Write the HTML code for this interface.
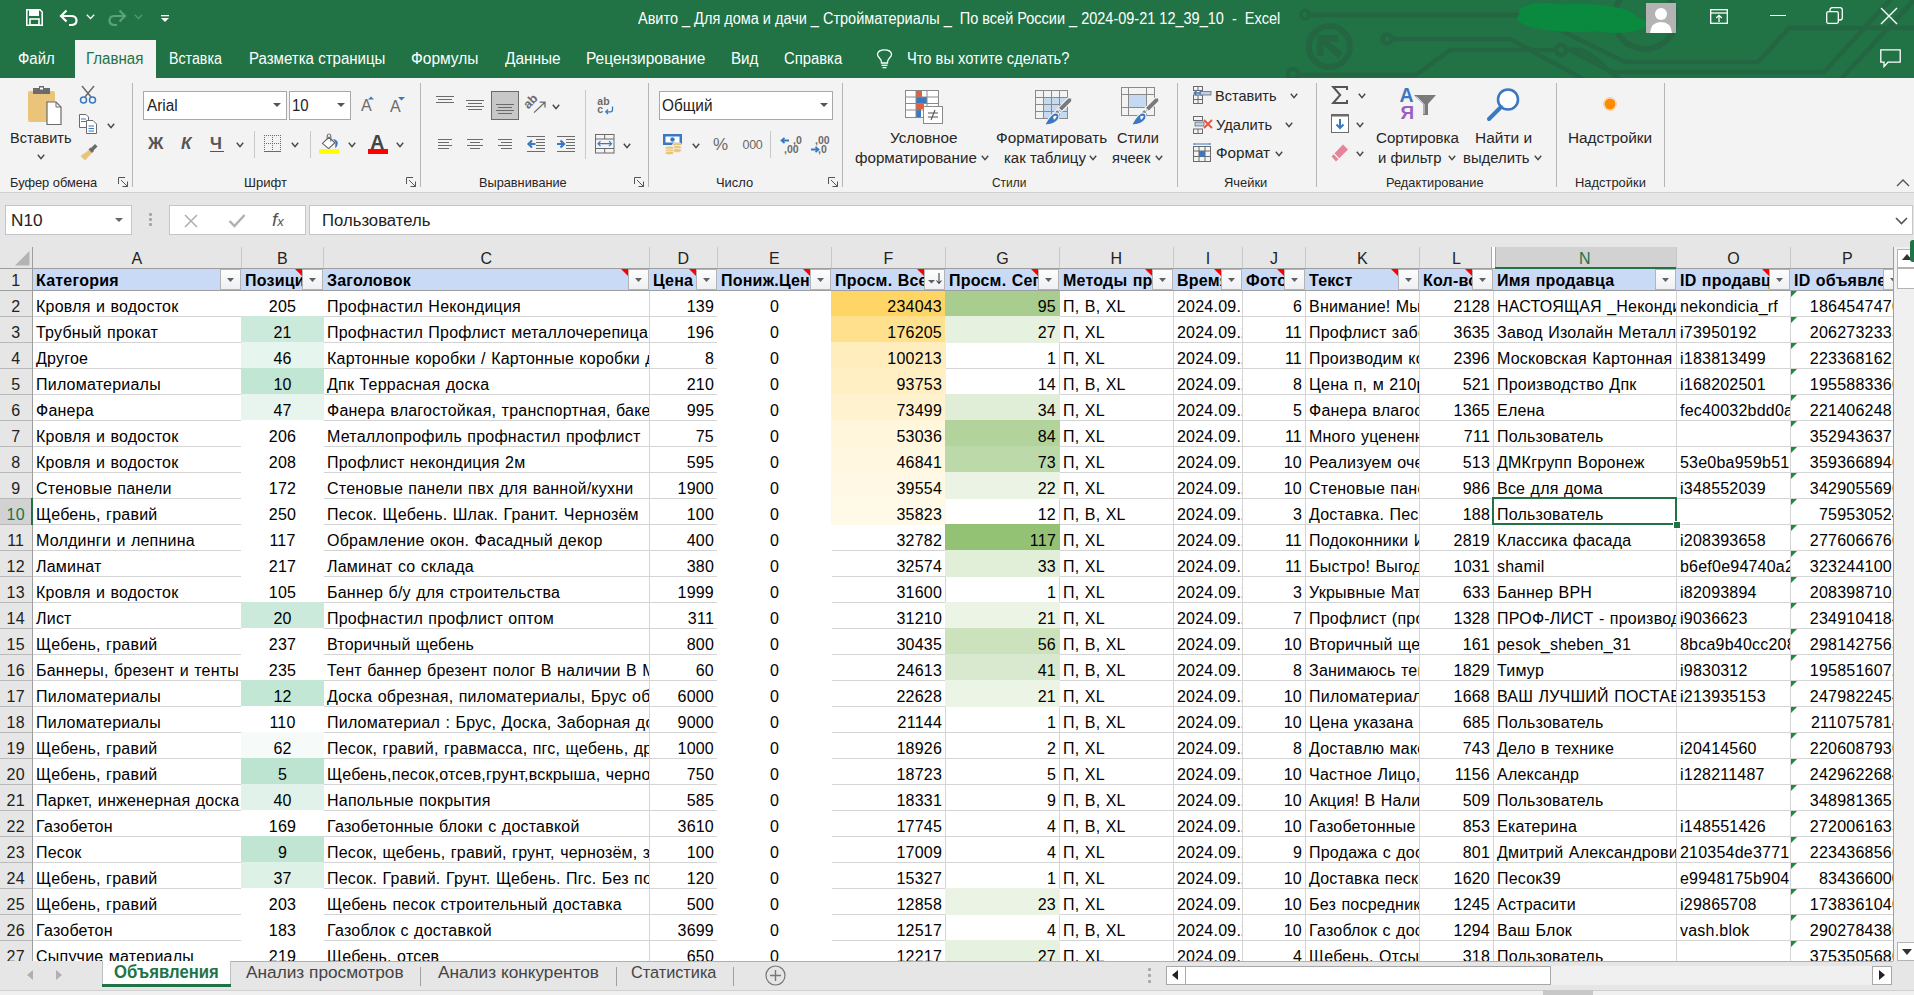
<!DOCTYPE html>
<html><head><meta charset="utf-8"><style>
html,body{margin:0;padding:0;}
body{width:1914px;height:995px;position:relative;overflow:hidden;background:#f0f0f0;font-family:"Liberation Sans",sans-serif;}
.a{position:absolute;}
.t{position:absolute;white-space:pre;}
svg.a{overflow:visible;}
</style></head><body>
<div class="a" style="left:0px;top:0px;width:1914px;height:78px;background:#217346;"></div>
<svg class="a" style="left:1240px;top:0px;" width="674" height="78" viewBox="0 0 674 78">
<g fill="none" stroke="#246642" stroke-width="4.6" stroke-linecap="round" stroke-linejoin="round">
<circle cx="65" cy="14.5" r="4.2" stroke-width="3.4"/><line x1="69" y1="15" x2="290" y2="15" stroke-width="5"/>
<circle cx="89.4" cy="46.6" r="20.5" stroke-width="6"/>
<path d="M80.5 38.5 L100.5 55.5" stroke-width="6.5" stroke-linecap="butt"/>
<rect x="77" y="35" width="21" height="6.5" fill="#246642" stroke="none"/><rect x="77" y="35" width="6.5" height="21" fill="#246642" stroke="none"/>
<circle cx="147" cy="39" r="4.5"/><path d="M151.5 39 L270 39 L345 80"/>
<circle cx="53" cy="74" r="5"/><path d="M58 75 L176 75 L210 50 L316 50"/><circle cx="321" cy="50" r="5"/>
<path d="M326 50 L340 50 Q350 52 370 72 L380 80"/>
<circle cx="405" cy="18" r="31" stroke-width="6"/>
<path d="M300 20 L385 62 L518 62 L549 28 L674 28"/>
<path d="M330 50 L372 72 L584 72 L650 0"/>
<path d="M600 80 L674 0"/>
</g></svg>
<svg class="a" style="left:1515px;top:0px;" width="135" height="36" viewBox="0 0 135 36"><g fill="#0a8a3e"><ellipse cx="62" cy="18" rx="60" ry="14"/><ellipse cx="100" cy="24" rx="32" ry="9"/><ellipse cx="30" cy="12" rx="26" ry="9"/></g></svg>
<svg class="a" style="left:1646px;top:3px;" width="30" height="30" viewBox="0 0 30 30"><rect width="30" height="30" fill="#b3b3b3"/><circle cx="15" cy="11" r="6" fill="#fff"/><path d="M4 30 Q5 19 15 19 Q25 19 26 30 Z" fill="#fff"/></svg>
<svg class="a" style="left:1710px;top:9px;" width="18" height="15" viewBox="0 0 18 15"><g fill="none" stroke="#fff" stroke-width="1.3"><rect x="0.7" y="0.7" width="16.6" height="13.6"/><line x1="0.7" y1="4" x2="17.3" y2="4"/><path d="M9 13 V6.5 M6.2 9 L9 6.3 L11.8 9"/></g></svg>
<div class="a" style="left:1770px;top:15px;width:16px;height:1.3px;background:#fff;"></div>
<svg class="a" style="left:1826px;top:7px;" width="17" height="17" viewBox="0 0 17 17"><g fill="none" stroke="#fff" stroke-width="1.3"><rect x="0.7" y="4.7" width="11.6" height="11.6" rx="1.5"/><path d="M4 4.5 V3 Q4 0.7 6.3 0.7 H14 Q16.3 0.7 16.3 3 V10.7 Q16.3 13 14 13 H12.5"/></g></svg>
<svg class="a" style="left:1880px;top:7px;" width="18" height="18" viewBox="0 0 18 18"><g stroke="#fff" stroke-width="1.4"><line x1="1" y1="1" x2="17" y2="17"/><line x1="17" y1="1" x2="1" y2="17"/></g></svg>
<svg class="a" style="left:26px;top:9px;" width="17" height="17" viewBox="0 0 17 17"><path d="M0.8 0.8 H14 L16.2 3 V16.2 H0.8 Z" fill="none" stroke="#fff" stroke-width="1.6"/><rect x="3" y="1" width="10" height="6" fill="#fff"/><rect x="4" y="10" width="9" height="6" fill="none" stroke="#fff" stroke-width="1.6"/></svg>
<svg class="a" style="left:59px;top:9px;" width="20" height="17" viewBox="0 0 20 17"><path d="M3 7 H12 Q17.5 7 17.5 11.5 Q17.5 16 12 16 H10" fill="none" stroke="#fff" stroke-width="2.2"/><path d="M7.5 1.5 L2 7 L7.5 12.5" fill="none" stroke="#fff" stroke-width="2.2"/></svg>
<svg class="a" style="left:86px;top:14px;" width="9" height="6" viewBox="0 0 9 6"><path d="M0.8 0.8 L4.5 4.5 L8.2 0.8" fill="none" stroke="#fff" stroke-width="1.3"/></svg>
<svg class="a" style="left:107px;top:9px;" width="20" height="17" viewBox="0 0 20 17"><path d="M17 7 H8 Q2.5 7 2.5 11.5 Q2.5 16 8 16 H10" fill="none" stroke="#5aa37a" stroke-width="2.2"/><path d="M12.5 1.5 L18 7 L12.5 12.5" fill="none" stroke="#5aa37a" stroke-width="2.2"/></svg>
<svg class="a" style="left:134px;top:14px;" width="9" height="6" viewBox="0 0 9 6"><path d="M0.8 0.8 L4.5 4.5 L8.2 0.8" fill="none" stroke="#4f9a70" stroke-width="1.3"/></svg>
<svg class="a" style="left:161px;top:15px;" width="8" height="8" viewBox="0 0 8 8"><rect x="0" y="0" width="8" height="1.3" fill="#fff"/><path d="M0 3 H8 L4 7 Z" fill="#fff"/></svg>
<div class="t" style="left:638.20px;top:10px;font-size:15.988px;line-height:17px;color:#fff;transform:scaleX(0.9078);transform-origin:0 0;">Авито _ Для дома и дачи _ Стройматериалы _  По всей России _ 2024-09-21 12_39_10  -  Excel</div>
<div class="a" style="left:75px;top:40px;width:81px;height:38px;background:#f3f3f3;"></div>
<div class="t" style="left:17.54px;top:50px;font-size:15.988px;line-height:17px;color:#fff;transform:scaleX(0.9358);transform-origin:0 0;">Файл</div>
<div class="t" style="left:86.19px;top:50px;font-size:15.988px;line-height:17px;color:#217346;transform:scaleX(0.9440);transform-origin:0 0;">Главная</div>
<div class="t" style="left:169.46px;top:50px;font-size:15.988px;line-height:17px;color:#fff;transform:scaleX(0.8907);transform-origin:0 0;">Вставка</div>
<div class="t" style="left:249.10px;top:50px;font-size:15.988px;line-height:17px;color:#fff;transform:scaleX(0.9414);transform-origin:0 0;">Разметка страницы</div>
<div class="t" style="left:411.11px;top:50px;font-size:15.988px;line-height:17px;color:#fff;transform:scaleX(0.9711);transform-origin:0 0;">Формулы</div>
<div class="t" style="left:504.92px;top:50px;font-size:15.988px;line-height:17px;color:#fff;transform:scaleX(0.9649);transform-origin:0 0;">Данные</div>
<div class="t" style="left:585.76px;top:50px;font-size:15.988px;line-height:17px;color:#fff;transform:scaleX(0.9673);transform-origin:0 0;">Рецензирование</div>
<div class="t" style="left:730.79px;top:50px;font-size:15.988px;line-height:17px;color:#fff;transform:scaleX(0.9496);transform-origin:0 0;">Вид</div>
<div class="t" style="left:784.26px;top:50px;font-size:15.988px;line-height:17px;color:#fff;transform:scaleX(0.9281);transform-origin:0 0;">Справка</div>
<div class="t" style="left:906.86px;top:50px;font-size:15.988px;line-height:17px;color:#fff;transform:scaleX(0.9202);transform-origin:0 0;">Что вы хотите сделать?</div>
<svg class="a" style="left:876px;top:49px;" width="17" height="20" viewBox="0 0 17 20"><g fill="none" stroke="#fff" stroke-width="1.3"><path d="M5.5 14 Q5.5 11 3.5 9 Q1 6.5 1.5 4.8 Q2.5 0.8 8.5 0.8 Q14.5 0.8 15.5 4.8 Q16 6.5 13.5 9 Q11.5 11 11.5 14 Z"/><line x1="5.5" y1="16.3" x2="11.5" y2="16.3"/><line x1="6.5" y1="18.6" x2="10.5" y2="18.6"/></g></svg>
<svg class="a" style="left:1880px;top:49px;" width="21" height="20" viewBox="0 0 21 20"><path d="M0.8 0.8 H20.2 V13.2 H8 L4 17.5 V13.2 H0.8 Z" fill="none" stroke="#fff" stroke-width="1.3"/></svg>
<div class="a" style="left:0px;top:78px;width:1914px;height:114px;background:#f3f3f3;"></div>
<div class="a" style="left:0px;top:192px;width:1914px;height:1px;background:#d0d0d0;"></div>
<div class="a" style="left:132px;top:83px;width:1px;height:104px;background:#b6b6b6;"></div>
<div class="a" style="left:420px;top:83px;width:1px;height:104px;background:#b6b6b6;"></div>
<div class="a" style="left:648px;top:83px;width:1px;height:104px;background:#b6b6b6;"></div>
<div class="a" style="left:842px;top:83px;width:1px;height:104px;background:#b6b6b6;"></div>
<div class="a" style="left:1177px;top:83px;width:1px;height:104px;background:#b6b6b6;"></div>
<div class="a" style="left:1316px;top:83px;width:1px;height:104px;background:#b6b6b6;"></div>
<div class="a" style="left:1556px;top:83px;width:1px;height:104px;background:#b6b6b6;"></div>
<div class="a" style="left:1664px;top:83px;width:1px;height:104px;background:#b6b6b6;"></div>
<svg class="a" style="left:27px;top:86px;" width="36" height="40" viewBox="0 0 36 40"><rect x="1" y="5" width="27" height="31" rx="2" fill="#e9c47a"/>
<rect x="6" y="2" width="17" height="6" fill="#6b6b6b"/><rect x="12" y="0" width="5" height="4" fill="#6b6b6b"/><rect x="13" y="1.5" width="3" height="2" fill="#fff"/>
<path d="M20 16 H29 L34 21 V38.5 H20 Z" fill="#fff" stroke="#6b6b6b" stroke-width="1.2"/><path d="M29 16 V21 H34" fill="none" stroke="#6b6b6b" stroke-width="1"/></svg>
<div class="t" style="left:10.34px;top:129px;font-size:15.552px;line-height:17px;color:#262626;transform:scaleX(0.9338);transform-origin:0 0;">Вставить</div>
<svg class="a" style="left:37px;top:154px;" width="8" height="6" viewBox="0 0 8 6"><path d="M0.8 0.8 L4.0 4.7 L7.2 0.8" fill="none" stroke="#444" stroke-width="1.4"/></svg>
<svg class="a" style="left:79px;top:85px;" width="18" height="19" viewBox="0 0 18 19"><g fill="none" stroke="#6b6b6b" stroke-width="1.5"><path d="M3 1 L12 12 M15 1 L6 12"/></g><g fill="none" stroke="#3b78c2" stroke-width="1.5"><circle cx="4.5" cy="15" r="3"/><circle cx="13.5" cy="15" r="3"/></g></svg>
<svg class="a" style="left:79px;top:114px;" width="19" height="20" viewBox="0 0 19 20"><g fill="#fff" stroke="#6b6b6b" stroke-width="1"><path d="M0.5 0.5 H7 L9.5 3 V13.5 H0.5 Z"/><path d="M7.5 6.5 H14 L17.5 10 V19.5 H7.5 Z"/></g><g stroke="#3b78c2" stroke-width="1"><line x1="2" y1="5" x2="7" y2="5"/><line x1="2" y1="7.5" x2="7" y2="7.5"/><line x1="9.5" y1="12" x2="15" y2="12"/><line x1="9.5" y1="14.5" x2="15" y2="14.5"/><line x1="9.5" y1="17" x2="15" y2="17"/></g></svg>
<svg class="a" style="left:107px;top:123px;" width="8" height="6" viewBox="0 0 8 6"><path d="M0.8 0.8 L4.0 4.7 L7.2 0.8" fill="none" stroke="#444" stroke-width="1.4"/></svg>
<svg class="a" style="left:80px;top:144px;" width="18" height="17" viewBox="0 0 18 17"><path d="M9 6 L12 9 L5 16.5 L0.5 12 Z" fill="#e9c47a"/><path d="M10 5 L15 0 L17.5 2.5 L12.5 7.5 Z" fill="#6b6b6b"/><path d="M8.5 5.5 L10.5 3.5 L14 7 L12 9 Z" fill="#6b6b6b"/></svg>
<div class="t" style="left:10.37px;top:175px;font-size:12.791px;line-height:15px;color:#262626;transform:scaleX(1.0044);transform-origin:0 0;">Буфер обмена</div>
<svg class="a" style="left:118px;top:177px;" width="11" height="11" viewBox="0 0 11 11"><g fill="none" stroke="#555" stroke-width="1"><path d="M0.5 7 V0.5 H7"/><path d="M3 3 L9.5 9.5 M4.5 9.5 H9.5 V4.5"/></g></svg>
<div class="a" style="left:143px;top:91px;width:144px;height:29px;background:#fff;box-sizing:border-box;border:1px solid #a8a8a8;"></div>
<div class="t" style="left:146.50px;top:97px;font-size:15.988px;line-height:17px;color:#222;transform:scaleX(0.9600);transform-origin:0 0;">Arial</div>
<svg class="a" style="left:273px;top:103px;" width="8" height="5" viewBox="0 0 8 5"><path d="M0 0 H8 L4 4 Z" fill="#555"/></svg>
<div class="a" style="left:289px;top:91px;width:62px;height:29px;background:#fff;box-sizing:border-box;border:1px solid #a8a8a8;"></div>
<div class="t" style="left:291.88px;top:97px;font-size:15.988px;line-height:17px;color:#222;transform:scaleX(0.9343);transform-origin:0 0;">10</div>
<svg class="a" style="left:337px;top:103px;" width="8" height="5" viewBox="0 0 8 5"><path d="M0 0 H8 L4 4 Z" fill="#555"/></svg>
<div class="t" style="top:96.46px;font-size:16px;line-height:20.0px;color:#6b6b6b;left:361px;">A</div>
<svg class="a" style="left:368px;top:96px;" width="6" height="4" viewBox="0 0 6 4"><path d="M0 3.5 L3 0.5 L6 3.5 Z" fill="#3b78c2"/></svg>
<div class="t" style="top:97.46px;font-size:16px;line-height:20.0px;color:#6b6b6b;left:390px;">A</div>
<svg class="a" style="left:398px;top:97px;" width="7" height="4" viewBox="0 0 7 4"><path d="M0 0 H7 L3.5 3.5 Z" fill="#3b78c2"/></svg>
<div class="t" style="top:133.48px;font-size:17px;line-height:21.25px;color:#555;font-weight:700;left:148px;">Ж</div>
<div class="t" style="top:133.48px;font-size:17px;line-height:21.25px;color:#555;font-weight:700;left:181px;font-style:italic;">К</div>
<div class="t" style="top:133.48px;font-size:17px;line-height:21.25px;color:#555;font-weight:700;left:210px;">Ч</div>
<div class="a" style="left:210px;top:151px;width:14px;height:1.3px;background:#555;"></div>
<svg class="a" style="left:236px;top:142px;" width="8" height="6" viewBox="0 0 8 6"><path d="M0.8 0.8 L4.0 4.7 L7.2 0.8" fill="none" stroke="#444" stroke-width="1.4"/></svg>
<div class="a" style="left:254px;top:131px;width:1px;height:27px;background:#c8c8c8;"></div>
<svg class="a" style="left:264px;top:135px;" width="18" height="17" viewBox="0 0 18 17"><rect x="0" y="0" width="1" height="1" fill="#6b6b6b"/><rect x="0" y="8" width="1" height="1" fill="#6b6b6b"/><rect x="2" y="0" width="1" height="1" fill="#6b6b6b"/><rect x="2" y="8" width="1" height="1" fill="#6b6b6b"/><rect x="4" y="0" width="1" height="1" fill="#6b6b6b"/><rect x="4" y="8" width="1" height="1" fill="#6b6b6b"/><rect x="6" y="0" width="1" height="1" fill="#6b6b6b"/><rect x="6" y="8" width="1" height="1" fill="#6b6b6b"/><rect x="8" y="0" width="1" height="1" fill="#6b6b6b"/><rect x="8" y="8" width="1" height="1" fill="#6b6b6b"/><rect x="10" y="0" width="1" height="1" fill="#6b6b6b"/><rect x="10" y="8" width="1" height="1" fill="#6b6b6b"/><rect x="12" y="0" width="1" height="1" fill="#6b6b6b"/><rect x="12" y="8" width="1" height="1" fill="#6b6b6b"/><rect x="14" y="0" width="1" height="1" fill="#6b6b6b"/><rect x="14" y="8" width="1" height="1" fill="#6b6b6b"/><rect x="16" y="0" width="1" height="1" fill="#6b6b6b"/><rect x="16" y="8" width="1" height="1" fill="#6b6b6b"/><rect x="0" y="0" width="1" height="1" fill="#6b6b6b"/><rect x="8" y="0" width="1" height="1" fill="#6b6b6b"/><rect x="16" y="0" width="1" height="1" fill="#6b6b6b"/><rect x="0" y="2" width="1" height="1" fill="#6b6b6b"/><rect x="8" y="2" width="1" height="1" fill="#6b6b6b"/><rect x="16" y="2" width="1" height="1" fill="#6b6b6b"/><rect x="0" y="4" width="1" height="1" fill="#6b6b6b"/><rect x="8" y="4" width="1" height="1" fill="#6b6b6b"/><rect x="16" y="4" width="1" height="1" fill="#6b6b6b"/><rect x="0" y="6" width="1" height="1" fill="#6b6b6b"/><rect x="8" y="6" width="1" height="1" fill="#6b6b6b"/><rect x="16" y="6" width="1" height="1" fill="#6b6b6b"/><rect x="0" y="8" width="1" height="1" fill="#6b6b6b"/><rect x="8" y="8" width="1" height="1" fill="#6b6b6b"/><rect x="16" y="8" width="1" height="1" fill="#6b6b6b"/><rect x="0" y="10" width="1" height="1" fill="#6b6b6b"/><rect x="8" y="10" width="1" height="1" fill="#6b6b6b"/><rect x="16" y="10" width="1" height="1" fill="#6b6b6b"/><rect x="0" y="12" width="1" height="1" fill="#6b6b6b"/><rect x="8" y="12" width="1" height="1" fill="#6b6b6b"/><rect x="16" y="12" width="1" height="1" fill="#6b6b6b"/><rect x="0" y="14" width="1" height="1" fill="#6b6b6b"/><rect x="8" y="14" width="1" height="1" fill="#6b6b6b"/><rect x="16" y="14" width="1" height="1" fill="#6b6b6b"/><rect x="0" y="16" width="17" height="1" fill="#6b6b6b"/></svg>
<svg class="a" style="left:291px;top:142px;" width="8" height="6" viewBox="0 0 8 6"><path d="M0.8 0.8 L4.0 4.7 L7.2 0.8" fill="none" stroke="#444" stroke-width="1.4"/></svg>
<div class="a" style="left:310px;top:131px;width:1px;height:27px;background:#c8c8c8;"></div>
<svg class="a" style="left:318px;top:133px;" width="22" height="22" viewBox="0 0 22 22"><path d="M4.4 10.4 L11 4.2 L16.8 9.8 L10.6 15.6 Z" fill="#fff" stroke="#6b6b6b" stroke-width="1.2" stroke-linejoin="round"/><path d="M9.2 6.3 V3 Q9.2 1 11 1 Q12.8 1 12.8 3 V8.5" fill="none" stroke="#6b6b6b" stroke-width="1.1"/><path d="M15 5.8 Q19.8 7 19.8 10.5 Q19.8 12.5 17.3 15.5 L17.3 9 Z" fill="#3b78c2"/><rect x="1" y="16" width="20" height="5" fill="#ffff00"/></svg>
<svg class="a" style="left:348px;top:142px;" width="8" height="6" viewBox="0 0 8 6"><path d="M0.8 0.8 L4.0 4.7 L7.2 0.8" fill="none" stroke="#444" stroke-width="1.4"/></svg>
<div class="t" style="top:130.06px;font-size:19.5px;line-height:24.375px;color:#444;font-weight:700;left:370.2px;">A</div>
<div class="a" style="left:368px;top:149px;width:20px;height:5px;background:#ff0000;"></div>
<svg class="a" style="left:396px;top:142px;" width="8" height="6" viewBox="0 0 8 6"><path d="M0.8 0.8 L4.0 4.7 L7.2 0.8" fill="none" stroke="#444" stroke-width="1.4"/></svg>
<div class="t" style="left:244.26px;top:175px;font-size:12.791px;line-height:15px;color:#262626;transform:scaleX(1.0204);transform-origin:0 0;">Шрифт</div>
<svg class="a" style="left:406px;top:177px;" width="11" height="11" viewBox="0 0 11 11"><g fill="none" stroke="#555" stroke-width="1"><path d="M0.5 7 V0.5 H7"/><path d="M3 3 L9.5 9.5 M4.5 9.5 H9.5 V4.5"/></g></svg>
<div class="a" style="left:436px;top:96px;width:18px;height:1px;background:#6b6b6b;"></div>
<div class="a" style="left:438px;top:99px;width:14px;height:1px;background:#6b6b6b;"></div>
<div class="a" style="left:436px;top:102px;width:18px;height:1px;background:#6b6b6b;"></div>
<div class="a" style="left:466px;top:100px;width:18px;height:1px;background:#6b6b6b;"></div>
<div class="a" style="left:468px;top:103px;width:14px;height:1px;background:#6b6b6b;"></div>
<div class="a" style="left:466px;top:106px;width:18px;height:1px;background:#6b6b6b;"></div>
<div class="a" style="left:468px;top:109px;width:14px;height:1px;background:#6b6b6b;"></div>
<div class="a" style="left:491px;top:91px;width:28px;height:29px;background:#c8c8c8;box-sizing:border-box;border:1px solid #6b6b6b;"></div>
<div class="a" style="left:496px;top:104px;width:18px;height:1px;background:#6b6b6b;"></div>
<div class="a" style="left:498px;top:107px;width:14px;height:1px;background:#6b6b6b;"></div>
<div class="a" style="left:496px;top:110px;width:18px;height:1px;background:#6b6b6b;"></div>
<div class="a" style="left:498px;top:113px;width:14px;height:1px;background:#6b6b6b;"></div>
<svg class="a" style="left:525px;top:94px;" width="22" height="21" viewBox="0 0 22 21"><text x="0" y="0" font-size="12.5" font-weight="bold" fill="#6b6b6b" font-family="Liberation Sans" transform="translate(3.2 15.5) rotate(-45)">ab</text><path d="M9 18.6 L20 8.2 M14.6 8.2 H20 V13.6" fill="none" stroke="#6b6b6b" stroke-width="1.3"/></svg>
<svg class="a" style="left:552px;top:104px;" width="8" height="6" viewBox="0 0 8 6"><path d="M0.8 0.8 L4.0 4.7 L7.2 0.8" fill="none" stroke="#444" stroke-width="1.4"/></svg>
<div class="a" style="left:585px;top:90px;width:1px;height:69px;background:#c8c8c8;"></div>
<svg class="a" style="left:596px;top:96px;" width="20" height="19" viewBox="0 0 20 19"><text x="1.3" y="8.8" font-size="10.5" font-weight="bold" fill="#6b6b6b" font-family="Liberation Sans">ab</text><text x="1.3" y="17" font-size="10.5" font-weight="bold" fill="#6b6b6b" font-family="Liberation Sans">c</text><path d="M16.5 10.5 V14 Q16.5 15.8 14.5 15.8 H10 M12 13.5 L9.8 15.8 L12 18" fill="none" stroke="#3b78c2" stroke-width="1.3"/></svg>
<div class="a" style="left:438px;top:139px;width:14px;height:1px;background:#6b6b6b;"></div>
<div class="a" style="left:438px;top:142px;width:11px;height:1px;background:#6b6b6b;"></div>
<div class="a" style="left:438px;top:145px;width:14px;height:1px;background:#6b6b6b;"></div>
<div class="a" style="left:438px;top:148px;width:11px;height:1px;background:#6b6b6b;"></div>
<div class="a" style="left:467px;top:139px;width:16px;height:1px;background:#6b6b6b;"></div>
<div class="a" style="left:470px;top:142px;width:10px;height:1px;background:#6b6b6b;"></div>
<div class="a" style="left:467px;top:145px;width:16px;height:1px;background:#6b6b6b;"></div>
<div class="a" style="left:470px;top:148px;width:10px;height:1px;background:#6b6b6b;"></div>
<div class="a" style="left:498px;top:139px;width:14px;height:1px;background:#6b6b6b;"></div>
<div class="a" style="left:501px;top:142px;width:11px;height:1px;background:#6b6b6b;"></div>
<div class="a" style="left:498px;top:145px;width:14px;height:1px;background:#6b6b6b;"></div>
<div class="a" style="left:501px;top:148px;width:11px;height:1px;background:#6b6b6b;"></div>
<div class="a" style="left:527px;top:136px;width:18px;height:1px;background:#6b6b6b;"></div>
<div class="a" style="left:536px;top:139px;width:9px;height:1px;background:#6b6b6b;"></div>
<div class="a" style="left:536px;top:142px;width:9px;height:1px;background:#6b6b6b;"></div>
<div class="a" style="left:536px;top:145px;width:9px;height:1px;background:#6b6b6b;"></div>
<div class="a" style="left:536px;top:148px;width:9px;height:1px;background:#6b6b6b;"></div>
<div class="a" style="left:527px;top:151px;width:18px;height:1px;background:#6b6b6b;"></div>
<svg class="a" style="left:527px;top:139px;" width="9" height="10" viewBox="0 0 9 10"><path d="M8.5 5 H2 M5 1.5 L1.5 5 L5 8.5" fill="none" stroke="#3b78c2" stroke-width="2.2"/></svg>
<div class="a" style="left:557px;top:136px;width:18px;height:1px;background:#6b6b6b;"></div>
<div class="a" style="left:566px;top:139px;width:9px;height:1px;background:#6b6b6b;"></div>
<div class="a" style="left:566px;top:142px;width:9px;height:1px;background:#6b6b6b;"></div>
<div class="a" style="left:566px;top:145px;width:9px;height:1px;background:#6b6b6b;"></div>
<div class="a" style="left:566px;top:148px;width:9px;height:1px;background:#6b6b6b;"></div>
<div class="a" style="left:557px;top:151px;width:18px;height:1px;background:#6b6b6b;"></div>
<svg class="a" style="left:557px;top:139px;" width="9" height="10" viewBox="0 0 9 10"><path d="M0 5 H6.5 M3.5 1.5 L7 5 L3.5 8.5" fill="none" stroke="#3b78c2" stroke-width="2.2"/></svg>
<svg class="a" style="left:595px;top:134px;" width="20" height="20" viewBox="0 0 20 20"><g fill="none" stroke="#6b6b6b" stroke-width="1"><rect x="0.5" y="0.5" width="18.5" height="18.5"/><line x1="0.5" y1="5" x2="19" y2="5"/><line x1="0.5" y1="14.5" x2="19" y2="14.5"/><line x1="9.7" y1="0.5" x2="9.7" y2="5"/><line x1="9.7" y1="14.5" x2="9.7" y2="19"/></g><path d="M3 9.7 H16.5 M5.5 7.2 L3 9.7 L5.5 12.2 M14 7.2 L16.5 9.7 L14 12.2" fill="none" stroke="#3b78c2" stroke-width="1.2"/></svg>
<svg class="a" style="left:623px;top:143px;" width="8" height="6" viewBox="0 0 8 6"><path d="M0.8 0.8 L4.0 4.7 L7.2 0.8" fill="none" stroke="#444" stroke-width="1.4"/></svg>
<div class="t" style="left:479.28px;top:175px;font-size:12.791px;line-height:15px;color:#262626;transform:scaleX(0.9969);transform-origin:0 0;">Выравнивание</div>
<svg class="a" style="left:634px;top:177px;" width="11" height="11" viewBox="0 0 11 11"><g fill="none" stroke="#555" stroke-width="1"><path d="M0.5 7 V0.5 H7"/><path d="M3 3 L9.5 9.5 M4.5 9.5 H9.5 V4.5"/></g></svg>
<div class="a" style="left:659px;top:91px;width:174px;height:29px;background:#fff;box-sizing:border-box;border:1px solid #a8a8a8;"></div>
<div class="t" style="left:661.61px;top:97px;font-size:15.698px;line-height:17px;color:#222;transform:scaleX(0.9784);transform-origin:0 0;">Общий</div>
<svg class="a" style="left:820px;top:103px;" width="8" height="5" viewBox="0 0 8 5"><path d="M0 0 H8 L4 4 Z" fill="#555"/></svg>
<svg class="a" style="left:663px;top:134px;" width="20" height="21" viewBox="0 0 20 21"><rect x="0" y="0" width="19" height="11" fill="#3b78c2"/><rect x="2.5" y="2.5" width="14" height="6" fill="#fff"/><circle cx="9.5" cy="5.5" r="2.2" fill="#3b78c2"/><g fill="#e9c47a" stroke="#f3f3f3" stroke-width="0.8"><ellipse cx="14" cy="10.5" rx="4.5" ry="2"/><ellipse cx="14" cy="13.5" rx="4.5" ry="2"/><ellipse cx="14" cy="16.5" rx="4.5" ry="2"/><ellipse cx="6.5" cy="14" rx="4.5" ry="2"/><ellipse cx="6.5" cy="17" rx="4.5" ry="2"/><ellipse cx="6.5" cy="19" rx="4.5" ry="1.8"/></g></svg>
<svg class="a" style="left:692px;top:143px;" width="8" height="6" viewBox="0 0 8 6"><path d="M0.8 0.8 L4.0 4.7 L7.2 0.8" fill="none" stroke="#444" stroke-width="1.4"/></svg>
<div class="t" style="top:134.48px;font-size:17px;line-height:21.25px;color:#6b6b6b;left:713px;">%</div>
<div class="t" style="top:137.86px;font-size:12.5px;line-height:15.625px;color:#6b6b6b;letter-spacing:-0.3px;left:742.5px;">000</div>
<div class="a" style="left:770px;top:131px;width:1px;height:27px;background:#c8c8c8;"></div>
<div class="t" style="top:134.30px;font-size:10.5px;line-height:13.125px;color:#6b6b6b;font-weight:700;left:793px;">,0</div>
<div class="t" style="top:142.80px;font-size:10.5px;line-height:13.125px;color:#6b6b6b;font-weight:700;left:784px;">,00</div>
<svg class="a" style="left:780px;top:137px;" width="10" height="7" viewBox="0 0 10 7"><path d="M9 3.5 H2 M4.5 0.8 L1.5 3.5 L4.5 6.2" fill="none" stroke="#3b78c2" stroke-width="1.8"/></svg>
<div class="t" style="top:134.30px;font-size:10.5px;line-height:13.125px;color:#6b6b6b;font-weight:700;left:815px;">,00</div>
<div class="t" style="top:142.80px;font-size:10.5px;line-height:13.125px;color:#6b6b6b;font-weight:700;left:818px;">,0</div>
<svg class="a" style="left:810px;top:146px;" width="10" height="7" viewBox="0 0 10 7"><path d="M1 3.5 H8 M5.5 0.8 L8.5 3.5 L5.5 6.2" fill="none" stroke="#3b78c2" stroke-width="1.8"/></svg>
<div class="t" style="left:715.70px;top:175px;font-size:12.791px;line-height:15px;color:#262626;transform:scaleX(1.0093);transform-origin:0 0;">Число</div>
<svg class="a" style="left:828px;top:177px;" width="11" height="11" viewBox="0 0 11 11"><g fill="none" stroke="#555" stroke-width="1"><path d="M0.5 7 V0.5 H7"/><path d="M3 3 L9.5 9.5 M4.5 9.5 H9.5 V4.5"/></g></svg>
<svg class="a" style="left:905px;top:90px;" width="39" height="36" viewBox="0 0 39 36"><g fill="#fff" stroke="#8a8a8a" stroke-width="1"><rect x="0.5" y="0.5" width="33" height="27"/></g>
<rect x="11" y="1" width="6" height="6" fill="#e0603a"/><rect x="11" y="7" width="11" height="6" fill="#3b78c2"/><rect x="11" y="13" width="8" height="6" fill="#e0603a"/><rect x="11" y="19" width="5" height="8" fill="#3b78c2"/>
<g stroke="#8a8a8a" stroke-width="1"><line x1="11" y1="0.5" x2="11" y2="27.5"/><line x1="22" y1="0.5" x2="22" y2="27.5"/><line x1="0.5" y1="7" x2="33.5" y2="7"/><line x1="0.5" y1="13.5" x2="33.5" y2="13.5"/><line x1="0.5" y1="20" x2="33.5" y2="20"/></g>
<rect x="18.5" y="16.5" width="19" height="17" fill="#fff" stroke="#8a8a8a" stroke-width="1"/><path d="M23 23 H33 M23 27 H33 M30 20 L26 30" stroke="#555" stroke-width="1.1" fill="none"/></svg>
<div class="t" style="left:889.82px;top:129px;font-size:15.407px;line-height:17px;color:#262626;transform:scaleX(0.9928);transform-origin:0 0;">Условное</div>
<div class="t" style="left:855.09px;top:149px;font-size:15.407px;line-height:17px;color:#262626;transform:scaleX(0.9860);transform-origin:0 0;">форматирование</div>
<svg class="a" style="left:981px;top:155px;" width="8" height="6" viewBox="0 0 8 6"><path d="M0.8 0.8 L4.0 4.7 L7.2 0.8" fill="none" stroke="#444" stroke-width="1.4"/></svg>
<svg class="a" style="left:1034px;top:89px;" width="36" height="32" viewBox="0 0 36 32"><rect x="9" y="8" width="25" height="22" fill="#c5d9f1"/><g fill="none" stroke="#8a8a8a" stroke-width="1"><rect x="1.5" y="1.5" width="32" height="28"/><line x1="9.5" y1="1.5" x2="9.5" y2="29.5"/><line x1="17.5" y1="1.5" x2="17.5" y2="29.5"/><line x1="25.5" y1="1.5" x2="25.5" y2="29.5"/><line x1="1.5" y1="8.5" x2="33.5" y2="8.5"/><line x1="1.5" y1="15.5" x2="33.5" y2="15.5"/><line x1="1.5" y1="22.5" x2="33.5" y2="22.5"/></g></svg>
<svg class="a" style="left:1044px;top:97px;" width="29" height="29" viewBox="0 0 29 29"><g stroke="#f3f3f3" stroke-width="1.2"><polygon points="14.2,10.9 17.8,14.5 27.8,4.5 27.8,0.9 24.2,0.9" fill="#7a7a7a"/><polygon points="10.2,15.4 13.2,12.4 16,15.2 13,18.2" fill="#7a7a7a"/><path d="M0.5 28 C3.5 22.5 7 17 10.8 16 C14.5 15.3 16 18.8 14.5 22 C12 26 6.5 28 0.5 28 Z" fill="#3b78c2"/></g><path d="M9.3 19.6 Q11.2 17.9 12.8 19.2 Q12 21.5 10 23 Q9.2 21.2 9.3 19.6 Z" fill="#fff"/></svg>
<div class="t" style="left:995.52px;top:129px;font-size:15.407px;line-height:17px;color:#262626;transform:scaleX(0.9957);transform-origin:0 0;">Форматировать</div>
<div class="t" style="left:1003.53px;top:149px;font-size:15.407px;line-height:17px;color:#262626;transform:scaleX(0.9713);transform-origin:0 0;">как таблицу</div>
<svg class="a" style="left:1089px;top:155px;" width="8" height="6" viewBox="0 0 8 6"><path d="M0.8 0.8 L4.0 4.7 L7.2 0.8" fill="none" stroke="#444" stroke-width="1.4"/></svg>
<svg class="a" style="left:1120px;top:87px;" width="36" height="30" viewBox="0 0 36 30"><rect x="9" y="8" width="18" height="13" fill="#c5d9f1"/><g fill="none" stroke="#8a8a8a" stroke-width="1"><rect x="1.5" y="0.5" width="33" height="28"/><line x1="8.5" y1="0.5" x2="8.5" y2="28.5"/><line x1="26.5" y1="0.5" x2="26.5" y2="28.5"/><line x1="1.5" y1="7.5" x2="34.5" y2="7.5"/><line x1="1.5" y1="20.5" x2="34.5" y2="20.5"/></g></svg>
<svg class="a" style="left:1131px;top:97px;" width="29" height="29" viewBox="0 0 29 29"><g stroke="#f3f3f3" stroke-width="1.2"><polygon points="14.2,10.9 17.8,14.5 27.8,4.5 27.8,0.9 24.2,0.9" fill="#7a7a7a"/><polygon points="10.2,15.4 13.2,12.4 16,15.2 13,18.2" fill="#7a7a7a"/><path d="M0.5 28 C3.5 22.5 7 17 10.8 16 C14.5 15.3 16 18.8 14.5 22 C12 26 6.5 28 0.5 28 Z" fill="#3b78c2"/></g><path d="M9.3 19.6 Q11.2 17.9 12.8 19.2 Q12 21.5 10 23 Q9.2 21.2 9.3 19.6 Z" fill="#fff"/></svg>
<div class="t" style="left:1117.17px;top:129px;font-size:15.407px;line-height:17px;color:#262626;transform:scaleX(0.9422);transform-origin:0 0;">Стили</div>
<div class="t" style="left:1112.49px;top:149px;font-size:15.407px;line-height:17px;color:#262626;transform:scaleX(0.9549);transform-origin:0 0;">ячеек</div>
<svg class="a" style="left:1155px;top:155px;" width="8" height="6" viewBox="0 0 8 6"><path d="M0.8 0.8 L4.0 4.7 L7.2 0.8" fill="none" stroke="#444" stroke-width="1.4"/></svg>
<div class="t" style="left:991.80px;top:175px;font-size:12.791px;line-height:15px;color:#262626;transform:scaleX(0.9311);transform-origin:0 0;">Стили</div>
<svg class="a" style="left:1193px;top:86px;" width="19" height="19" viewBox="0 0 19 19"><g fill="none" stroke="#6b6b6b" stroke-width="1"><rect x="0.5" y="0.5" width="9" height="4"/><rect x="0.5" y="13.5" width="9" height="4"/><rect x="0.5" y="9" width="9" height="4.5"/><line x1="5" y1="9" x2="5" y2="17.5"/><line x1="5" y1="0.5" x2="5" y2="4.5"/></g><rect x="7" y="5.5" width="11" height="3.5" fill="#bcd0ea" stroke="#6b6b6b" stroke-width="0.8"/><path d="M1 7 H8 M3.5 4.8 L1.2 7 L3.5 9.2" fill="none" stroke="#3b78c2" stroke-width="1.3"/></svg>
<div class="t" style="left:1215.24px;top:87px;font-size:15.116px;line-height:17px;color:#262626;transform:scaleX(0.9608);transform-origin:0 0;">Вставить</div>
<svg class="a" style="left:1290px;top:93px;" width="8" height="6" viewBox="0 0 8 6"><path d="M0.8 0.8 L4.0 4.7 L7.2 0.8" fill="none" stroke="#444" stroke-width="1.4"/></svg>
<svg class="a" style="left:1193px;top:116px;" width="20" height="18" viewBox="0 0 20 18"><g fill="none" stroke="#6b6b6b" stroke-width="1"><rect x="0.5" y="0.5" width="9" height="4"/><rect x="0.5" y="13" width="9" height="4.5"/><line x1="5" y1="13" x2="5" y2="17.5"/></g><rect x="2" y="6" width="9" height="4" fill="#bcd0ea" stroke="#6b6b6b" stroke-width="0.8"/><path d="M11 4 L19 12 M19 4 L11 12" stroke="#e8533a" stroke-width="1.8"/></svg>
<div class="t" style="left:1215.73px;top:116px;font-size:15.116px;line-height:17px;color:#262626;transform:scaleX(0.9714);transform-origin:0 0;">Удалить</div>
<svg class="a" style="left:1285px;top:122px;" width="8" height="6" viewBox="0 0 8 6"><path d="M0.8 0.8 L4.0 4.7 L7.2 0.8" fill="none" stroke="#444" stroke-width="1.4"/></svg>
<svg class="a" style="left:1193px;top:143px;" width="19" height="20" viewBox="0 0 19 20"><g fill="none" stroke="#6b6b6b" stroke-width="1"><rect x="0.5" y="3.5" width="17" height="15"/><line x1="0.5" y1="8" x2="17.5" y2="8"/><line x1="0.5" y1="13.5" x2="17.5" y2="13.5"/><line x1="6" y1="3.5" x2="6" y2="18.5"/><line x1="12" y1="3.5" x2="12" y2="18.5"/></g><rect x="6" y="8" width="6" height="5.5" fill="#3b78c2"/><path d="M1 1 H17" stroke="#3b78c2" stroke-width="1"/><path d="M1 0 V2 M17 0 V2" stroke="#3b78c2" stroke-width="1"/></svg>
<div class="t" style="left:1215.52px;top:144px;font-size:15.116px;line-height:17px;color:#262626;transform:scaleX(1.0075);transform-origin:0 0;">Формат</div>
<svg class="a" style="left:1275px;top:151px;" width="8" height="6" viewBox="0 0 8 6"><path d="M0.8 0.8 L4.0 4.7 L7.2 0.8" fill="none" stroke="#444" stroke-width="1.4"/></svg>
<div class="t" style="left:1224.42px;top:175px;font-size:12.791px;line-height:15px;color:#262626;transform:scaleX(1.0086);transform-origin:0 0;">Ячейки</div>
<svg class="a" style="left:1332px;top:86px;" width="16" height="18" viewBox="0 0 16 18"><path d="M15 4 V1 H1.2 L8.2 9 L1.2 17 H15 V14" fill="none" stroke="#555" stroke-width="2"/></svg>
<svg class="a" style="left:1358px;top:93px;" width="8" height="6" viewBox="0 0 8 6"><path d="M0.8 0.8 L4.0 4.7 L7.2 0.8" fill="none" stroke="#444" stroke-width="1.4"/></svg>
<svg class="a" style="left:1331px;top:114px;" width="18" height="19" viewBox="0 0 18 19"><rect x="0.5" y="0.5" width="17" height="18" fill="#fff" stroke="#6b6b6b"/><rect x="0.5" y="0.5" width="17" height="2" fill="#6b6b6b"/><path d="M9 5 V14 M5.5 10.5 L9 14 L12.5 10.5" fill="none" stroke="#3b78c2" stroke-width="2"/></svg>
<svg class="a" style="left:1356px;top:122px;" width="8" height="6" viewBox="0 0 8 6"><path d="M0.8 0.8 L4.0 4.7 L7.2 0.8" fill="none" stroke="#444" stroke-width="1.4"/></svg>
<svg class="a" style="left:1331px;top:144px;" width="18" height="18" viewBox="0 0 18 18"><polygon points="0.5,12.5 5,17.5 17,5.5 12,0.5" fill="#e8849a"/><path d="M2.9 9.7 L7.8 14.6" stroke="#fff" stroke-width="1.1"/></svg>
<svg class="a" style="left:1356px;top:151px;" width="8" height="6" viewBox="0 0 8 6"><path d="M0.8 0.8 L4.0 4.7 L7.2 0.8" fill="none" stroke="#444" stroke-width="1.4"/></svg>
<svg class="a" style="left:1398px;top:86px;" width="40" height="34" viewBox="0 0 40 34"><text x="1.5" y="15.9" font-size="19.5" font-weight="bold" font-family="Liberation Sans" fill="#3b78c2">A</text><text x="2.5" y="32.7" font-size="19" font-weight="bold" font-family="Liberation Sans" fill="#9b5fc0">Я</text><path d="M16 9 H38 L30 18 V29 H25 V18 Z" fill="#7a7a7a"/><path d="M18.5 10.5 L26 18.5 V28" fill="none" stroke="#fff" stroke-width="0.9" opacity="0.9"/></svg>
<div class="t" style="left:1375.54px;top:129px;font-size:15.407px;line-height:17px;color:#262626;transform:scaleX(0.9819);transform-origin:0 0;">Сортировка</div>
<div class="t" style="left:1378.39px;top:149px;font-size:15.407px;line-height:17px;color:#262626;transform:scaleX(0.9681);transform-origin:0 0;">и фильтр</div>
<svg class="a" style="left:1448px;top:155px;" width="8" height="6" viewBox="0 0 8 6"><path d="M0.8 0.8 L4.0 4.7 L7.2 0.8" fill="none" stroke="#444" stroke-width="1.4"/></svg>
<svg class="a" style="left:1486px;top:87px;" width="36" height="36" viewBox="0 0 36 36"><circle cx="22" cy="12.5" r="10" fill="#fff" stroke="#3b78c2" stroke-width="2.6"/><path d="M15 20 L3 32" stroke="#3b78c2" stroke-width="4" stroke-linecap="round"/></svg>
<div class="t" style="left:1475.36px;top:129px;font-size:15.407px;line-height:17px;color:#262626;transform:scaleX(1.0040);transform-origin:0 0;">Найти и</div>
<div class="t" style="left:1463.00px;top:149px;font-size:15.407px;line-height:17px;color:#262626;transform:scaleX(0.9654);transform-origin:0 0;">выделить</div>
<svg class="a" style="left:1534px;top:155px;" width="8" height="6" viewBox="0 0 8 6"><path d="M0.8 0.8 L4.0 4.7 L7.2 0.8" fill="none" stroke="#444" stroke-width="1.4"/></svg>
<div class="t" style="left:1386.18px;top:175px;font-size:12.791px;line-height:15px;color:#262626;transform:scaleX(1.0014);transform-origin:0 0;">Редактирование</div>
<svg class="a" style="left:1603px;top:97px;" width="14" height="14" viewBox="0 0 14 14"><circle cx="7" cy="7" r="5.5" fill="#ff8c00"/><circle cx="7" cy="7" r="6.5" fill="none" stroke="#ffb060" stroke-width="1" opacity="0.6"/></svg>
<div class="t" style="left:1568.17px;top:129px;font-size:15.407px;line-height:17px;color:#262626;transform:scaleX(0.9959);transform-origin:0 0;">Надстройки</div>
<div class="t" style="left:1574.57px;top:175px;font-size:12.791px;line-height:15px;color:#262626;transform:scaleX(1.0107);transform-origin:0 0;">Надстройки</div>
<svg class="a" style="left:1896px;top:179px;" width="14" height="8" viewBox="0 0 14 8"><path d="M1 7 L7 1 L13 7" fill="none" stroke="#555" stroke-width="1.4"/></svg>
<div class="a" style="left:0px;top:193px;width:1914px;height:54px;background:#e6e6e6;"></div>
<div class="a" style="left:5px;top:205px;width:127px;height:30px;background:#fff;box-sizing:border-box;border:1px solid #c6c6c6;"></div>
<div class="t" style="left:11.12px;top:211px;font-size:16.424px;line-height:18px;color:#222;transform:scaleX(1.0473);transform-origin:0 0;">N10</div>
<svg class="a" style="left:115px;top:218px;" width="8" height="5" viewBox="0 0 8 5"><path d="M0 0 H8 L4 4 Z" fill="#666"/></svg>
<div class="a" style="left:149px;top:213px;width:3px;height:3px;background:#a6a6a6;border-radius:1px;"></div>
<div class="a" style="left:149px;top:218px;width:3px;height:3px;background:#a6a6a6;border-radius:1px;"></div>
<div class="a" style="left:149px;top:223px;width:3px;height:3px;background:#a6a6a6;border-radius:1px;"></div>
<div class="a" style="left:169px;top:205px;width:137px;height:30px;background:#fff;box-sizing:border-box;border:1px solid #c6c6c6;"></div>
<svg class="a" style="left:184px;top:214px;" width="14" height="14" viewBox="0 0 14 14"><path d="M1 1 L13 13 M13 1 L1 13" stroke="#b0b0b0" stroke-width="1.6"/></svg>
<svg class="a" style="left:228px;top:213px;" width="18" height="15" viewBox="0 0 18 15"><path d="M1.5 8 L6.5 13 L16.5 2" fill="none" stroke="#b0b0b0" stroke-width="2.4"/></svg>
<div class="t" style="top:207.54px;font-size:19px;line-height:23.75px;color:#555;left:272px;font-family:"Liberation Serif",serif;"><i>f</i><span style="font-size:13px"><i>x</i></span></div>
<div class="a" style="left:309px;top:205px;width:1604px;height:30px;background:#fff;box-sizing:border-box;border:1px solid #c6c6c6;"></div>
<div class="t" style="left:321.86px;top:212px;font-size:15.988px;line-height:17px;color:#222;transform:scaleX(1.0461);transform-origin:0 0;">Пользователь</div>
<svg class="a" style="left:1895px;top:217px;" width="13" height="8" viewBox="0 0 13 8"><path d="M1 1 L6.5 6.5 L12 1" fill="none" stroke="#555" stroke-width="1.6"/></svg>
<div class="a" style="left:0;top:247px;width:1893px;height:714px;overflow:hidden;background:#fff">
<div class="a" style="left:33px;top:69px;width:1860px;height:1px;background:#d4d4d4;"></div>
<div class="a" style="left:33px;top:95px;width:1860px;height:1px;background:#d4d4d4;"></div>
<div class="a" style="left:33px;top:121px;width:1860px;height:1px;background:#d4d4d4;"></div>
<div class="a" style="left:33px;top:147px;width:1860px;height:1px;background:#d4d4d4;"></div>
<div class="a" style="left:33px;top:173px;width:1860px;height:1px;background:#d4d4d4;"></div>
<div class="a" style="left:33px;top:199px;width:1860px;height:1px;background:#d4d4d4;"></div>
<div class="a" style="left:33px;top:225px;width:1860px;height:1px;background:#d4d4d4;"></div>
<div class="a" style="left:33px;top:251px;width:1860px;height:1px;background:#d4d4d4;"></div>
<div class="a" style="left:33px;top:277px;width:1860px;height:1px;background:#d4d4d4;"></div>
<div class="a" style="left:33px;top:303px;width:1860px;height:1px;background:#d4d4d4;"></div>
<div class="a" style="left:33px;top:329px;width:1860px;height:1px;background:#d4d4d4;"></div>
<div class="a" style="left:33px;top:355px;width:1860px;height:1px;background:#d4d4d4;"></div>
<div class="a" style="left:33px;top:381px;width:1860px;height:1px;background:#d4d4d4;"></div>
<div class="a" style="left:33px;top:407px;width:1860px;height:1px;background:#d4d4d4;"></div>
<div class="a" style="left:33px;top:433px;width:1860px;height:1px;background:#d4d4d4;"></div>
<div class="a" style="left:33px;top:459px;width:1860px;height:1px;background:#d4d4d4;"></div>
<div class="a" style="left:33px;top:485px;width:1860px;height:1px;background:#d4d4d4;"></div>
<div class="a" style="left:33px;top:511px;width:1860px;height:1px;background:#d4d4d4;"></div>
<div class="a" style="left:33px;top:537px;width:1860px;height:1px;background:#d4d4d4;"></div>
<div class="a" style="left:33px;top:563px;width:1860px;height:1px;background:#d4d4d4;"></div>
<div class="a" style="left:33px;top:589px;width:1860px;height:1px;background:#d4d4d4;"></div>
<div class="a" style="left:33px;top:615px;width:1860px;height:1px;background:#d4d4d4;"></div>
<div class="a" style="left:33px;top:641px;width:1860px;height:1px;background:#d4d4d4;"></div>
<div class="a" style="left:33px;top:667px;width:1860px;height:1px;background:#d4d4d4;"></div>
<div class="a" style="left:33px;top:693px;width:1860px;height:1px;background:#d4d4d4;"></div>
<div class="a" style="left:33px;top:719px;width:1860px;height:1px;background:#d4d4d4;"></div>
<div class="a" style="left:241px;top:22px;width:1px;height:692px;background:#d4d4d4;"></div>
<div class="a" style="left:323px;top:22px;width:1px;height:692px;background:#d4d4d4;"></div>
<div class="a" style="left:649px;top:22px;width:1px;height:692px;background:#d4d4d4;"></div>
<div class="a" style="left:717px;top:22px;width:1px;height:692px;background:#d4d4d4;"></div>
<div class="a" style="left:831px;top:22px;width:1px;height:692px;background:#d4d4d4;"></div>
<div class="a" style="left:945px;top:22px;width:1px;height:692px;background:#d4d4d4;"></div>
<div class="a" style="left:1059px;top:22px;width:1px;height:692px;background:#d4d4d4;"></div>
<div class="a" style="left:1173px;top:22px;width:1px;height:692px;background:#d4d4d4;"></div>
<div class="a" style="left:1242px;top:22px;width:1px;height:692px;background:#d4d4d4;"></div>
<div class="a" style="left:1305px;top:22px;width:1px;height:692px;background:#d4d4d4;"></div>
<div class="a" style="left:1419px;top:22px;width:1px;height:692px;background:#d4d4d4;"></div>
<div class="a" style="left:1493px;top:22px;width:1px;height:692px;background:#d4d4d4;"></div>
<div class="a" style="left:1676px;top:22px;width:1px;height:692px;background:#d4d4d4;"></div>
<div class="a" style="left:1790px;top:22px;width:1px;height:692px;background:#d4d4d4;"></div>
<div class="a" style="left:1904px;top:22px;width:1px;height:692px;background:#d4d4d4;"></div>
<div class="a" style="left:241px;top:43px;width:83px;height:27px;background:#ffffff;"></div>
<div class="a" style="left:717px;top:43px;width:115px;height:27px;background:#fff;"></div>
<div class="a" style="left:831px;top:43px;width:115px;height:27px;background:#ffd666;"></div>
<div class="a" style="left:945px;top:43px;width:115px;height:27px;background:#a8cd8f;"></div>
<div class="a" style="left:241px;top:69px;width:83px;height:27px;background:#cceadc;"></div>
<div class="a" style="left:717px;top:69px;width:115px;height:27px;background:#fff;"></div>
<div class="a" style="left:831px;top:69px;width:115px;height:27px;background:#ffe08c;"></div>
<div class="a" style="left:945px;top:69px;width:115px;height:27px;background:#e6f1df;"></div>
<div class="a" style="left:241px;top:95px;width:83px;height:27px;background:#e6f5ed;"></div>
<div class="a" style="left:717px;top:95px;width:115px;height:27px;background:#fff;"></div>
<div class="a" style="left:831px;top:95px;width:115px;height:27px;background:#ffedbd;"></div>
<div class="a" style="left:241px;top:121px;width:83px;height:27px;background:#c1e6d4;"></div>
<div class="a" style="left:717px;top:121px;width:115px;height:27px;background:#fff;"></div>
<div class="a" style="left:831px;top:121px;width:115px;height:27px;background:#ffefc2;"></div>
<div class="a" style="left:241px;top:147px;width:83px;height:27px;background:#e7f5ee;"></div>
<div class="a" style="left:717px;top:147px;width:115px;height:27px;background:#fff;"></div>
<div class="a" style="left:831px;top:147px;width:115px;height:27px;background:#fff2cf;"></div>
<div class="a" style="left:945px;top:147px;width:115px;height:27px;background:#e0edd7;"></div>
<div class="a" style="left:241px;top:173px;width:83px;height:27px;background:#ffffff;"></div>
<div class="a" style="left:717px;top:173px;width:115px;height:27px;background:#fff;"></div>
<div class="a" style="left:831px;top:173px;width:115px;height:27px;background:#fff6dc;"></div>
<div class="a" style="left:945px;top:173px;width:115px;height:27px;background:#b2d39c;"></div>
<div class="a" style="left:241px;top:199px;width:83px;height:27px;background:#ffffff;"></div>
<div class="a" style="left:717px;top:199px;width:115px;height:27px;background:#fff;"></div>
<div class="a" style="left:831px;top:199px;width:115px;height:27px;background:#fff7e0;"></div>
<div class="a" style="left:945px;top:199px;width:115px;height:27px;background:#bcd9a9;"></div>
<div class="a" style="left:241px;top:225px;width:83px;height:27px;background:#ffffff;"></div>
<div class="a" style="left:717px;top:225px;width:115px;height:27px;background:#fff;"></div>
<div class="a" style="left:831px;top:225px;width:115px;height:27px;background:#fff8e5;"></div>
<div class="a" style="left:945px;top:225px;width:115px;height:27px;background:#ebf3e5;"></div>
<div class="a" style="left:241px;top:251px;width:83px;height:27px;background:#ffffff;"></div>
<div class="a" style="left:717px;top:251px;width:115px;height:27px;background:#fff;"></div>
<div class="a" style="left:831px;top:251px;width:115px;height:27px;background:#fff9e8;"></div>
<div class="a" style="left:241px;top:277px;width:83px;height:27px;background:#ffffff;"></div>
<div class="a" style="left:717px;top:277px;width:115px;height:27px;background:#fff;"></div>
<div class="a" style="left:945px;top:277px;width:115px;height:27px;background:#94c275;"></div>
<div class="a" style="left:241px;top:303px;width:83px;height:27px;background:#ffffff;"></div>
<div class="a" style="left:717px;top:303px;width:115px;height:27px;background:#fff;"></div>
<div class="a" style="left:945px;top:303px;width:115px;height:27px;background:#e1eed8;"></div>
<div class="a" style="left:241px;top:329px;width:83px;height:27px;background:#ffffff;"></div>
<div class="a" style="left:717px;top:329px;width:115px;height:27px;background:#fff;"></div>
<div class="a" style="left:241px;top:355px;width:83px;height:27px;background:#cbeadb;"></div>
<div class="a" style="left:717px;top:355px;width:115px;height:27px;background:#fff;"></div>
<div class="a" style="left:945px;top:355px;width:115px;height:27px;background:#ecf4e6;"></div>
<div class="a" style="left:241px;top:381px;width:83px;height:27px;background:#ffffff;"></div>
<div class="a" style="left:717px;top:381px;width:115px;height:27px;background:#fff;"></div>
<div class="a" style="left:945px;top:381px;width:115px;height:27px;background:#cce2bd;"></div>
<div class="a" style="left:241px;top:407px;width:83px;height:27px;background:#ffffff;"></div>
<div class="a" style="left:717px;top:407px;width:115px;height:27px;background:#fff;"></div>
<div class="a" style="left:945px;top:407px;width:115px;height:27px;background:#d9e9cf;"></div>
<div class="a" style="left:241px;top:433px;width:83px;height:27px;background:#c3e7d5;"></div>
<div class="a" style="left:717px;top:433px;width:115px;height:27px;background:#fff;"></div>
<div class="a" style="left:945px;top:433px;width:115px;height:27px;background:#ecf4e6;"></div>
<div class="a" style="left:241px;top:459px;width:83px;height:27px;background:#ffffff;"></div>
<div class="a" style="left:717px;top:459px;width:115px;height:27px;background:#fff;"></div>
<div class="a" style="left:241px;top:485px;width:83px;height:27px;background:#f6fbf9;"></div>
<div class="a" style="left:717px;top:485px;width:115px;height:27px;background:#fff;"></div>
<div class="a" style="left:241px;top:511px;width:83px;height:27px;background:#bce4d0;"></div>
<div class="a" style="left:717px;top:511px;width:115px;height:27px;background:#fff;"></div>
<div class="a" style="left:241px;top:537px;width:83px;height:27px;background:#e0f2e9;"></div>
<div class="a" style="left:717px;top:537px;width:115px;height:27px;background:#fff;"></div>
<div class="a" style="left:241px;top:563px;width:83px;height:27px;background:#ffffff;"></div>
<div class="a" style="left:717px;top:563px;width:115px;height:27px;background:#fff;"></div>
<div class="a" style="left:241px;top:589px;width:83px;height:27px;background:#c0e5d3;"></div>
<div class="a" style="left:717px;top:589px;width:115px;height:27px;background:#fff;"></div>
<div class="a" style="left:241px;top:615px;width:83px;height:27px;background:#ddf1e7;"></div>
<div class="a" style="left:717px;top:615px;width:115px;height:27px;background:#fff;"></div>
<div class="a" style="left:241px;top:641px;width:83px;height:27px;background:#ffffff;"></div>
<div class="a" style="left:717px;top:641px;width:115px;height:27px;background:#fff;"></div>
<div class="a" style="left:945px;top:641px;width:115px;height:27px;background:#eaf3e4;"></div>
<div class="a" style="left:241px;top:667px;width:83px;height:27px;background:#ffffff;"></div>
<div class="a" style="left:717px;top:667px;width:115px;height:27px;background:#fff;"></div>
<div class="a" style="left:241px;top:693px;width:83px;height:27px;background:#ffffff;"></div>
<div class="a" style="left:717px;top:693px;width:115px;height:27px;background:#fff;"></div>
<div class="a" style="left:945px;top:693px;width:115px;height:27px;background:#e6f1df;"></div>
<div class="a" style="left:32px;top:21px;width:210px;height:23px;background:#c9daf7;"></div>
<div class="a" style="left:241px;top:21px;width:83px;height:23px;background:#c9daf7;"></div>
<div class="a" style="left:323px;top:21px;width:327px;height:23px;background:#c9daf7;"></div>
<div class="a" style="left:649px;top:21px;width:69px;height:23px;background:#c9daf7;"></div>
<div class="a" style="left:717px;top:21px;width:115px;height:23px;background:#c9daf7;"></div>
<div class="a" style="left:831px;top:21px;width:115px;height:23px;background:#c9daf7;"></div>
<div class="a" style="left:945px;top:21px;width:115px;height:23px;background:#c9daf7;"></div>
<div class="a" style="left:1059px;top:21px;width:115px;height:23px;background:#c9daf7;"></div>
<div class="a" style="left:1173px;top:21px;width:70px;height:23px;background:#c9daf7;"></div>
<div class="a" style="left:1242px;top:21px;width:64px;height:23px;background:#c9daf7;"></div>
<div class="a" style="left:1305px;top:21px;width:115px;height:23px;background:#c9daf7;"></div>
<div class="a" style="left:1419px;top:21px;width:75px;height:23px;background:#c9daf7;"></div>
<div class="a" style="left:1493px;top:21px;width:184px;height:23px;background:#c9daf7;"></div>
<div class="a" style="left:1676px;top:21px;width:115px;height:23px;background:#c9daf7;"></div>
<div class="a" style="left:1790px;top:21px;width:115px;height:23px;background:#c9daf7;"></div>
<div class="a" style="top:21.46px;left:33px;width:187px;height:26px;overflow:hidden;"><span style="position:absolute;top:0;font-size:16px;line-height:26px;color:#000;white-space:pre;letter-spacing:0.22px;word-spacing:0.7px;font-weight:700;left:3px;">Категория</span></div>
<div class="a" style="left:220px;top:22px;width:21px;height:21px;box-sizing:border-box;border:1px solid #b4b4b4;background:linear-gradient(#fdfdfd,#eef0f3)"></div>
<svg class="a" style="left:227px;top:31px" width="8" height="5"><path d="M0 0 H7 L3.5 4 Z" fill="#606060"/></svg>
<div class="a" style="top:21.46px;left:242px;width:60px;height:26px;overflow:hidden;"><span style="position:absolute;top:0;font-size:16px;line-height:26px;color:#000;white-space:pre;letter-spacing:0.22px;word-spacing:0.7px;font-weight:700;left:3px;">Позиция</span></div>
<svg class="a" style="left:295px;top:22px" width="7" height="7"><path d="M0 0 H7 V7 Z" fill="#f00"/></svg>
<div class="a" style="left:302px;top:22px;width:21px;height:21px;box-sizing:border-box;border:1px solid #b4b4b4;background:linear-gradient(#fdfdfd,#eef0f3)"></div>
<svg class="a" style="left:309px;top:31px" width="8" height="5"><path d="M0 0 H7 L3.5 4 Z" fill="#606060"/></svg>
<div class="a" style="top:21.46px;left:324px;width:304px;height:26px;overflow:hidden;"><span style="position:absolute;top:0;font-size:16px;line-height:26px;color:#000;white-space:pre;letter-spacing:0.22px;word-spacing:0.7px;font-weight:700;left:3px;">Заголовок</span></div>
<svg class="a" style="left:621px;top:22px" width="7" height="7"><path d="M0 0 H7 V7 Z" fill="#f00"/></svg>
<div class="a" style="left:628px;top:22px;width:21px;height:21px;box-sizing:border-box;border:1px solid #b4b4b4;background:linear-gradient(#fdfdfd,#eef0f3)"></div>
<svg class="a" style="left:635px;top:31px" width="8" height="5"><path d="M0 0 H7 L3.5 4 Z" fill="#606060"/></svg>
<div class="a" style="top:21.46px;left:650px;width:46px;height:26px;overflow:hidden;"><span style="position:absolute;top:0;font-size:16px;line-height:26px;color:#000;white-space:pre;letter-spacing:0.22px;word-spacing:0.7px;font-weight:700;left:3px;">Цена</span></div>
<svg class="a" style="left:689px;top:22px" width="7" height="7"><path d="M0 0 H7 V7 Z" fill="#f00"/></svg>
<div class="a" style="left:696px;top:22px;width:21px;height:21px;box-sizing:border-box;border:1px solid #b4b4b4;background:linear-gradient(#fdfdfd,#eef0f3)"></div>
<svg class="a" style="left:703px;top:31px" width="8" height="5"><path d="M0 0 H7 L3.5 4 Z" fill="#606060"/></svg>
<div class="a" style="top:21.46px;left:718px;width:92px;height:26px;overflow:hidden;"><span style="position:absolute;top:0;font-size:16px;line-height:26px;color:#000;white-space:pre;letter-spacing:0.22px;word-spacing:0.7px;font-weight:700;left:3px;">Пониж.Цена</span></div>
<svg class="a" style="left:803px;top:22px" width="7" height="7"><path d="M0 0 H7 V7 Z" fill="#f00"/></svg>
<div class="a" style="left:810px;top:22px;width:21px;height:21px;box-sizing:border-box;border:1px solid #b4b4b4;background:linear-gradient(#fdfdfd,#eef0f3)"></div>
<svg class="a" style="left:817px;top:31px" width="8" height="5"><path d="M0 0 H7 L3.5 4 Z" fill="#606060"/></svg>
<div class="a" style="top:21.46px;left:832px;width:92px;height:26px;overflow:hidden;"><span style="position:absolute;top:0;font-size:16px;line-height:26px;color:#000;white-space:pre;letter-spacing:0.22px;word-spacing:0.7px;font-weight:700;left:3px;">Просм. Всего</span></div>
<svg class="a" style="left:917px;top:22px" width="7" height="7"><path d="M0 0 H7 V7 Z" fill="#f00"/></svg>
<div class="a" style="left:924px;top:22px;width:21px;height:21px;box-sizing:border-box;border:1px solid #b4b4b4;background:linear-gradient(#fdfdfd,#eef0f3)"></div>
<svg class="a" style="left:927px;top:25px" width="16" height="14"><path d="M1 8 H8 L4.5 11.5 Z" fill="#606060"/><path d="M12 1 V11 M9.5 8.5 L12 11.5 L14.5 8.5" fill="none" stroke="#404040" stroke-width="1.1"/></svg>
<div class="a" style="top:21.46px;left:946px;width:92px;height:26px;overflow:hidden;"><span style="position:absolute;top:0;font-size:16px;line-height:26px;color:#000;white-space:pre;letter-spacing:0.22px;word-spacing:0.7px;font-weight:700;left:3px;">Просм. Сегодня</span></div>
<svg class="a" style="left:1031px;top:22px" width="7" height="7"><path d="M0 0 H7 V7 Z" fill="#f00"/></svg>
<div class="a" style="left:1038px;top:22px;width:21px;height:21px;box-sizing:border-box;border:1px solid #b4b4b4;background:linear-gradient(#fdfdfd,#eef0f3)"></div>
<svg class="a" style="left:1045px;top:31px" width="8" height="5"><path d="M0 0 H7 L3.5 4 Z" fill="#606060"/></svg>
<div class="a" style="top:21.46px;left:1060px;width:92px;height:26px;overflow:hidden;"><span style="position:absolute;top:0;font-size:16px;line-height:26px;color:#000;white-space:pre;letter-spacing:0.22px;word-spacing:0.7px;font-weight:700;left:3px;">Методы продажи</span></div>
<svg class="a" style="left:1145px;top:22px" width="7" height="7"><path d="M0 0 H7 V7 Z" fill="#f00"/></svg>
<div class="a" style="left:1152px;top:22px;width:21px;height:21px;box-sizing:border-box;border:1px solid #b4b4b4;background:linear-gradient(#fdfdfd,#eef0f3)"></div>
<svg class="a" style="left:1159px;top:31px" width="8" height="5"><path d="M0 0 H7 L3.5 4 Z" fill="#606060"/></svg>
<div class="a" style="top:21.46px;left:1174px;width:47px;height:26px;overflow:hidden;"><span style="position:absolute;top:0;font-size:16px;line-height:26px;color:#000;white-space:pre;letter-spacing:0.22px;word-spacing:0.7px;font-weight:700;left:3px;">Время</span></div>
<svg class="a" style="left:1214px;top:22px" width="7" height="7"><path d="M0 0 H7 V7 Z" fill="#f00"/></svg>
<div class="a" style="left:1221px;top:22px;width:21px;height:21px;box-sizing:border-box;border:1px solid #b4b4b4;background:linear-gradient(#fdfdfd,#eef0f3)"></div>
<svg class="a" style="left:1228px;top:31px" width="8" height="5"><path d="M0 0 H7 L3.5 4 Z" fill="#606060"/></svg>
<div class="a" style="top:21.46px;left:1243px;width:41px;height:26px;overflow:hidden;"><span style="position:absolute;top:0;font-size:16px;line-height:26px;color:#000;white-space:pre;letter-spacing:0.22px;word-spacing:0.7px;font-weight:700;left:3px;">Фото</span></div>
<svg class="a" style="left:1277px;top:22px" width="7" height="7"><path d="M0 0 H7 V7 Z" fill="#f00"/></svg>
<div class="a" style="left:1284px;top:22px;width:21px;height:21px;box-sizing:border-box;border:1px solid #b4b4b4;background:linear-gradient(#fdfdfd,#eef0f3)"></div>
<svg class="a" style="left:1291px;top:31px" width="8" height="5"><path d="M0 0 H7 L3.5 4 Z" fill="#606060"/></svg>
<div class="a" style="top:21.46px;left:1306px;width:92px;height:26px;overflow:hidden;"><span style="position:absolute;top:0;font-size:16px;line-height:26px;color:#000;white-space:pre;letter-spacing:0.22px;word-spacing:0.7px;font-weight:700;left:3px;">Текст</span></div>
<svg class="a" style="left:1391px;top:22px" width="7" height="7"><path d="M0 0 H7 V7 Z" fill="#f00"/></svg>
<div class="a" style="left:1398px;top:22px;width:21px;height:21px;box-sizing:border-box;border:1px solid #b4b4b4;background:linear-gradient(#fdfdfd,#eef0f3)"></div>
<svg class="a" style="left:1405px;top:31px" width="8" height="5"><path d="M0 0 H7 L3.5 4 Z" fill="#606060"/></svg>
<div class="a" style="top:21.46px;left:1420px;width:52px;height:26px;overflow:hidden;"><span style="position:absolute;top:0;font-size:16px;line-height:26px;color:#000;white-space:pre;letter-spacing:0.22px;word-spacing:0.7px;font-weight:700;left:3px;">Кол-во</span></div>
<svg class="a" style="left:1465px;top:22px" width="7" height="7"><path d="M0 0 H7 V7 Z" fill="#f00"/></svg>
<div class="a" style="left:1472px;top:22px;width:21px;height:21px;box-sizing:border-box;border:1px solid #b4b4b4;background:linear-gradient(#fdfdfd,#eef0f3)"></div>
<svg class="a" style="left:1479px;top:31px" width="8" height="5"><path d="M0 0 H7 L3.5 4 Z" fill="#606060"/></svg>
<div class="a" style="top:21.46px;left:1494px;width:161px;height:26px;overflow:hidden;"><span style="position:absolute;top:0;font-size:16px;line-height:26px;color:#000;white-space:pre;letter-spacing:0.22px;word-spacing:0.7px;font-weight:700;left:3px;">Имя продавца</span></div>
<div class="a" style="left:1655px;top:22px;width:21px;height:21px;box-sizing:border-box;border:1px solid #b4b4b4;background:linear-gradient(#fdfdfd,#eef0f3)"></div>
<svg class="a" style="left:1662px;top:31px" width="8" height="5"><path d="M0 0 H7 L3.5 4 Z" fill="#606060"/></svg>
<div class="a" style="top:21.46px;left:1677px;width:92px;height:26px;overflow:hidden;"><span style="position:absolute;top:0;font-size:16px;line-height:26px;color:#000;white-space:pre;letter-spacing:0.22px;word-spacing:0.7px;font-weight:700;left:3px;">ID продавца</span></div>
<svg class="a" style="left:1762px;top:22px" width="7" height="7"><path d="M0 0 H7 V7 Z" fill="#f00"/></svg>
<div class="a" style="left:1769px;top:22px;width:21px;height:21px;box-sizing:border-box;border:1px solid #b4b4b4;background:linear-gradient(#fdfdfd,#eef0f3)"></div>
<svg class="a" style="left:1776px;top:31px" width="8" height="5"><path d="M0 0 H7 L3.5 4 Z" fill="#606060"/></svg>
<div class="a" style="top:21.46px;left:1791px;width:92px;height:26px;overflow:hidden;"><span style="position:absolute;top:0;font-size:16px;line-height:26px;color:#000;white-space:pre;letter-spacing:0.22px;word-spacing:0.7px;font-weight:700;left:3px;">ID объявления</span></div>
<div class="a" style="left:1883px;top:22px;width:21px;height:21px;box-sizing:border-box;border:1px solid #b4b4b4;background:linear-gradient(#fdfdfd,#eef0f3)"></div>
<svg class="a" style="left:1890px;top:31px" width="8" height="5"><path d="M0 0 H7 L3.5 4 Z" fill="#606060"/></svg>
<div class="a" style="top:47.46px;left:33px;width:208px;height:26px;overflow:hidden;"><span style="position:absolute;top:0;font-size:16px;line-height:26px;color:#000;white-space:pre;letter-spacing:0.22px;word-spacing:0.7px;left:3px;">Кровля и водосток</span></div>
<div class="a" style="top:47.46px;left:242px;width:81px;height:26px;overflow:hidden;"><span style="position:absolute;top:0;font-size:16px;line-height:26px;color:#000;white-space:pre;letter-spacing:0.22px;word-spacing:0.7px;left:-159.5px;width:400px;text-align:center;">205</span></div>
<div class="a" style="top:47.46px;left:324px;width:325px;height:26px;overflow:hidden;"><span style="position:absolute;top:0;font-size:16px;line-height:26px;color:#000;white-space:pre;letter-spacing:0.22px;word-spacing:0.7px;left:3px;">Профнастил Некондиция</span></div>
<div class="a" style="top:47.46px;left:650px;width:67px;height:26px;overflow:hidden;"><span style="position:absolute;top:0;font-size:16px;line-height:26px;color:#000;white-space:pre;letter-spacing:0.22px;word-spacing:0.7px;right:3px;">139</span></div>
<div class="a" style="top:47.46px;left:718px;width:113px;height:26px;overflow:hidden;"><span style="position:absolute;top:0;font-size:16px;line-height:26px;color:#000;white-space:pre;letter-spacing:0.22px;word-spacing:0.7px;left:-143.5px;width:400px;text-align:center;">0</span></div>
<div class="a" style="top:47.46px;left:832px;width:113px;height:26px;overflow:hidden;"><span style="position:absolute;top:0;font-size:16px;line-height:26px;color:#000;white-space:pre;letter-spacing:0.22px;word-spacing:0.7px;right:3px;">234043</span></div>
<div class="a" style="top:47.46px;left:946px;width:113px;height:26px;overflow:hidden;"><span style="position:absolute;top:0;font-size:16px;line-height:26px;color:#000;white-space:pre;letter-spacing:0.22px;word-spacing:0.7px;right:3px;">95</span></div>
<div class="a" style="top:47.46px;left:1060px;width:113px;height:26px;overflow:hidden;"><span style="position:absolute;top:0;font-size:16px;line-height:26px;color:#000;white-space:pre;letter-spacing:0.22px;word-spacing:0.7px;left:3px;">П, В, XL</span></div>
<div class="a" style="top:47.46px;left:1174px;width:68px;height:26px;overflow:hidden;"><span style="position:absolute;top:0;font-size:16px;line-height:26px;color:#000;white-space:pre;letter-spacing:0.22px;word-spacing:0.7px;left:3px;">2024.09.1</span></div>
<div class="a" style="top:47.46px;left:1243px;width:62px;height:26px;overflow:hidden;"><span style="position:absolute;top:0;font-size:16px;line-height:26px;color:#000;white-space:pre;letter-spacing:0.22px;word-spacing:0.7px;right:3px;">6</span></div>
<div class="a" style="top:47.46px;left:1306px;width:113px;height:26px;overflow:hidden;"><span style="position:absolute;top:0;font-size:16px;line-height:26px;color:#000;white-space:pre;letter-spacing:0.22px;word-spacing:0.7px;left:3px;">Внимание! Мы предлагаем</span></div>
<div class="a" style="top:47.46px;left:1420px;width:73px;height:26px;overflow:hidden;"><span style="position:absolute;top:0;font-size:16px;line-height:26px;color:#000;white-space:pre;letter-spacing:0.22px;word-spacing:0.7px;right:3px;">2128</span></div>
<div class="a" style="top:47.46px;left:1494px;width:182px;height:26px;overflow:hidden;"><span style="position:absolute;top:0;font-size:16px;line-height:26px;color:#000;white-space:pre;letter-spacing:0.22px;word-spacing:0.7px;left:3px;">НАСТОЯЩАЯ _Некондиция</span></div>
<div class="a" style="top:47.46px;left:1677px;width:113px;height:26px;overflow:hidden;"><span style="position:absolute;top:0;font-size:16px;line-height:26px;color:#000;white-space:pre;letter-spacing:0.22px;word-spacing:0.7px;left:3px;">nekondicia_rf</span></div>
<div class="a" style="top:47.46px;left:1791px;width:102px;height:26px;overflow:hidden;"><span style="position:absolute;top:0;font-size:16px;line-height:26px;color:#000;white-space:pre;letter-spacing:0.22px;word-spacing:0.7px;right:-8px;">1864547470</span></div>
<svg class="a" style="left:1791px;top:44px" width="6" height="6"><path d="M0 0 H6 L0 6 Z" fill="#1e8c3a"/></svg>
<div class="a" style="top:73.46px;left:33px;width:208px;height:26px;overflow:hidden;"><span style="position:absolute;top:0;font-size:16px;line-height:26px;color:#000;white-space:pre;letter-spacing:0.22px;word-spacing:0.7px;left:3px;">Трубный прокат</span></div>
<div class="a" style="top:73.46px;left:242px;width:81px;height:26px;overflow:hidden;"><span style="position:absolute;top:0;font-size:16px;line-height:26px;color:#000;white-space:pre;letter-spacing:0.22px;word-spacing:0.7px;left:-159.5px;width:400px;text-align:center;">21</span></div>
<div class="a" style="top:73.46px;left:324px;width:325px;height:26px;overflow:hidden;"><span style="position:absolute;top:0;font-size:16px;line-height:26px;color:#000;white-space:pre;letter-spacing:0.22px;word-spacing:0.7px;left:3px;">Профнастил Профлист металлочерепица</span></div>
<div class="a" style="top:73.46px;left:650px;width:67px;height:26px;overflow:hidden;"><span style="position:absolute;top:0;font-size:16px;line-height:26px;color:#000;white-space:pre;letter-spacing:0.22px;word-spacing:0.7px;right:3px;">196</span></div>
<div class="a" style="top:73.46px;left:718px;width:113px;height:26px;overflow:hidden;"><span style="position:absolute;top:0;font-size:16px;line-height:26px;color:#000;white-space:pre;letter-spacing:0.22px;word-spacing:0.7px;left:-143.5px;width:400px;text-align:center;">0</span></div>
<div class="a" style="top:73.46px;left:832px;width:113px;height:26px;overflow:hidden;"><span style="position:absolute;top:0;font-size:16px;line-height:26px;color:#000;white-space:pre;letter-spacing:0.22px;word-spacing:0.7px;right:3px;">176205</span></div>
<div class="a" style="top:73.46px;left:946px;width:113px;height:26px;overflow:hidden;"><span style="position:absolute;top:0;font-size:16px;line-height:26px;color:#000;white-space:pre;letter-spacing:0.22px;word-spacing:0.7px;right:3px;">27</span></div>
<div class="a" style="top:73.46px;left:1060px;width:113px;height:26px;overflow:hidden;"><span style="position:absolute;top:0;font-size:16px;line-height:26px;color:#000;white-space:pre;letter-spacing:0.22px;word-spacing:0.7px;left:3px;">П, XL</span></div>
<div class="a" style="top:73.46px;left:1174px;width:68px;height:26px;overflow:hidden;"><span style="position:absolute;top:0;font-size:16px;line-height:26px;color:#000;white-space:pre;letter-spacing:0.22px;word-spacing:0.7px;left:3px;">2024.09.2</span></div>
<div class="a" style="top:73.46px;left:1243px;width:62px;height:26px;overflow:hidden;"><span style="position:absolute;top:0;font-size:16px;line-height:26px;color:#000;white-space:pre;letter-spacing:0.22px;word-spacing:0.7px;right:3px;">11</span></div>
<div class="a" style="top:73.46px;left:1306px;width:113px;height:26px;overflow:hidden;"><span style="position:absolute;top:0;font-size:16px;line-height:26px;color:#000;white-space:pre;letter-spacing:0.22px;word-spacing:0.7px;left:3px;">Профлист забор</span></div>
<div class="a" style="top:73.46px;left:1420px;width:73px;height:26px;overflow:hidden;"><span style="position:absolute;top:0;font-size:16px;line-height:26px;color:#000;white-space:pre;letter-spacing:0.22px;word-spacing:0.7px;right:3px;">3635</span></div>
<div class="a" style="top:73.46px;left:1494px;width:182px;height:26px;overflow:hidden;"><span style="position:absolute;top:0;font-size:16px;line-height:26px;color:#000;white-space:pre;letter-spacing:0.22px;word-spacing:0.7px;left:3px;">Завод Изолайн Металл</span></div>
<div class="a" style="top:73.46px;left:1677px;width:113px;height:26px;overflow:hidden;"><span style="position:absolute;top:0;font-size:16px;line-height:26px;color:#000;white-space:pre;letter-spacing:0.22px;word-spacing:0.7px;left:3px;">i73950192</span></div>
<div class="a" style="top:73.46px;left:1791px;width:102px;height:26px;overflow:hidden;"><span style="position:absolute;top:0;font-size:16px;line-height:26px;color:#000;white-space:pre;letter-spacing:0.22px;word-spacing:0.7px;right:-8px;">2062732333</span></div>
<svg class="a" style="left:1791px;top:70px" width="6" height="6"><path d="M0 0 H6 L0 6 Z" fill="#1e8c3a"/></svg>
<div class="a" style="top:99.46px;left:33px;width:208px;height:26px;overflow:hidden;"><span style="position:absolute;top:0;font-size:16px;line-height:26px;color:#000;white-space:pre;letter-spacing:0.22px;word-spacing:0.7px;left:3px;">Другое</span></div>
<div class="a" style="top:99.46px;left:242px;width:81px;height:26px;overflow:hidden;"><span style="position:absolute;top:0;font-size:16px;line-height:26px;color:#000;white-space:pre;letter-spacing:0.22px;word-spacing:0.7px;left:-159.5px;width:400px;text-align:center;">46</span></div>
<div class="a" style="top:99.46px;left:324px;width:325px;height:26px;overflow:hidden;"><span style="position:absolute;top:0;font-size:16px;line-height:26px;color:#000;white-space:pre;letter-spacing:0.22px;word-spacing:0.7px;left:3px;">Картонные коробки / Картонные коробки для</span></div>
<div class="a" style="top:99.46px;left:650px;width:67px;height:26px;overflow:hidden;"><span style="position:absolute;top:0;font-size:16px;line-height:26px;color:#000;white-space:pre;letter-spacing:0.22px;word-spacing:0.7px;right:3px;">8</span></div>
<div class="a" style="top:99.46px;left:718px;width:113px;height:26px;overflow:hidden;"><span style="position:absolute;top:0;font-size:16px;line-height:26px;color:#000;white-space:pre;letter-spacing:0.22px;word-spacing:0.7px;left:-143.5px;width:400px;text-align:center;">0</span></div>
<div class="a" style="top:99.46px;left:832px;width:113px;height:26px;overflow:hidden;"><span style="position:absolute;top:0;font-size:16px;line-height:26px;color:#000;white-space:pre;letter-spacing:0.22px;word-spacing:0.7px;right:3px;">100213</span></div>
<div class="a" style="top:99.46px;left:946px;width:113px;height:26px;overflow:hidden;"><span style="position:absolute;top:0;font-size:16px;line-height:26px;color:#000;white-space:pre;letter-spacing:0.22px;word-spacing:0.7px;right:3px;">1</span></div>
<div class="a" style="top:99.46px;left:1060px;width:113px;height:26px;overflow:hidden;"><span style="position:absolute;top:0;font-size:16px;line-height:26px;color:#000;white-space:pre;letter-spacing:0.22px;word-spacing:0.7px;left:3px;">П, XL</span></div>
<div class="a" style="top:99.46px;left:1174px;width:68px;height:26px;overflow:hidden;"><span style="position:absolute;top:0;font-size:16px;line-height:26px;color:#000;white-space:pre;letter-spacing:0.22px;word-spacing:0.7px;left:3px;">2024.09.2</span></div>
<div class="a" style="top:99.46px;left:1243px;width:62px;height:26px;overflow:hidden;"><span style="position:absolute;top:0;font-size:16px;line-height:26px;color:#000;white-space:pre;letter-spacing:0.22px;word-spacing:0.7px;right:3px;">11</span></div>
<div class="a" style="top:99.46px;left:1306px;width:113px;height:26px;overflow:hidden;"><span style="position:absolute;top:0;font-size:16px;line-height:26px;color:#000;white-space:pre;letter-spacing:0.22px;word-spacing:0.7px;left:3px;">Производим коробки</span></div>
<div class="a" style="top:99.46px;left:1420px;width:73px;height:26px;overflow:hidden;"><span style="position:absolute;top:0;font-size:16px;line-height:26px;color:#000;white-space:pre;letter-spacing:0.22px;word-spacing:0.7px;right:3px;">2396</span></div>
<div class="a" style="top:99.46px;left:1494px;width:182px;height:26px;overflow:hidden;"><span style="position:absolute;top:0;font-size:16px;line-height:26px;color:#000;white-space:pre;letter-spacing:0.22px;word-spacing:0.7px;left:3px;">Московская Картонная</span></div>
<div class="a" style="top:99.46px;left:1677px;width:113px;height:26px;overflow:hidden;"><span style="position:absolute;top:0;font-size:16px;line-height:26px;color:#000;white-space:pre;letter-spacing:0.22px;word-spacing:0.7px;left:3px;">i183813499</span></div>
<div class="a" style="top:99.46px;left:1791px;width:102px;height:26px;overflow:hidden;"><span style="position:absolute;top:0;font-size:16px;line-height:26px;color:#000;white-space:pre;letter-spacing:0.22px;word-spacing:0.7px;right:-8px;">2233681622</span></div>
<svg class="a" style="left:1791px;top:96px" width="6" height="6"><path d="M0 0 H6 L0 6 Z" fill="#1e8c3a"/></svg>
<div class="a" style="top:125.46px;left:33px;width:208px;height:26px;overflow:hidden;"><span style="position:absolute;top:0;font-size:16px;line-height:26px;color:#000;white-space:pre;letter-spacing:0.22px;word-spacing:0.7px;left:3px;">Пиломатериалы</span></div>
<div class="a" style="top:125.46px;left:242px;width:81px;height:26px;overflow:hidden;"><span style="position:absolute;top:0;font-size:16px;line-height:26px;color:#000;white-space:pre;letter-spacing:0.22px;word-spacing:0.7px;left:-159.5px;width:400px;text-align:center;">10</span></div>
<div class="a" style="top:125.46px;left:324px;width:325px;height:26px;overflow:hidden;"><span style="position:absolute;top:0;font-size:16px;line-height:26px;color:#000;white-space:pre;letter-spacing:0.22px;word-spacing:0.7px;left:3px;">Дпк Террасная доска</span></div>
<div class="a" style="top:125.46px;left:650px;width:67px;height:26px;overflow:hidden;"><span style="position:absolute;top:0;font-size:16px;line-height:26px;color:#000;white-space:pre;letter-spacing:0.22px;word-spacing:0.7px;right:3px;">210</span></div>
<div class="a" style="top:125.46px;left:718px;width:113px;height:26px;overflow:hidden;"><span style="position:absolute;top:0;font-size:16px;line-height:26px;color:#000;white-space:pre;letter-spacing:0.22px;word-spacing:0.7px;left:-143.5px;width:400px;text-align:center;">0</span></div>
<div class="a" style="top:125.46px;left:832px;width:113px;height:26px;overflow:hidden;"><span style="position:absolute;top:0;font-size:16px;line-height:26px;color:#000;white-space:pre;letter-spacing:0.22px;word-spacing:0.7px;right:3px;">93753</span></div>
<div class="a" style="top:125.46px;left:946px;width:113px;height:26px;overflow:hidden;"><span style="position:absolute;top:0;font-size:16px;line-height:26px;color:#000;white-space:pre;letter-spacing:0.22px;word-spacing:0.7px;right:3px;">14</span></div>
<div class="a" style="top:125.46px;left:1060px;width:113px;height:26px;overflow:hidden;"><span style="position:absolute;top:0;font-size:16px;line-height:26px;color:#000;white-space:pre;letter-spacing:0.22px;word-spacing:0.7px;left:3px;">П, В, XL</span></div>
<div class="a" style="top:125.46px;left:1174px;width:68px;height:26px;overflow:hidden;"><span style="position:absolute;top:0;font-size:16px;line-height:26px;color:#000;white-space:pre;letter-spacing:0.22px;word-spacing:0.7px;left:3px;">2024.09.2</span></div>
<div class="a" style="top:125.46px;left:1243px;width:62px;height:26px;overflow:hidden;"><span style="position:absolute;top:0;font-size:16px;line-height:26px;color:#000;white-space:pre;letter-spacing:0.22px;word-spacing:0.7px;right:3px;">8</span></div>
<div class="a" style="top:125.46px;left:1306px;width:113px;height:26px;overflow:hidden;"><span style="position:absolute;top:0;font-size:16px;line-height:26px;color:#000;white-space:pre;letter-spacing:0.22px;word-spacing:0.7px;left:3px;">Цена п, м 210р</span></div>
<div class="a" style="top:125.46px;left:1420px;width:73px;height:26px;overflow:hidden;"><span style="position:absolute;top:0;font-size:16px;line-height:26px;color:#000;white-space:pre;letter-spacing:0.22px;word-spacing:0.7px;right:3px;">521</span></div>
<div class="a" style="top:125.46px;left:1494px;width:182px;height:26px;overflow:hidden;"><span style="position:absolute;top:0;font-size:16px;line-height:26px;color:#000;white-space:pre;letter-spacing:0.22px;word-spacing:0.7px;left:3px;">Производство Дпк</span></div>
<div class="a" style="top:125.46px;left:1677px;width:113px;height:26px;overflow:hidden;"><span style="position:absolute;top:0;font-size:16px;line-height:26px;color:#000;white-space:pre;letter-spacing:0.22px;word-spacing:0.7px;left:3px;">i168202501</span></div>
<div class="a" style="top:125.46px;left:1791px;width:102px;height:26px;overflow:hidden;"><span style="position:absolute;top:0;font-size:16px;line-height:26px;color:#000;white-space:pre;letter-spacing:0.22px;word-spacing:0.7px;right:-8px;">1955883360</span></div>
<svg class="a" style="left:1791px;top:122px" width="6" height="6"><path d="M0 0 H6 L0 6 Z" fill="#1e8c3a"/></svg>
<div class="a" style="top:151.46px;left:33px;width:208px;height:26px;overflow:hidden;"><span style="position:absolute;top:0;font-size:16px;line-height:26px;color:#000;white-space:pre;letter-spacing:0.22px;word-spacing:0.7px;left:3px;">Фанера</span></div>
<div class="a" style="top:151.46px;left:242px;width:81px;height:26px;overflow:hidden;"><span style="position:absolute;top:0;font-size:16px;line-height:26px;color:#000;white-space:pre;letter-spacing:0.22px;word-spacing:0.7px;left:-159.5px;width:400px;text-align:center;">47</span></div>
<div class="a" style="top:151.46px;left:324px;width:325px;height:26px;overflow:hidden;"><span style="position:absolute;top:0;font-size:16px;line-height:26px;color:#000;white-space:pre;letter-spacing:0.22px;word-spacing:0.7px;left:3px;">Фанера влагостойкая, транспортная, бакелитовая</span></div>
<div class="a" style="top:151.46px;left:650px;width:67px;height:26px;overflow:hidden;"><span style="position:absolute;top:0;font-size:16px;line-height:26px;color:#000;white-space:pre;letter-spacing:0.22px;word-spacing:0.7px;right:3px;">995</span></div>
<div class="a" style="top:151.46px;left:718px;width:113px;height:26px;overflow:hidden;"><span style="position:absolute;top:0;font-size:16px;line-height:26px;color:#000;white-space:pre;letter-spacing:0.22px;word-spacing:0.7px;left:-143.5px;width:400px;text-align:center;">0</span></div>
<div class="a" style="top:151.46px;left:832px;width:113px;height:26px;overflow:hidden;"><span style="position:absolute;top:0;font-size:16px;line-height:26px;color:#000;white-space:pre;letter-spacing:0.22px;word-spacing:0.7px;right:3px;">73499</span></div>
<div class="a" style="top:151.46px;left:946px;width:113px;height:26px;overflow:hidden;"><span style="position:absolute;top:0;font-size:16px;line-height:26px;color:#000;white-space:pre;letter-spacing:0.22px;word-spacing:0.7px;right:3px;">34</span></div>
<div class="a" style="top:151.46px;left:1060px;width:113px;height:26px;overflow:hidden;"><span style="position:absolute;top:0;font-size:16px;line-height:26px;color:#000;white-space:pre;letter-spacing:0.22px;word-spacing:0.7px;left:3px;">П, XL</span></div>
<div class="a" style="top:151.46px;left:1174px;width:68px;height:26px;overflow:hidden;"><span style="position:absolute;top:0;font-size:16px;line-height:26px;color:#000;white-space:pre;letter-spacing:0.22px;word-spacing:0.7px;left:3px;">2024.09.2</span></div>
<div class="a" style="top:151.46px;left:1243px;width:62px;height:26px;overflow:hidden;"><span style="position:absolute;top:0;font-size:16px;line-height:26px;color:#000;white-space:pre;letter-spacing:0.22px;word-spacing:0.7px;right:3px;">5</span></div>
<div class="a" style="top:151.46px;left:1306px;width:113px;height:26px;overflow:hidden;"><span style="position:absolute;top:0;font-size:16px;line-height:26px;color:#000;white-space:pre;letter-spacing:0.22px;word-spacing:0.7px;left:3px;">Фанера влагостойкая</span></div>
<div class="a" style="top:151.46px;left:1420px;width:73px;height:26px;overflow:hidden;"><span style="position:absolute;top:0;font-size:16px;line-height:26px;color:#000;white-space:pre;letter-spacing:0.22px;word-spacing:0.7px;right:3px;">1365</span></div>
<div class="a" style="top:151.46px;left:1494px;width:182px;height:26px;overflow:hidden;"><span style="position:absolute;top:0;font-size:16px;line-height:26px;color:#000;white-space:pre;letter-spacing:0.22px;word-spacing:0.7px;left:3px;">Елена</span></div>
<div class="a" style="top:151.46px;left:1677px;width:113px;height:26px;overflow:hidden;"><span style="position:absolute;top:0;font-size:16px;line-height:26px;color:#000;white-space:pre;letter-spacing:0.22px;word-spacing:0.7px;left:3px;">fec40032bdd0a8</span></div>
<div class="a" style="top:151.46px;left:1791px;width:102px;height:26px;overflow:hidden;"><span style="position:absolute;top:0;font-size:16px;line-height:26px;color:#000;white-space:pre;letter-spacing:0.22px;word-spacing:0.7px;right:-8px;">2214062481</span></div>
<svg class="a" style="left:1791px;top:148px" width="6" height="6"><path d="M0 0 H6 L0 6 Z" fill="#1e8c3a"/></svg>
<div class="a" style="top:177.46px;left:33px;width:208px;height:26px;overflow:hidden;"><span style="position:absolute;top:0;font-size:16px;line-height:26px;color:#000;white-space:pre;letter-spacing:0.22px;word-spacing:0.7px;left:3px;">Кровля и водосток</span></div>
<div class="a" style="top:177.46px;left:242px;width:81px;height:26px;overflow:hidden;"><span style="position:absolute;top:0;font-size:16px;line-height:26px;color:#000;white-space:pre;letter-spacing:0.22px;word-spacing:0.7px;left:-159.5px;width:400px;text-align:center;">206</span></div>
<div class="a" style="top:177.46px;left:324px;width:325px;height:26px;overflow:hidden;"><span style="position:absolute;top:0;font-size:16px;line-height:26px;color:#000;white-space:pre;letter-spacing:0.22px;word-spacing:0.7px;left:3px;">Металлопрофиль профнастил профлист</span></div>
<div class="a" style="top:177.46px;left:650px;width:67px;height:26px;overflow:hidden;"><span style="position:absolute;top:0;font-size:16px;line-height:26px;color:#000;white-space:pre;letter-spacing:0.22px;word-spacing:0.7px;right:3px;">75</span></div>
<div class="a" style="top:177.46px;left:718px;width:113px;height:26px;overflow:hidden;"><span style="position:absolute;top:0;font-size:16px;line-height:26px;color:#000;white-space:pre;letter-spacing:0.22px;word-spacing:0.7px;left:-143.5px;width:400px;text-align:center;">0</span></div>
<div class="a" style="top:177.46px;left:832px;width:113px;height:26px;overflow:hidden;"><span style="position:absolute;top:0;font-size:16px;line-height:26px;color:#000;white-space:pre;letter-spacing:0.22px;word-spacing:0.7px;right:3px;">53036</span></div>
<div class="a" style="top:177.46px;left:946px;width:113px;height:26px;overflow:hidden;"><span style="position:absolute;top:0;font-size:16px;line-height:26px;color:#000;white-space:pre;letter-spacing:0.22px;word-spacing:0.7px;right:3px;">84</span></div>
<div class="a" style="top:177.46px;left:1060px;width:113px;height:26px;overflow:hidden;"><span style="position:absolute;top:0;font-size:16px;line-height:26px;color:#000;white-space:pre;letter-spacing:0.22px;word-spacing:0.7px;left:3px;">П, XL</span></div>
<div class="a" style="top:177.46px;left:1174px;width:68px;height:26px;overflow:hidden;"><span style="position:absolute;top:0;font-size:16px;line-height:26px;color:#000;white-space:pre;letter-spacing:0.22px;word-spacing:0.7px;left:3px;">2024.09.1</span></div>
<div class="a" style="top:177.46px;left:1243px;width:62px;height:26px;overflow:hidden;"><span style="position:absolute;top:0;font-size:16px;line-height:26px;color:#000;white-space:pre;letter-spacing:0.22px;word-spacing:0.7px;right:3px;">11</span></div>
<div class="a" style="top:177.46px;left:1306px;width:113px;height:26px;overflow:hidden;"><span style="position:absolute;top:0;font-size:16px;line-height:26px;color:#000;white-space:pre;letter-spacing:0.22px;word-spacing:0.7px;left:3px;">Много уцененных</span></div>
<div class="a" style="top:177.46px;left:1420px;width:73px;height:26px;overflow:hidden;"><span style="position:absolute;top:0;font-size:16px;line-height:26px;color:#000;white-space:pre;letter-spacing:0.22px;word-spacing:0.7px;right:3px;">711</span></div>
<div class="a" style="top:177.46px;left:1494px;width:296px;height:26px;overflow:hidden;"><span style="position:absolute;top:0;font-size:16px;line-height:26px;color:#000;white-space:pre;letter-spacing:0.22px;word-spacing:0.7px;left:3px;">Пользователь</span></div>
<div class="a" style="top:177.46px;left:1791px;width:102px;height:26px;overflow:hidden;"><span style="position:absolute;top:0;font-size:16px;line-height:26px;color:#000;white-space:pre;letter-spacing:0.22px;word-spacing:0.7px;right:-8px;">3529436371</span></div>
<svg class="a" style="left:1791px;top:174px" width="6" height="6"><path d="M0 0 H6 L0 6 Z" fill="#1e8c3a"/></svg>
<div class="a" style="top:203.46px;left:33px;width:208px;height:26px;overflow:hidden;"><span style="position:absolute;top:0;font-size:16px;line-height:26px;color:#000;white-space:pre;letter-spacing:0.22px;word-spacing:0.7px;left:3px;">Кровля и водосток</span></div>
<div class="a" style="top:203.46px;left:242px;width:81px;height:26px;overflow:hidden;"><span style="position:absolute;top:0;font-size:16px;line-height:26px;color:#000;white-space:pre;letter-spacing:0.22px;word-spacing:0.7px;left:-159.5px;width:400px;text-align:center;">208</span></div>
<div class="a" style="top:203.46px;left:324px;width:325px;height:26px;overflow:hidden;"><span style="position:absolute;top:0;font-size:16px;line-height:26px;color:#000;white-space:pre;letter-spacing:0.22px;word-spacing:0.7px;left:3px;">Профлист некондиция 2м</span></div>
<div class="a" style="top:203.46px;left:650px;width:67px;height:26px;overflow:hidden;"><span style="position:absolute;top:0;font-size:16px;line-height:26px;color:#000;white-space:pre;letter-spacing:0.22px;word-spacing:0.7px;right:3px;">595</span></div>
<div class="a" style="top:203.46px;left:718px;width:113px;height:26px;overflow:hidden;"><span style="position:absolute;top:0;font-size:16px;line-height:26px;color:#000;white-space:pre;letter-spacing:0.22px;word-spacing:0.7px;left:-143.5px;width:400px;text-align:center;">0</span></div>
<div class="a" style="top:203.46px;left:832px;width:113px;height:26px;overflow:hidden;"><span style="position:absolute;top:0;font-size:16px;line-height:26px;color:#000;white-space:pre;letter-spacing:0.22px;word-spacing:0.7px;right:3px;">46841</span></div>
<div class="a" style="top:203.46px;left:946px;width:113px;height:26px;overflow:hidden;"><span style="position:absolute;top:0;font-size:16px;line-height:26px;color:#000;white-space:pre;letter-spacing:0.22px;word-spacing:0.7px;right:3px;">73</span></div>
<div class="a" style="top:203.46px;left:1060px;width:113px;height:26px;overflow:hidden;"><span style="position:absolute;top:0;font-size:16px;line-height:26px;color:#000;white-space:pre;letter-spacing:0.22px;word-spacing:0.7px;left:3px;">П, XL</span></div>
<div class="a" style="top:203.46px;left:1174px;width:68px;height:26px;overflow:hidden;"><span style="position:absolute;top:0;font-size:16px;line-height:26px;color:#000;white-space:pre;letter-spacing:0.22px;word-spacing:0.7px;left:3px;">2024.09.1</span></div>
<div class="a" style="top:203.46px;left:1243px;width:62px;height:26px;overflow:hidden;"><span style="position:absolute;top:0;font-size:16px;line-height:26px;color:#000;white-space:pre;letter-spacing:0.22px;word-spacing:0.7px;right:3px;">10</span></div>
<div class="a" style="top:203.46px;left:1306px;width:113px;height:26px;overflow:hidden;"><span style="position:absolute;top:0;font-size:16px;line-height:26px;color:#000;white-space:pre;letter-spacing:0.22px;word-spacing:0.7px;left:3px;">Реализуем очень</span></div>
<div class="a" style="top:203.46px;left:1420px;width:73px;height:26px;overflow:hidden;"><span style="position:absolute;top:0;font-size:16px;line-height:26px;color:#000;white-space:pre;letter-spacing:0.22px;word-spacing:0.7px;right:3px;">513</span></div>
<div class="a" style="top:203.46px;left:1494px;width:182px;height:26px;overflow:hidden;"><span style="position:absolute;top:0;font-size:16px;line-height:26px;color:#000;white-space:pre;letter-spacing:0.22px;word-spacing:0.7px;left:3px;">ДМКгрупп Воронеж</span></div>
<div class="a" style="top:203.46px;left:1677px;width:113px;height:26px;overflow:hidden;"><span style="position:absolute;top:0;font-size:16px;line-height:26px;color:#000;white-space:pre;letter-spacing:0.22px;word-spacing:0.7px;left:3px;">53e0ba959b51b</span></div>
<div class="a" style="top:203.46px;left:1791px;width:102px;height:26px;overflow:hidden;"><span style="position:absolute;top:0;font-size:16px;line-height:26px;color:#000;white-space:pre;letter-spacing:0.22px;word-spacing:0.7px;right:-8px;">3593668940</span></div>
<svg class="a" style="left:1791px;top:200px" width="6" height="6"><path d="M0 0 H6 L0 6 Z" fill="#1e8c3a"/></svg>
<div class="a" style="top:229.46px;left:33px;width:208px;height:26px;overflow:hidden;"><span style="position:absolute;top:0;font-size:16px;line-height:26px;color:#000;white-space:pre;letter-spacing:0.22px;word-spacing:0.7px;left:3px;">Стеновые панели</span></div>
<div class="a" style="top:229.46px;left:242px;width:81px;height:26px;overflow:hidden;"><span style="position:absolute;top:0;font-size:16px;line-height:26px;color:#000;white-space:pre;letter-spacing:0.22px;word-spacing:0.7px;left:-159.5px;width:400px;text-align:center;">172</span></div>
<div class="a" style="top:229.46px;left:324px;width:325px;height:26px;overflow:hidden;"><span style="position:absolute;top:0;font-size:16px;line-height:26px;color:#000;white-space:pre;letter-spacing:0.22px;word-spacing:0.7px;left:3px;">Стеновые панели пвх для ванной/кухни</span></div>
<div class="a" style="top:229.46px;left:650px;width:67px;height:26px;overflow:hidden;"><span style="position:absolute;top:0;font-size:16px;line-height:26px;color:#000;white-space:pre;letter-spacing:0.22px;word-spacing:0.7px;right:3px;">1900</span></div>
<div class="a" style="top:229.46px;left:718px;width:113px;height:26px;overflow:hidden;"><span style="position:absolute;top:0;font-size:16px;line-height:26px;color:#000;white-space:pre;letter-spacing:0.22px;word-spacing:0.7px;left:-143.5px;width:400px;text-align:center;">0</span></div>
<div class="a" style="top:229.46px;left:832px;width:113px;height:26px;overflow:hidden;"><span style="position:absolute;top:0;font-size:16px;line-height:26px;color:#000;white-space:pre;letter-spacing:0.22px;word-spacing:0.7px;right:3px;">39554</span></div>
<div class="a" style="top:229.46px;left:946px;width:113px;height:26px;overflow:hidden;"><span style="position:absolute;top:0;font-size:16px;line-height:26px;color:#000;white-space:pre;letter-spacing:0.22px;word-spacing:0.7px;right:3px;">22</span></div>
<div class="a" style="top:229.46px;left:1060px;width:113px;height:26px;overflow:hidden;"><span style="position:absolute;top:0;font-size:16px;line-height:26px;color:#000;white-space:pre;letter-spacing:0.22px;word-spacing:0.7px;left:3px;">П, XL</span></div>
<div class="a" style="top:229.46px;left:1174px;width:68px;height:26px;overflow:hidden;"><span style="position:absolute;top:0;font-size:16px;line-height:26px;color:#000;white-space:pre;letter-spacing:0.22px;word-spacing:0.7px;left:3px;">2024.09.2</span></div>
<div class="a" style="top:229.46px;left:1243px;width:62px;height:26px;overflow:hidden;"><span style="position:absolute;top:0;font-size:16px;line-height:26px;color:#000;white-space:pre;letter-spacing:0.22px;word-spacing:0.7px;right:3px;">10</span></div>
<div class="a" style="top:229.46px;left:1306px;width:113px;height:26px;overflow:hidden;"><span style="position:absolute;top:0;font-size:16px;line-height:26px;color:#000;white-space:pre;letter-spacing:0.22px;word-spacing:0.7px;left:3px;">Стеновые панели</span></div>
<div class="a" style="top:229.46px;left:1420px;width:73px;height:26px;overflow:hidden;"><span style="position:absolute;top:0;font-size:16px;line-height:26px;color:#000;white-space:pre;letter-spacing:0.22px;word-spacing:0.7px;right:3px;">986</span></div>
<div class="a" style="top:229.46px;left:1494px;width:182px;height:26px;overflow:hidden;"><span style="position:absolute;top:0;font-size:16px;line-height:26px;color:#000;white-space:pre;letter-spacing:0.22px;word-spacing:0.7px;left:3px;">Все для дома</span></div>
<div class="a" style="top:229.46px;left:1677px;width:113px;height:26px;overflow:hidden;"><span style="position:absolute;top:0;font-size:16px;line-height:26px;color:#000;white-space:pre;letter-spacing:0.22px;word-spacing:0.7px;left:3px;">i348552039</span></div>
<div class="a" style="top:229.46px;left:1791px;width:102px;height:26px;overflow:hidden;"><span style="position:absolute;top:0;font-size:16px;line-height:26px;color:#000;white-space:pre;letter-spacing:0.22px;word-spacing:0.7px;right:-8px;">3429055690</span></div>
<svg class="a" style="left:1791px;top:226px" width="6" height="6"><path d="M0 0 H6 L0 6 Z" fill="#1e8c3a"/></svg>
<div class="a" style="top:255.46px;left:33px;width:208px;height:26px;overflow:hidden;"><span style="position:absolute;top:0;font-size:16px;line-height:26px;color:#000;white-space:pre;letter-spacing:0.22px;word-spacing:0.7px;left:3px;">Щебень, гравий</span></div>
<div class="a" style="top:255.46px;left:242px;width:81px;height:26px;overflow:hidden;"><span style="position:absolute;top:0;font-size:16px;line-height:26px;color:#000;white-space:pre;letter-spacing:0.22px;word-spacing:0.7px;left:-159.5px;width:400px;text-align:center;">250</span></div>
<div class="a" style="top:255.46px;left:324px;width:325px;height:26px;overflow:hidden;"><span style="position:absolute;top:0;font-size:16px;line-height:26px;color:#000;white-space:pre;letter-spacing:0.22px;word-spacing:0.7px;left:3px;">Песок. Щебень. Шлак. Гранит. Чернозём</span></div>
<div class="a" style="top:255.46px;left:650px;width:67px;height:26px;overflow:hidden;"><span style="position:absolute;top:0;font-size:16px;line-height:26px;color:#000;white-space:pre;letter-spacing:0.22px;word-spacing:0.7px;right:3px;">100</span></div>
<div class="a" style="top:255.46px;left:718px;width:113px;height:26px;overflow:hidden;"><span style="position:absolute;top:0;font-size:16px;line-height:26px;color:#000;white-space:pre;letter-spacing:0.22px;word-spacing:0.7px;left:-143.5px;width:400px;text-align:center;">0</span></div>
<div class="a" style="top:255.46px;left:832px;width:113px;height:26px;overflow:hidden;"><span style="position:absolute;top:0;font-size:16px;line-height:26px;color:#000;white-space:pre;letter-spacing:0.22px;word-spacing:0.7px;right:3px;">35823</span></div>
<div class="a" style="top:255.46px;left:946px;width:113px;height:26px;overflow:hidden;"><span style="position:absolute;top:0;font-size:16px;line-height:26px;color:#000;white-space:pre;letter-spacing:0.22px;word-spacing:0.7px;right:3px;">12</span></div>
<div class="a" style="top:255.46px;left:1060px;width:113px;height:26px;overflow:hidden;"><span style="position:absolute;top:0;font-size:16px;line-height:26px;color:#000;white-space:pre;letter-spacing:0.22px;word-spacing:0.7px;left:3px;">П, В, XL</span></div>
<div class="a" style="top:255.46px;left:1174px;width:68px;height:26px;overflow:hidden;"><span style="position:absolute;top:0;font-size:16px;line-height:26px;color:#000;white-space:pre;letter-spacing:0.22px;word-spacing:0.7px;left:3px;">2024.09.2</span></div>
<div class="a" style="top:255.46px;left:1243px;width:62px;height:26px;overflow:hidden;"><span style="position:absolute;top:0;font-size:16px;line-height:26px;color:#000;white-space:pre;letter-spacing:0.22px;word-spacing:0.7px;right:3px;">3</span></div>
<div class="a" style="top:255.46px;left:1306px;width:113px;height:26px;overflow:hidden;"><span style="position:absolute;top:0;font-size:16px;line-height:26px;color:#000;white-space:pre;letter-spacing:0.22px;word-spacing:0.7px;left:3px;">Доставка. Песок</span></div>
<div class="a" style="top:255.46px;left:1420px;width:73px;height:26px;overflow:hidden;"><span style="position:absolute;top:0;font-size:16px;line-height:26px;color:#000;white-space:pre;letter-spacing:0.22px;word-spacing:0.7px;right:3px;">188</span></div>
<div class="a" style="top:255.46px;left:1494px;width:296px;height:26px;overflow:hidden;"><span style="position:absolute;top:0;font-size:16px;line-height:26px;color:#000;white-space:pre;letter-spacing:0.22px;word-spacing:0.7px;left:3px;">Пользователь</span></div>
<div class="a" style="top:255.46px;left:1791px;width:102px;height:26px;overflow:hidden;"><span style="position:absolute;top:0;font-size:16px;line-height:26px;color:#000;white-space:pre;letter-spacing:0.22px;word-spacing:0.7px;right:-8px;">759530524</span></div>
<svg class="a" style="left:1791px;top:252px" width="6" height="6"><path d="M0 0 H6 L0 6 Z" fill="#1e8c3a"/></svg>
<div class="a" style="top:281.46px;left:33px;width:208px;height:26px;overflow:hidden;"><span style="position:absolute;top:0;font-size:16px;line-height:26px;color:#000;white-space:pre;letter-spacing:0.22px;word-spacing:0.7px;left:3px;">Молдинги и лепнина</span></div>
<div class="a" style="top:281.46px;left:242px;width:81px;height:26px;overflow:hidden;"><span style="position:absolute;top:0;font-size:16px;line-height:26px;color:#000;white-space:pre;letter-spacing:0.22px;word-spacing:0.7px;left:-159.5px;width:400px;text-align:center;">117</span></div>
<div class="a" style="top:281.46px;left:324px;width:325px;height:26px;overflow:hidden;"><span style="position:absolute;top:0;font-size:16px;line-height:26px;color:#000;white-space:pre;letter-spacing:0.22px;word-spacing:0.7px;left:3px;">Обрамление окон. Фасадный декор</span></div>
<div class="a" style="top:281.46px;left:650px;width:67px;height:26px;overflow:hidden;"><span style="position:absolute;top:0;font-size:16px;line-height:26px;color:#000;white-space:pre;letter-spacing:0.22px;word-spacing:0.7px;right:3px;">400</span></div>
<div class="a" style="top:281.46px;left:718px;width:113px;height:26px;overflow:hidden;"><span style="position:absolute;top:0;font-size:16px;line-height:26px;color:#000;white-space:pre;letter-spacing:0.22px;word-spacing:0.7px;left:-143.5px;width:400px;text-align:center;">0</span></div>
<div class="a" style="top:281.46px;left:832px;width:113px;height:26px;overflow:hidden;"><span style="position:absolute;top:0;font-size:16px;line-height:26px;color:#000;white-space:pre;letter-spacing:0.22px;word-spacing:0.7px;right:3px;">32782</span></div>
<div class="a" style="top:281.46px;left:946px;width:113px;height:26px;overflow:hidden;"><span style="position:absolute;top:0;font-size:16px;line-height:26px;color:#000;white-space:pre;letter-spacing:0.22px;word-spacing:0.7px;right:3px;">117</span></div>
<div class="a" style="top:281.46px;left:1060px;width:113px;height:26px;overflow:hidden;"><span style="position:absolute;top:0;font-size:16px;line-height:26px;color:#000;white-space:pre;letter-spacing:0.22px;word-spacing:0.7px;left:3px;">П, XL</span></div>
<div class="a" style="top:281.46px;left:1174px;width:68px;height:26px;overflow:hidden;"><span style="position:absolute;top:0;font-size:16px;line-height:26px;color:#000;white-space:pre;letter-spacing:0.22px;word-spacing:0.7px;left:3px;">2024.09.2</span></div>
<div class="a" style="top:281.46px;left:1243px;width:62px;height:26px;overflow:hidden;"><span style="position:absolute;top:0;font-size:16px;line-height:26px;color:#000;white-space:pre;letter-spacing:0.22px;word-spacing:0.7px;right:3px;">11</span></div>
<div class="a" style="top:281.46px;left:1306px;width:113px;height:26px;overflow:hidden;"><span style="position:absolute;top:0;font-size:16px;line-height:26px;color:#000;white-space:pre;letter-spacing:0.22px;word-spacing:0.7px;left:3px;">Подоконники И</span></div>
<div class="a" style="top:281.46px;left:1420px;width:73px;height:26px;overflow:hidden;"><span style="position:absolute;top:0;font-size:16px;line-height:26px;color:#000;white-space:pre;letter-spacing:0.22px;word-spacing:0.7px;right:3px;">2819</span></div>
<div class="a" style="top:281.46px;left:1494px;width:182px;height:26px;overflow:hidden;"><span style="position:absolute;top:0;font-size:16px;line-height:26px;color:#000;white-space:pre;letter-spacing:0.22px;word-spacing:0.7px;left:3px;">Классика фасада</span></div>
<div class="a" style="top:281.46px;left:1677px;width:113px;height:26px;overflow:hidden;"><span style="position:absolute;top:0;font-size:16px;line-height:26px;color:#000;white-space:pre;letter-spacing:0.22px;word-spacing:0.7px;left:3px;">i208393658</span></div>
<div class="a" style="top:281.46px;left:1791px;width:102px;height:26px;overflow:hidden;"><span style="position:absolute;top:0;font-size:16px;line-height:26px;color:#000;white-space:pre;letter-spacing:0.22px;word-spacing:0.7px;right:-8px;">2776066760</span></div>
<svg class="a" style="left:1791px;top:278px" width="6" height="6"><path d="M0 0 H6 L0 6 Z" fill="#1e8c3a"/></svg>
<div class="a" style="top:307.46px;left:33px;width:208px;height:26px;overflow:hidden;"><span style="position:absolute;top:0;font-size:16px;line-height:26px;color:#000;white-space:pre;letter-spacing:0.22px;word-spacing:0.7px;left:3px;">Ламинат</span></div>
<div class="a" style="top:307.46px;left:242px;width:81px;height:26px;overflow:hidden;"><span style="position:absolute;top:0;font-size:16px;line-height:26px;color:#000;white-space:pre;letter-spacing:0.22px;word-spacing:0.7px;left:-159.5px;width:400px;text-align:center;">217</span></div>
<div class="a" style="top:307.46px;left:324px;width:325px;height:26px;overflow:hidden;"><span style="position:absolute;top:0;font-size:16px;line-height:26px;color:#000;white-space:pre;letter-spacing:0.22px;word-spacing:0.7px;left:3px;">Ламинат со склада</span></div>
<div class="a" style="top:307.46px;left:650px;width:67px;height:26px;overflow:hidden;"><span style="position:absolute;top:0;font-size:16px;line-height:26px;color:#000;white-space:pre;letter-spacing:0.22px;word-spacing:0.7px;right:3px;">380</span></div>
<div class="a" style="top:307.46px;left:718px;width:113px;height:26px;overflow:hidden;"><span style="position:absolute;top:0;font-size:16px;line-height:26px;color:#000;white-space:pre;letter-spacing:0.22px;word-spacing:0.7px;left:-143.5px;width:400px;text-align:center;">0</span></div>
<div class="a" style="top:307.46px;left:832px;width:113px;height:26px;overflow:hidden;"><span style="position:absolute;top:0;font-size:16px;line-height:26px;color:#000;white-space:pre;letter-spacing:0.22px;word-spacing:0.7px;right:3px;">32574</span></div>
<div class="a" style="top:307.46px;left:946px;width:113px;height:26px;overflow:hidden;"><span style="position:absolute;top:0;font-size:16px;line-height:26px;color:#000;white-space:pre;letter-spacing:0.22px;word-spacing:0.7px;right:3px;">33</span></div>
<div class="a" style="top:307.46px;left:1060px;width:113px;height:26px;overflow:hidden;"><span style="position:absolute;top:0;font-size:16px;line-height:26px;color:#000;white-space:pre;letter-spacing:0.22px;word-spacing:0.7px;left:3px;">П, XL</span></div>
<div class="a" style="top:307.46px;left:1174px;width:68px;height:26px;overflow:hidden;"><span style="position:absolute;top:0;font-size:16px;line-height:26px;color:#000;white-space:pre;letter-spacing:0.22px;word-spacing:0.7px;left:3px;">2024.09.1</span></div>
<div class="a" style="top:307.46px;left:1243px;width:62px;height:26px;overflow:hidden;"><span style="position:absolute;top:0;font-size:16px;line-height:26px;color:#000;white-space:pre;letter-spacing:0.22px;word-spacing:0.7px;right:3px;">11</span></div>
<div class="a" style="top:307.46px;left:1306px;width:113px;height:26px;overflow:hidden;"><span style="position:absolute;top:0;font-size:16px;line-height:26px;color:#000;white-space:pre;letter-spacing:0.22px;word-spacing:0.7px;left:3px;">Быстро! Выгодно</span></div>
<div class="a" style="top:307.46px;left:1420px;width:73px;height:26px;overflow:hidden;"><span style="position:absolute;top:0;font-size:16px;line-height:26px;color:#000;white-space:pre;letter-spacing:0.22px;word-spacing:0.7px;right:3px;">1031</span></div>
<div class="a" style="top:307.46px;left:1494px;width:182px;height:26px;overflow:hidden;"><span style="position:absolute;top:0;font-size:16px;line-height:26px;color:#000;white-space:pre;letter-spacing:0.22px;word-spacing:0.7px;left:3px;">shamil</span></div>
<div class="a" style="top:307.46px;left:1677px;width:113px;height:26px;overflow:hidden;"><span style="position:absolute;top:0;font-size:16px;line-height:26px;color:#000;white-space:pre;letter-spacing:0.22px;word-spacing:0.7px;left:3px;">b6ef0e94740a2</span></div>
<div class="a" style="top:307.46px;left:1791px;width:102px;height:26px;overflow:hidden;"><span style="position:absolute;top:0;font-size:16px;line-height:26px;color:#000;white-space:pre;letter-spacing:0.22px;word-spacing:0.7px;right:-8px;">3232441001</span></div>
<svg class="a" style="left:1791px;top:304px" width="6" height="6"><path d="M0 0 H6 L0 6 Z" fill="#1e8c3a"/></svg>
<div class="a" style="top:333.46px;left:33px;width:208px;height:26px;overflow:hidden;"><span style="position:absolute;top:0;font-size:16px;line-height:26px;color:#000;white-space:pre;letter-spacing:0.22px;word-spacing:0.7px;left:3px;">Кровля и водосток</span></div>
<div class="a" style="top:333.46px;left:242px;width:81px;height:26px;overflow:hidden;"><span style="position:absolute;top:0;font-size:16px;line-height:26px;color:#000;white-space:pre;letter-spacing:0.22px;word-spacing:0.7px;left:-159.5px;width:400px;text-align:center;">105</span></div>
<div class="a" style="top:333.46px;left:324px;width:325px;height:26px;overflow:hidden;"><span style="position:absolute;top:0;font-size:16px;line-height:26px;color:#000;white-space:pre;letter-spacing:0.22px;word-spacing:0.7px;left:3px;">Баннер б/у для строительства</span></div>
<div class="a" style="top:333.46px;left:650px;width:67px;height:26px;overflow:hidden;"><span style="position:absolute;top:0;font-size:16px;line-height:26px;color:#000;white-space:pre;letter-spacing:0.22px;word-spacing:0.7px;right:3px;">1999</span></div>
<div class="a" style="top:333.46px;left:718px;width:113px;height:26px;overflow:hidden;"><span style="position:absolute;top:0;font-size:16px;line-height:26px;color:#000;white-space:pre;letter-spacing:0.22px;word-spacing:0.7px;left:-143.5px;width:400px;text-align:center;">0</span></div>
<div class="a" style="top:333.46px;left:832px;width:113px;height:26px;overflow:hidden;"><span style="position:absolute;top:0;font-size:16px;line-height:26px;color:#000;white-space:pre;letter-spacing:0.22px;word-spacing:0.7px;right:3px;">31600</span></div>
<div class="a" style="top:333.46px;left:946px;width:113px;height:26px;overflow:hidden;"><span style="position:absolute;top:0;font-size:16px;line-height:26px;color:#000;white-space:pre;letter-spacing:0.22px;word-spacing:0.7px;right:3px;">1</span></div>
<div class="a" style="top:333.46px;left:1060px;width:113px;height:26px;overflow:hidden;"><span style="position:absolute;top:0;font-size:16px;line-height:26px;color:#000;white-space:pre;letter-spacing:0.22px;word-spacing:0.7px;left:3px;">П, XL</span></div>
<div class="a" style="top:333.46px;left:1174px;width:68px;height:26px;overflow:hidden;"><span style="position:absolute;top:0;font-size:16px;line-height:26px;color:#000;white-space:pre;letter-spacing:0.22px;word-spacing:0.7px;left:3px;">2024.09.2</span></div>
<div class="a" style="top:333.46px;left:1243px;width:62px;height:26px;overflow:hidden;"><span style="position:absolute;top:0;font-size:16px;line-height:26px;color:#000;white-space:pre;letter-spacing:0.22px;word-spacing:0.7px;right:3px;">3</span></div>
<div class="a" style="top:333.46px;left:1306px;width:113px;height:26px;overflow:hidden;"><span style="position:absolute;top:0;font-size:16px;line-height:26px;color:#000;white-space:pre;letter-spacing:0.22px;word-spacing:0.7px;left:3px;">Укрывные Материалы</span></div>
<div class="a" style="top:333.46px;left:1420px;width:73px;height:26px;overflow:hidden;"><span style="position:absolute;top:0;font-size:16px;line-height:26px;color:#000;white-space:pre;letter-spacing:0.22px;word-spacing:0.7px;right:3px;">633</span></div>
<div class="a" style="top:333.46px;left:1494px;width:182px;height:26px;overflow:hidden;"><span style="position:absolute;top:0;font-size:16px;line-height:26px;color:#000;white-space:pre;letter-spacing:0.22px;word-spacing:0.7px;left:3px;">Баннер ВРН</span></div>
<div class="a" style="top:333.46px;left:1677px;width:113px;height:26px;overflow:hidden;"><span style="position:absolute;top:0;font-size:16px;line-height:26px;color:#000;white-space:pre;letter-spacing:0.22px;word-spacing:0.7px;left:3px;">i82093894</span></div>
<div class="a" style="top:333.46px;left:1791px;width:102px;height:26px;overflow:hidden;"><span style="position:absolute;top:0;font-size:16px;line-height:26px;color:#000;white-space:pre;letter-spacing:0.22px;word-spacing:0.7px;right:-8px;">2083987102</span></div>
<svg class="a" style="left:1791px;top:330px" width="6" height="6"><path d="M0 0 H6 L0 6 Z" fill="#1e8c3a"/></svg>
<div class="a" style="top:359.46px;left:33px;width:208px;height:26px;overflow:hidden;"><span style="position:absolute;top:0;font-size:16px;line-height:26px;color:#000;white-space:pre;letter-spacing:0.22px;word-spacing:0.7px;left:3px;">Лист</span></div>
<div class="a" style="top:359.46px;left:242px;width:81px;height:26px;overflow:hidden;"><span style="position:absolute;top:0;font-size:16px;line-height:26px;color:#000;white-space:pre;letter-spacing:0.22px;word-spacing:0.7px;left:-159.5px;width:400px;text-align:center;">20</span></div>
<div class="a" style="top:359.46px;left:324px;width:325px;height:26px;overflow:hidden;"><span style="position:absolute;top:0;font-size:16px;line-height:26px;color:#000;white-space:pre;letter-spacing:0.22px;word-spacing:0.7px;left:3px;">Профнастил профлист оптом</span></div>
<div class="a" style="top:359.46px;left:650px;width:67px;height:26px;overflow:hidden;"><span style="position:absolute;top:0;font-size:16px;line-height:26px;color:#000;white-space:pre;letter-spacing:0.22px;word-spacing:0.7px;right:3px;">311</span></div>
<div class="a" style="top:359.46px;left:718px;width:113px;height:26px;overflow:hidden;"><span style="position:absolute;top:0;font-size:16px;line-height:26px;color:#000;white-space:pre;letter-spacing:0.22px;word-spacing:0.7px;left:-143.5px;width:400px;text-align:center;">0</span></div>
<div class="a" style="top:359.46px;left:832px;width:113px;height:26px;overflow:hidden;"><span style="position:absolute;top:0;font-size:16px;line-height:26px;color:#000;white-space:pre;letter-spacing:0.22px;word-spacing:0.7px;right:3px;">31210</span></div>
<div class="a" style="top:359.46px;left:946px;width:113px;height:26px;overflow:hidden;"><span style="position:absolute;top:0;font-size:16px;line-height:26px;color:#000;white-space:pre;letter-spacing:0.22px;word-spacing:0.7px;right:3px;">21</span></div>
<div class="a" style="top:359.46px;left:1060px;width:113px;height:26px;overflow:hidden;"><span style="position:absolute;top:0;font-size:16px;line-height:26px;color:#000;white-space:pre;letter-spacing:0.22px;word-spacing:0.7px;left:3px;">П, XL</span></div>
<div class="a" style="top:359.46px;left:1174px;width:68px;height:26px;overflow:hidden;"><span style="position:absolute;top:0;font-size:16px;line-height:26px;color:#000;white-space:pre;letter-spacing:0.22px;word-spacing:0.7px;left:3px;">2024.09.2</span></div>
<div class="a" style="top:359.46px;left:1243px;width:62px;height:26px;overflow:hidden;"><span style="position:absolute;top:0;font-size:16px;line-height:26px;color:#000;white-space:pre;letter-spacing:0.22px;word-spacing:0.7px;right:3px;">7</span></div>
<div class="a" style="top:359.46px;left:1306px;width:113px;height:26px;overflow:hidden;"><span style="position:absolute;top:0;font-size:16px;line-height:26px;color:#000;white-space:pre;letter-spacing:0.22px;word-spacing:0.7px;left:3px;">Профлист (производство</span></div>
<div class="a" style="top:359.46px;left:1420px;width:73px;height:26px;overflow:hidden;"><span style="position:absolute;top:0;font-size:16px;line-height:26px;color:#000;white-space:pre;letter-spacing:0.22px;word-spacing:0.7px;right:3px;">1328</span></div>
<div class="a" style="top:359.46px;left:1494px;width:182px;height:26px;overflow:hidden;"><span style="position:absolute;top:0;font-size:16px;line-height:26px;color:#000;white-space:pre;letter-spacing:0.22px;word-spacing:0.7px;left:3px;">ПРОФ-ЛИСТ - производитель</span></div>
<div class="a" style="top:359.46px;left:1677px;width:113px;height:26px;overflow:hidden;"><span style="position:absolute;top:0;font-size:16px;line-height:26px;color:#000;white-space:pre;letter-spacing:0.22px;word-spacing:0.7px;left:3px;">i9036623</span></div>
<div class="a" style="top:359.46px;left:1791px;width:102px;height:26px;overflow:hidden;"><span style="position:absolute;top:0;font-size:16px;line-height:26px;color:#000;white-space:pre;letter-spacing:0.22px;word-spacing:0.7px;right:-8px;">2349104184</span></div>
<svg class="a" style="left:1791px;top:356px" width="6" height="6"><path d="M0 0 H6 L0 6 Z" fill="#1e8c3a"/></svg>
<div class="a" style="top:385.46px;left:33px;width:208px;height:26px;overflow:hidden;"><span style="position:absolute;top:0;font-size:16px;line-height:26px;color:#000;white-space:pre;letter-spacing:0.22px;word-spacing:0.7px;left:3px;">Щебень, гравий</span></div>
<div class="a" style="top:385.46px;left:242px;width:81px;height:26px;overflow:hidden;"><span style="position:absolute;top:0;font-size:16px;line-height:26px;color:#000;white-space:pre;letter-spacing:0.22px;word-spacing:0.7px;left:-159.5px;width:400px;text-align:center;">237</span></div>
<div class="a" style="top:385.46px;left:324px;width:325px;height:26px;overflow:hidden;"><span style="position:absolute;top:0;font-size:16px;line-height:26px;color:#000;white-space:pre;letter-spacing:0.22px;word-spacing:0.7px;left:3px;">Вторичный щебень</span></div>
<div class="a" style="top:385.46px;left:650px;width:67px;height:26px;overflow:hidden;"><span style="position:absolute;top:0;font-size:16px;line-height:26px;color:#000;white-space:pre;letter-spacing:0.22px;word-spacing:0.7px;right:3px;">800</span></div>
<div class="a" style="top:385.46px;left:718px;width:113px;height:26px;overflow:hidden;"><span style="position:absolute;top:0;font-size:16px;line-height:26px;color:#000;white-space:pre;letter-spacing:0.22px;word-spacing:0.7px;left:-143.5px;width:400px;text-align:center;">0</span></div>
<div class="a" style="top:385.46px;left:832px;width:113px;height:26px;overflow:hidden;"><span style="position:absolute;top:0;font-size:16px;line-height:26px;color:#000;white-space:pre;letter-spacing:0.22px;word-spacing:0.7px;right:3px;">30435</span></div>
<div class="a" style="top:385.46px;left:946px;width:113px;height:26px;overflow:hidden;"><span style="position:absolute;top:0;font-size:16px;line-height:26px;color:#000;white-space:pre;letter-spacing:0.22px;word-spacing:0.7px;right:3px;">56</span></div>
<div class="a" style="top:385.46px;left:1060px;width:113px;height:26px;overflow:hidden;"><span style="position:absolute;top:0;font-size:16px;line-height:26px;color:#000;white-space:pre;letter-spacing:0.22px;word-spacing:0.7px;left:3px;">П, В, XL</span></div>
<div class="a" style="top:385.46px;left:1174px;width:68px;height:26px;overflow:hidden;"><span style="position:absolute;top:0;font-size:16px;line-height:26px;color:#000;white-space:pre;letter-spacing:0.22px;word-spacing:0.7px;left:3px;">2024.09.1</span></div>
<div class="a" style="top:385.46px;left:1243px;width:62px;height:26px;overflow:hidden;"><span style="position:absolute;top:0;font-size:16px;line-height:26px;color:#000;white-space:pre;letter-spacing:0.22px;word-spacing:0.7px;right:3px;">10</span></div>
<div class="a" style="top:385.46px;left:1306px;width:113px;height:26px;overflow:hidden;"><span style="position:absolute;top:0;font-size:16px;line-height:26px;color:#000;white-space:pre;letter-spacing:0.22px;word-spacing:0.7px;left:3px;">Вторичный щебень</span></div>
<div class="a" style="top:385.46px;left:1420px;width:73px;height:26px;overflow:hidden;"><span style="position:absolute;top:0;font-size:16px;line-height:26px;color:#000;white-space:pre;letter-spacing:0.22px;word-spacing:0.7px;right:3px;">161</span></div>
<div class="a" style="top:385.46px;left:1494px;width:182px;height:26px;overflow:hidden;"><span style="position:absolute;top:0;font-size:16px;line-height:26px;color:#000;white-space:pre;letter-spacing:0.22px;word-spacing:0.7px;left:3px;">pesok_sheben_31</span></div>
<div class="a" style="top:385.46px;left:1677px;width:113px;height:26px;overflow:hidden;"><span style="position:absolute;top:0;font-size:16px;line-height:26px;color:#000;white-space:pre;letter-spacing:0.22px;word-spacing:0.7px;left:3px;">8bca9b40cc208</span></div>
<div class="a" style="top:385.46px;left:1791px;width:102px;height:26px;overflow:hidden;"><span style="position:absolute;top:0;font-size:16px;line-height:26px;color:#000;white-space:pre;letter-spacing:0.22px;word-spacing:0.7px;right:-8px;">2981427563</span></div>
<svg class="a" style="left:1791px;top:382px" width="6" height="6"><path d="M0 0 H6 L0 6 Z" fill="#1e8c3a"/></svg>
<div class="a" style="top:411.46px;left:33px;width:208px;height:26px;overflow:hidden;"><span style="position:absolute;top:0;font-size:16px;line-height:26px;color:#000;white-space:pre;letter-spacing:0.22px;word-spacing:0.7px;left:3px;">Баннеры, брезент и тенты</span></div>
<div class="a" style="top:411.46px;left:242px;width:81px;height:26px;overflow:hidden;"><span style="position:absolute;top:0;font-size:16px;line-height:26px;color:#000;white-space:pre;letter-spacing:0.22px;word-spacing:0.7px;left:-159.5px;width:400px;text-align:center;">235</span></div>
<div class="a" style="top:411.46px;left:324px;width:325px;height:26px;overflow:hidden;"><span style="position:absolute;top:0;font-size:16px;line-height:26px;color:#000;white-space:pre;letter-spacing:0.22px;word-spacing:0.7px;left:3px;">Тент баннер брезент полог В наличии В Москве</span></div>
<div class="a" style="top:411.46px;left:650px;width:67px;height:26px;overflow:hidden;"><span style="position:absolute;top:0;font-size:16px;line-height:26px;color:#000;white-space:pre;letter-spacing:0.22px;word-spacing:0.7px;right:3px;">60</span></div>
<div class="a" style="top:411.46px;left:718px;width:113px;height:26px;overflow:hidden;"><span style="position:absolute;top:0;font-size:16px;line-height:26px;color:#000;white-space:pre;letter-spacing:0.22px;word-spacing:0.7px;left:-143.5px;width:400px;text-align:center;">0</span></div>
<div class="a" style="top:411.46px;left:832px;width:113px;height:26px;overflow:hidden;"><span style="position:absolute;top:0;font-size:16px;line-height:26px;color:#000;white-space:pre;letter-spacing:0.22px;word-spacing:0.7px;right:3px;">24613</span></div>
<div class="a" style="top:411.46px;left:946px;width:113px;height:26px;overflow:hidden;"><span style="position:absolute;top:0;font-size:16px;line-height:26px;color:#000;white-space:pre;letter-spacing:0.22px;word-spacing:0.7px;right:3px;">41</span></div>
<div class="a" style="top:411.46px;left:1060px;width:113px;height:26px;overflow:hidden;"><span style="position:absolute;top:0;font-size:16px;line-height:26px;color:#000;white-space:pre;letter-spacing:0.22px;word-spacing:0.7px;left:3px;">П, В, XL</span></div>
<div class="a" style="top:411.46px;left:1174px;width:68px;height:26px;overflow:hidden;"><span style="position:absolute;top:0;font-size:16px;line-height:26px;color:#000;white-space:pre;letter-spacing:0.22px;word-spacing:0.7px;left:3px;">2024.09.1</span></div>
<div class="a" style="top:411.46px;left:1243px;width:62px;height:26px;overflow:hidden;"><span style="position:absolute;top:0;font-size:16px;line-height:26px;color:#000;white-space:pre;letter-spacing:0.22px;word-spacing:0.7px;right:3px;">8</span></div>
<div class="a" style="top:411.46px;left:1306px;width:113px;height:26px;overflow:hidden;"><span style="position:absolute;top:0;font-size:16px;line-height:26px;color:#000;white-space:pre;letter-spacing:0.22px;word-spacing:0.7px;left:3px;">Занимаюсь тентами</span></div>
<div class="a" style="top:411.46px;left:1420px;width:73px;height:26px;overflow:hidden;"><span style="position:absolute;top:0;font-size:16px;line-height:26px;color:#000;white-space:pre;letter-spacing:0.22px;word-spacing:0.7px;right:3px;">1829</span></div>
<div class="a" style="top:411.46px;left:1494px;width:182px;height:26px;overflow:hidden;"><span style="position:absolute;top:0;font-size:16px;line-height:26px;color:#000;white-space:pre;letter-spacing:0.22px;word-spacing:0.7px;left:3px;">Тимур</span></div>
<div class="a" style="top:411.46px;left:1677px;width:113px;height:26px;overflow:hidden;"><span style="position:absolute;top:0;font-size:16px;line-height:26px;color:#000;white-space:pre;letter-spacing:0.22px;word-spacing:0.7px;left:3px;">i9830312</span></div>
<div class="a" style="top:411.46px;left:1791px;width:102px;height:26px;overflow:hidden;"><span style="position:absolute;top:0;font-size:16px;line-height:26px;color:#000;white-space:pre;letter-spacing:0.22px;word-spacing:0.7px;right:-8px;">1958516072</span></div>
<svg class="a" style="left:1791px;top:408px" width="6" height="6"><path d="M0 0 H6 L0 6 Z" fill="#1e8c3a"/></svg>
<div class="a" style="top:437.46px;left:33px;width:208px;height:26px;overflow:hidden;"><span style="position:absolute;top:0;font-size:16px;line-height:26px;color:#000;white-space:pre;letter-spacing:0.22px;word-spacing:0.7px;left:3px;">Пиломатериалы</span></div>
<div class="a" style="top:437.46px;left:242px;width:81px;height:26px;overflow:hidden;"><span style="position:absolute;top:0;font-size:16px;line-height:26px;color:#000;white-space:pre;letter-spacing:0.22px;word-spacing:0.7px;left:-159.5px;width:400px;text-align:center;">12</span></div>
<div class="a" style="top:437.46px;left:324px;width:325px;height:26px;overflow:hidden;"><span style="position:absolute;top:0;font-size:16px;line-height:26px;color:#000;white-space:pre;letter-spacing:0.22px;word-spacing:0.7px;left:3px;">Доска обрезная, пиломатериалы, Брус обрезной</span></div>
<div class="a" style="top:437.46px;left:650px;width:67px;height:26px;overflow:hidden;"><span style="position:absolute;top:0;font-size:16px;line-height:26px;color:#000;white-space:pre;letter-spacing:0.22px;word-spacing:0.7px;right:3px;">6000</span></div>
<div class="a" style="top:437.46px;left:718px;width:113px;height:26px;overflow:hidden;"><span style="position:absolute;top:0;font-size:16px;line-height:26px;color:#000;white-space:pre;letter-spacing:0.22px;word-spacing:0.7px;left:-143.5px;width:400px;text-align:center;">0</span></div>
<div class="a" style="top:437.46px;left:832px;width:113px;height:26px;overflow:hidden;"><span style="position:absolute;top:0;font-size:16px;line-height:26px;color:#000;white-space:pre;letter-spacing:0.22px;word-spacing:0.7px;right:3px;">22628</span></div>
<div class="a" style="top:437.46px;left:946px;width:113px;height:26px;overflow:hidden;"><span style="position:absolute;top:0;font-size:16px;line-height:26px;color:#000;white-space:pre;letter-spacing:0.22px;word-spacing:0.7px;right:3px;">21</span></div>
<div class="a" style="top:437.46px;left:1060px;width:113px;height:26px;overflow:hidden;"><span style="position:absolute;top:0;font-size:16px;line-height:26px;color:#000;white-space:pre;letter-spacing:0.22px;word-spacing:0.7px;left:3px;">П, XL</span></div>
<div class="a" style="top:437.46px;left:1174px;width:68px;height:26px;overflow:hidden;"><span style="position:absolute;top:0;font-size:16px;line-height:26px;color:#000;white-space:pre;letter-spacing:0.22px;word-spacing:0.7px;left:3px;">2024.09.2</span></div>
<div class="a" style="top:437.46px;left:1243px;width:62px;height:26px;overflow:hidden;"><span style="position:absolute;top:0;font-size:16px;line-height:26px;color:#000;white-space:pre;letter-spacing:0.22px;word-spacing:0.7px;right:3px;">10</span></div>
<div class="a" style="top:437.46px;left:1306px;width:113px;height:26px;overflow:hidden;"><span style="position:absolute;top:0;font-size:16px;line-height:26px;color:#000;white-space:pre;letter-spacing:0.22px;word-spacing:0.7px;left:3px;">Пиломатериалы</span></div>
<div class="a" style="top:437.46px;left:1420px;width:73px;height:26px;overflow:hidden;"><span style="position:absolute;top:0;font-size:16px;line-height:26px;color:#000;white-space:pre;letter-spacing:0.22px;word-spacing:0.7px;right:3px;">1668</span></div>
<div class="a" style="top:437.46px;left:1494px;width:182px;height:26px;overflow:hidden;"><span style="position:absolute;top:0;font-size:16px;line-height:26px;color:#000;white-space:pre;letter-spacing:0.22px;word-spacing:0.7px;left:3px;">ВАШ ЛУЧШИЙ ПОСТАВЩИК</span></div>
<div class="a" style="top:437.46px;left:1677px;width:113px;height:26px;overflow:hidden;"><span style="position:absolute;top:0;font-size:16px;line-height:26px;color:#000;white-space:pre;letter-spacing:0.22px;word-spacing:0.7px;left:3px;">i213935153</span></div>
<div class="a" style="top:437.46px;left:1791px;width:102px;height:26px;overflow:hidden;"><span style="position:absolute;top:0;font-size:16px;line-height:26px;color:#000;white-space:pre;letter-spacing:0.22px;word-spacing:0.7px;right:-8px;">2479822454</span></div>
<svg class="a" style="left:1791px;top:434px" width="6" height="6"><path d="M0 0 H6 L0 6 Z" fill="#1e8c3a"/></svg>
<div class="a" style="top:463.46px;left:33px;width:208px;height:26px;overflow:hidden;"><span style="position:absolute;top:0;font-size:16px;line-height:26px;color:#000;white-space:pre;letter-spacing:0.22px;word-spacing:0.7px;left:3px;">Пиломатериалы</span></div>
<div class="a" style="top:463.46px;left:242px;width:81px;height:26px;overflow:hidden;"><span style="position:absolute;top:0;font-size:16px;line-height:26px;color:#000;white-space:pre;letter-spacing:0.22px;word-spacing:0.7px;left:-159.5px;width:400px;text-align:center;">110</span></div>
<div class="a" style="top:463.46px;left:324px;width:325px;height:26px;overflow:hidden;"><span style="position:absolute;top:0;font-size:16px;line-height:26px;color:#000;white-space:pre;letter-spacing:0.22px;word-spacing:0.7px;left:3px;">Пиломатериал : Брус, Доска, Заборная доска</span></div>
<div class="a" style="top:463.46px;left:650px;width:67px;height:26px;overflow:hidden;"><span style="position:absolute;top:0;font-size:16px;line-height:26px;color:#000;white-space:pre;letter-spacing:0.22px;word-spacing:0.7px;right:3px;">9000</span></div>
<div class="a" style="top:463.46px;left:718px;width:113px;height:26px;overflow:hidden;"><span style="position:absolute;top:0;font-size:16px;line-height:26px;color:#000;white-space:pre;letter-spacing:0.22px;word-spacing:0.7px;left:-143.5px;width:400px;text-align:center;">0</span></div>
<div class="a" style="top:463.46px;left:832px;width:113px;height:26px;overflow:hidden;"><span style="position:absolute;top:0;font-size:16px;line-height:26px;color:#000;white-space:pre;letter-spacing:0.22px;word-spacing:0.7px;right:3px;">21144</span></div>
<div class="a" style="top:463.46px;left:946px;width:113px;height:26px;overflow:hidden;"><span style="position:absolute;top:0;font-size:16px;line-height:26px;color:#000;white-space:pre;letter-spacing:0.22px;word-spacing:0.7px;right:3px;">1</span></div>
<div class="a" style="top:463.46px;left:1060px;width:113px;height:26px;overflow:hidden;"><span style="position:absolute;top:0;font-size:16px;line-height:26px;color:#000;white-space:pre;letter-spacing:0.22px;word-spacing:0.7px;left:3px;">П, В, XL</span></div>
<div class="a" style="top:463.46px;left:1174px;width:68px;height:26px;overflow:hidden;"><span style="position:absolute;top:0;font-size:16px;line-height:26px;color:#000;white-space:pre;letter-spacing:0.22px;word-spacing:0.7px;left:3px;">2024.09.2</span></div>
<div class="a" style="top:463.46px;left:1243px;width:62px;height:26px;overflow:hidden;"><span style="position:absolute;top:0;font-size:16px;line-height:26px;color:#000;white-space:pre;letter-spacing:0.22px;word-spacing:0.7px;right:3px;">10</span></div>
<div class="a" style="top:463.46px;left:1306px;width:113px;height:26px;overflow:hidden;"><span style="position:absolute;top:0;font-size:16px;line-height:26px;color:#000;white-space:pre;letter-spacing:0.22px;word-spacing:0.7px;left:3px;">Цена указана за</span></div>
<div class="a" style="top:463.46px;left:1420px;width:73px;height:26px;overflow:hidden;"><span style="position:absolute;top:0;font-size:16px;line-height:26px;color:#000;white-space:pre;letter-spacing:0.22px;word-spacing:0.7px;right:3px;">685</span></div>
<div class="a" style="top:463.46px;left:1494px;width:296px;height:26px;overflow:hidden;"><span style="position:absolute;top:0;font-size:16px;line-height:26px;color:#000;white-space:pre;letter-spacing:0.22px;word-spacing:0.7px;left:3px;">Пользователь</span></div>
<div class="a" style="top:463.46px;left:1791px;width:102px;height:26px;overflow:hidden;"><span style="position:absolute;top:0;font-size:16px;line-height:26px;color:#000;white-space:pre;letter-spacing:0.22px;word-spacing:0.7px;right:-8px;">2110757814</span></div>
<svg class="a" style="left:1791px;top:460px" width="6" height="6"><path d="M0 0 H6 L0 6 Z" fill="#1e8c3a"/></svg>
<div class="a" style="top:489.46px;left:33px;width:208px;height:26px;overflow:hidden;"><span style="position:absolute;top:0;font-size:16px;line-height:26px;color:#000;white-space:pre;letter-spacing:0.22px;word-spacing:0.7px;left:3px;">Щебень, гравий</span></div>
<div class="a" style="top:489.46px;left:242px;width:81px;height:26px;overflow:hidden;"><span style="position:absolute;top:0;font-size:16px;line-height:26px;color:#000;white-space:pre;letter-spacing:0.22px;word-spacing:0.7px;left:-159.5px;width:400px;text-align:center;">62</span></div>
<div class="a" style="top:489.46px;left:324px;width:325px;height:26px;overflow:hidden;"><span style="position:absolute;top:0;font-size:16px;line-height:26px;color:#000;white-space:pre;letter-spacing:0.22px;word-spacing:0.7px;left:3px;">Песок, гравий, гравмасса, пгс, щебень, другое</span></div>
<div class="a" style="top:489.46px;left:650px;width:67px;height:26px;overflow:hidden;"><span style="position:absolute;top:0;font-size:16px;line-height:26px;color:#000;white-space:pre;letter-spacing:0.22px;word-spacing:0.7px;right:3px;">1000</span></div>
<div class="a" style="top:489.46px;left:718px;width:113px;height:26px;overflow:hidden;"><span style="position:absolute;top:0;font-size:16px;line-height:26px;color:#000;white-space:pre;letter-spacing:0.22px;word-spacing:0.7px;left:-143.5px;width:400px;text-align:center;">0</span></div>
<div class="a" style="top:489.46px;left:832px;width:113px;height:26px;overflow:hidden;"><span style="position:absolute;top:0;font-size:16px;line-height:26px;color:#000;white-space:pre;letter-spacing:0.22px;word-spacing:0.7px;right:3px;">18926</span></div>
<div class="a" style="top:489.46px;left:946px;width:113px;height:26px;overflow:hidden;"><span style="position:absolute;top:0;font-size:16px;line-height:26px;color:#000;white-space:pre;letter-spacing:0.22px;word-spacing:0.7px;right:3px;">2</span></div>
<div class="a" style="top:489.46px;left:1060px;width:113px;height:26px;overflow:hidden;"><span style="position:absolute;top:0;font-size:16px;line-height:26px;color:#000;white-space:pre;letter-spacing:0.22px;word-spacing:0.7px;left:3px;">П, XL</span></div>
<div class="a" style="top:489.46px;left:1174px;width:68px;height:26px;overflow:hidden;"><span style="position:absolute;top:0;font-size:16px;line-height:26px;color:#000;white-space:pre;letter-spacing:0.22px;word-spacing:0.7px;left:3px;">2024.09.2</span></div>
<div class="a" style="top:489.46px;left:1243px;width:62px;height:26px;overflow:hidden;"><span style="position:absolute;top:0;font-size:16px;line-height:26px;color:#000;white-space:pre;letter-spacing:0.22px;word-spacing:0.7px;right:3px;">8</span></div>
<div class="a" style="top:489.46px;left:1306px;width:113px;height:26px;overflow:hidden;"><span style="position:absolute;top:0;font-size:16px;line-height:26px;color:#000;white-space:pre;letter-spacing:0.22px;word-spacing:0.7px;left:3px;">Доставлю максимально</span></div>
<div class="a" style="top:489.46px;left:1420px;width:73px;height:26px;overflow:hidden;"><span style="position:absolute;top:0;font-size:16px;line-height:26px;color:#000;white-space:pre;letter-spacing:0.22px;word-spacing:0.7px;right:3px;">743</span></div>
<div class="a" style="top:489.46px;left:1494px;width:182px;height:26px;overflow:hidden;"><span style="position:absolute;top:0;font-size:16px;line-height:26px;color:#000;white-space:pre;letter-spacing:0.22px;word-spacing:0.7px;left:3px;">Дело в технике</span></div>
<div class="a" style="top:489.46px;left:1677px;width:113px;height:26px;overflow:hidden;"><span style="position:absolute;top:0;font-size:16px;line-height:26px;color:#000;white-space:pre;letter-spacing:0.22px;word-spacing:0.7px;left:3px;">i20414560</span></div>
<div class="a" style="top:489.46px;left:1791px;width:102px;height:26px;overflow:hidden;"><span style="position:absolute;top:0;font-size:16px;line-height:26px;color:#000;white-space:pre;letter-spacing:0.22px;word-spacing:0.7px;right:-8px;">2206087930</span></div>
<svg class="a" style="left:1791px;top:486px" width="6" height="6"><path d="M0 0 H6 L0 6 Z" fill="#1e8c3a"/></svg>
<div class="a" style="top:515.46px;left:33px;width:208px;height:26px;overflow:hidden;"><span style="position:absolute;top:0;font-size:16px;line-height:26px;color:#000;white-space:pre;letter-spacing:0.22px;word-spacing:0.7px;left:3px;">Щебень, гравий</span></div>
<div class="a" style="top:515.46px;left:242px;width:81px;height:26px;overflow:hidden;"><span style="position:absolute;top:0;font-size:16px;line-height:26px;color:#000;white-space:pre;letter-spacing:0.22px;word-spacing:0.7px;left:-159.5px;width:400px;text-align:center;">5</span></div>
<div class="a" style="top:515.46px;left:324px;width:325px;height:26px;overflow:hidden;"><span style="position:absolute;top:0;font-size:16px;line-height:26px;color:#000;white-space:pre;letter-spacing:0.22px;word-spacing:0.7px;left:3px;">Щебень,песок,отсев,грунт,вскрыша, чернозем</span></div>
<div class="a" style="top:515.46px;left:650px;width:67px;height:26px;overflow:hidden;"><span style="position:absolute;top:0;font-size:16px;line-height:26px;color:#000;white-space:pre;letter-spacing:0.22px;word-spacing:0.7px;right:3px;">750</span></div>
<div class="a" style="top:515.46px;left:718px;width:113px;height:26px;overflow:hidden;"><span style="position:absolute;top:0;font-size:16px;line-height:26px;color:#000;white-space:pre;letter-spacing:0.22px;word-spacing:0.7px;left:-143.5px;width:400px;text-align:center;">0</span></div>
<div class="a" style="top:515.46px;left:832px;width:113px;height:26px;overflow:hidden;"><span style="position:absolute;top:0;font-size:16px;line-height:26px;color:#000;white-space:pre;letter-spacing:0.22px;word-spacing:0.7px;right:3px;">18723</span></div>
<div class="a" style="top:515.46px;left:946px;width:113px;height:26px;overflow:hidden;"><span style="position:absolute;top:0;font-size:16px;line-height:26px;color:#000;white-space:pre;letter-spacing:0.22px;word-spacing:0.7px;right:3px;">5</span></div>
<div class="a" style="top:515.46px;left:1060px;width:113px;height:26px;overflow:hidden;"><span style="position:absolute;top:0;font-size:16px;line-height:26px;color:#000;white-space:pre;letter-spacing:0.22px;word-spacing:0.7px;left:3px;">П, XL</span></div>
<div class="a" style="top:515.46px;left:1174px;width:68px;height:26px;overflow:hidden;"><span style="position:absolute;top:0;font-size:16px;line-height:26px;color:#000;white-space:pre;letter-spacing:0.22px;word-spacing:0.7px;left:3px;">2024.09.2</span></div>
<div class="a" style="top:515.46px;left:1243px;width:62px;height:26px;overflow:hidden;"><span style="position:absolute;top:0;font-size:16px;line-height:26px;color:#000;white-space:pre;letter-spacing:0.22px;word-spacing:0.7px;right:3px;">10</span></div>
<div class="a" style="top:515.46px;left:1306px;width:113px;height:26px;overflow:hidden;"><span style="position:absolute;top:0;font-size:16px;line-height:26px;color:#000;white-space:pre;letter-spacing:0.22px;word-spacing:0.7px;left:3px;">Частное Лицо, продаю</span></div>
<div class="a" style="top:515.46px;left:1420px;width:73px;height:26px;overflow:hidden;"><span style="position:absolute;top:0;font-size:16px;line-height:26px;color:#000;white-space:pre;letter-spacing:0.22px;word-spacing:0.7px;right:3px;">1156</span></div>
<div class="a" style="top:515.46px;left:1494px;width:182px;height:26px;overflow:hidden;"><span style="position:absolute;top:0;font-size:16px;line-height:26px;color:#000;white-space:pre;letter-spacing:0.22px;word-spacing:0.7px;left:3px;">Александр</span></div>
<div class="a" style="top:515.46px;left:1677px;width:113px;height:26px;overflow:hidden;"><span style="position:absolute;top:0;font-size:16px;line-height:26px;color:#000;white-space:pre;letter-spacing:0.22px;word-spacing:0.7px;left:3px;">i128211487</span></div>
<div class="a" style="top:515.46px;left:1791px;width:102px;height:26px;overflow:hidden;"><span style="position:absolute;top:0;font-size:16px;line-height:26px;color:#000;white-space:pre;letter-spacing:0.22px;word-spacing:0.7px;right:-8px;">2429622684</span></div>
<svg class="a" style="left:1791px;top:512px" width="6" height="6"><path d="M0 0 H6 L0 6 Z" fill="#1e8c3a"/></svg>
<div class="a" style="top:541.46px;left:33px;width:208px;height:26px;overflow:hidden;"><span style="position:absolute;top:0;font-size:16px;line-height:26px;color:#000;white-space:pre;letter-spacing:0.22px;word-spacing:0.7px;left:3px;">Паркет, инженерная доска</span></div>
<div class="a" style="top:541.46px;left:242px;width:81px;height:26px;overflow:hidden;"><span style="position:absolute;top:0;font-size:16px;line-height:26px;color:#000;white-space:pre;letter-spacing:0.22px;word-spacing:0.7px;left:-159.5px;width:400px;text-align:center;">40</span></div>
<div class="a" style="top:541.46px;left:324px;width:325px;height:26px;overflow:hidden;"><span style="position:absolute;top:0;font-size:16px;line-height:26px;color:#000;white-space:pre;letter-spacing:0.22px;word-spacing:0.7px;left:3px;">Напольные покрытия</span></div>
<div class="a" style="top:541.46px;left:650px;width:67px;height:26px;overflow:hidden;"><span style="position:absolute;top:0;font-size:16px;line-height:26px;color:#000;white-space:pre;letter-spacing:0.22px;word-spacing:0.7px;right:3px;">585</span></div>
<div class="a" style="top:541.46px;left:718px;width:113px;height:26px;overflow:hidden;"><span style="position:absolute;top:0;font-size:16px;line-height:26px;color:#000;white-space:pre;letter-spacing:0.22px;word-spacing:0.7px;left:-143.5px;width:400px;text-align:center;">0</span></div>
<div class="a" style="top:541.46px;left:832px;width:113px;height:26px;overflow:hidden;"><span style="position:absolute;top:0;font-size:16px;line-height:26px;color:#000;white-space:pre;letter-spacing:0.22px;word-spacing:0.7px;right:3px;">18331</span></div>
<div class="a" style="top:541.46px;left:946px;width:113px;height:26px;overflow:hidden;"><span style="position:absolute;top:0;font-size:16px;line-height:26px;color:#000;white-space:pre;letter-spacing:0.22px;word-spacing:0.7px;right:3px;">9</span></div>
<div class="a" style="top:541.46px;left:1060px;width:113px;height:26px;overflow:hidden;"><span style="position:absolute;top:0;font-size:16px;line-height:26px;color:#000;white-space:pre;letter-spacing:0.22px;word-spacing:0.7px;left:3px;">П, В, XL</span></div>
<div class="a" style="top:541.46px;left:1174px;width:68px;height:26px;overflow:hidden;"><span style="position:absolute;top:0;font-size:16px;line-height:26px;color:#000;white-space:pre;letter-spacing:0.22px;word-spacing:0.7px;left:3px;">2024.09.2</span></div>
<div class="a" style="top:541.46px;left:1243px;width:62px;height:26px;overflow:hidden;"><span style="position:absolute;top:0;font-size:16px;line-height:26px;color:#000;white-space:pre;letter-spacing:0.22px;word-spacing:0.7px;right:3px;">10</span></div>
<div class="a" style="top:541.46px;left:1306px;width:113px;height:26px;overflow:hidden;"><span style="position:absolute;top:0;font-size:16px;line-height:26px;color:#000;white-space:pre;letter-spacing:0.22px;word-spacing:0.7px;left:3px;">Акция! В Наличии</span></div>
<div class="a" style="top:541.46px;left:1420px;width:73px;height:26px;overflow:hidden;"><span style="position:absolute;top:0;font-size:16px;line-height:26px;color:#000;white-space:pre;letter-spacing:0.22px;word-spacing:0.7px;right:3px;">509</span></div>
<div class="a" style="top:541.46px;left:1494px;width:296px;height:26px;overflow:hidden;"><span style="position:absolute;top:0;font-size:16px;line-height:26px;color:#000;white-space:pre;letter-spacing:0.22px;word-spacing:0.7px;left:3px;">Пользователь</span></div>
<div class="a" style="top:541.46px;left:1791px;width:102px;height:26px;overflow:hidden;"><span style="position:absolute;top:0;font-size:16px;line-height:26px;color:#000;white-space:pre;letter-spacing:0.22px;word-spacing:0.7px;right:-8px;">3489813655</span></div>
<svg class="a" style="left:1791px;top:538px" width="6" height="6"><path d="M0 0 H6 L0 6 Z" fill="#1e8c3a"/></svg>
<div class="a" style="top:567.46px;left:33px;width:208px;height:26px;overflow:hidden;"><span style="position:absolute;top:0;font-size:16px;line-height:26px;color:#000;white-space:pre;letter-spacing:0.22px;word-spacing:0.7px;left:3px;">Газобетон</span></div>
<div class="a" style="top:567.46px;left:242px;width:81px;height:26px;overflow:hidden;"><span style="position:absolute;top:0;font-size:16px;line-height:26px;color:#000;white-space:pre;letter-spacing:0.22px;word-spacing:0.7px;left:-159.5px;width:400px;text-align:center;">169</span></div>
<div class="a" style="top:567.46px;left:324px;width:325px;height:26px;overflow:hidden;"><span style="position:absolute;top:0;font-size:16px;line-height:26px;color:#000;white-space:pre;letter-spacing:0.22px;word-spacing:0.7px;left:3px;">Газобетонные блоки с доставкой</span></div>
<div class="a" style="top:567.46px;left:650px;width:67px;height:26px;overflow:hidden;"><span style="position:absolute;top:0;font-size:16px;line-height:26px;color:#000;white-space:pre;letter-spacing:0.22px;word-spacing:0.7px;right:3px;">3610</span></div>
<div class="a" style="top:567.46px;left:718px;width:113px;height:26px;overflow:hidden;"><span style="position:absolute;top:0;font-size:16px;line-height:26px;color:#000;white-space:pre;letter-spacing:0.22px;word-spacing:0.7px;left:-143.5px;width:400px;text-align:center;">0</span></div>
<div class="a" style="top:567.46px;left:832px;width:113px;height:26px;overflow:hidden;"><span style="position:absolute;top:0;font-size:16px;line-height:26px;color:#000;white-space:pre;letter-spacing:0.22px;word-spacing:0.7px;right:3px;">17745</span></div>
<div class="a" style="top:567.46px;left:946px;width:113px;height:26px;overflow:hidden;"><span style="position:absolute;top:0;font-size:16px;line-height:26px;color:#000;white-space:pre;letter-spacing:0.22px;word-spacing:0.7px;right:3px;">4</span></div>
<div class="a" style="top:567.46px;left:1060px;width:113px;height:26px;overflow:hidden;"><span style="position:absolute;top:0;font-size:16px;line-height:26px;color:#000;white-space:pre;letter-spacing:0.22px;word-spacing:0.7px;left:3px;">П, В, XL</span></div>
<div class="a" style="top:567.46px;left:1174px;width:68px;height:26px;overflow:hidden;"><span style="position:absolute;top:0;font-size:16px;line-height:26px;color:#000;white-space:pre;letter-spacing:0.22px;word-spacing:0.7px;left:3px;">2024.09.2</span></div>
<div class="a" style="top:567.46px;left:1243px;width:62px;height:26px;overflow:hidden;"><span style="position:absolute;top:0;font-size:16px;line-height:26px;color:#000;white-space:pre;letter-spacing:0.22px;word-spacing:0.7px;right:3px;">10</span></div>
<div class="a" style="top:567.46px;left:1306px;width:113px;height:26px;overflow:hidden;"><span style="position:absolute;top:0;font-size:16px;line-height:26px;color:#000;white-space:pre;letter-spacing:0.22px;word-spacing:0.7px;left:3px;">Газобетонные блоки</span></div>
<div class="a" style="top:567.46px;left:1420px;width:73px;height:26px;overflow:hidden;"><span style="position:absolute;top:0;font-size:16px;line-height:26px;color:#000;white-space:pre;letter-spacing:0.22px;word-spacing:0.7px;right:3px;">853</span></div>
<div class="a" style="top:567.46px;left:1494px;width:182px;height:26px;overflow:hidden;"><span style="position:absolute;top:0;font-size:16px;line-height:26px;color:#000;white-space:pre;letter-spacing:0.22px;word-spacing:0.7px;left:3px;">Екатерина</span></div>
<div class="a" style="top:567.46px;left:1677px;width:113px;height:26px;overflow:hidden;"><span style="position:absolute;top:0;font-size:16px;line-height:26px;color:#000;white-space:pre;letter-spacing:0.22px;word-spacing:0.7px;left:3px;">i148551426</span></div>
<div class="a" style="top:567.46px;left:1791px;width:102px;height:26px;overflow:hidden;"><span style="position:absolute;top:0;font-size:16px;line-height:26px;color:#000;white-space:pre;letter-spacing:0.22px;word-spacing:0.7px;right:-8px;">2720061633</span></div>
<svg class="a" style="left:1791px;top:564px" width="6" height="6"><path d="M0 0 H6 L0 6 Z" fill="#1e8c3a"/></svg>
<div class="a" style="top:593.46px;left:33px;width:208px;height:26px;overflow:hidden;"><span style="position:absolute;top:0;font-size:16px;line-height:26px;color:#000;white-space:pre;letter-spacing:0.22px;word-spacing:0.7px;left:3px;">Песок</span></div>
<div class="a" style="top:593.46px;left:242px;width:81px;height:26px;overflow:hidden;"><span style="position:absolute;top:0;font-size:16px;line-height:26px;color:#000;white-space:pre;letter-spacing:0.22px;word-spacing:0.7px;left:-159.5px;width:400px;text-align:center;">9</span></div>
<div class="a" style="top:593.46px;left:324px;width:325px;height:26px;overflow:hidden;"><span style="position:absolute;top:0;font-size:16px;line-height:26px;color:#000;white-space:pre;letter-spacing:0.22px;word-spacing:0.7px;left:3px;">Песок, щебень, гравий, грунт, чернозём, земля</span></div>
<div class="a" style="top:593.46px;left:650px;width:67px;height:26px;overflow:hidden;"><span style="position:absolute;top:0;font-size:16px;line-height:26px;color:#000;white-space:pre;letter-spacing:0.22px;word-spacing:0.7px;right:3px;">100</span></div>
<div class="a" style="top:593.46px;left:718px;width:113px;height:26px;overflow:hidden;"><span style="position:absolute;top:0;font-size:16px;line-height:26px;color:#000;white-space:pre;letter-spacing:0.22px;word-spacing:0.7px;left:-143.5px;width:400px;text-align:center;">0</span></div>
<div class="a" style="top:593.46px;left:832px;width:113px;height:26px;overflow:hidden;"><span style="position:absolute;top:0;font-size:16px;line-height:26px;color:#000;white-space:pre;letter-spacing:0.22px;word-spacing:0.7px;right:3px;">17009</span></div>
<div class="a" style="top:593.46px;left:946px;width:113px;height:26px;overflow:hidden;"><span style="position:absolute;top:0;font-size:16px;line-height:26px;color:#000;white-space:pre;letter-spacing:0.22px;word-spacing:0.7px;right:3px;">4</span></div>
<div class="a" style="top:593.46px;left:1060px;width:113px;height:26px;overflow:hidden;"><span style="position:absolute;top:0;font-size:16px;line-height:26px;color:#000;white-space:pre;letter-spacing:0.22px;word-spacing:0.7px;left:3px;">П, XL</span></div>
<div class="a" style="top:593.46px;left:1174px;width:68px;height:26px;overflow:hidden;"><span style="position:absolute;top:0;font-size:16px;line-height:26px;color:#000;white-space:pre;letter-spacing:0.22px;word-spacing:0.7px;left:3px;">2024.09.2</span></div>
<div class="a" style="top:593.46px;left:1243px;width:62px;height:26px;overflow:hidden;"><span style="position:absolute;top:0;font-size:16px;line-height:26px;color:#000;white-space:pre;letter-spacing:0.22px;word-spacing:0.7px;right:3px;">9</span></div>
<div class="a" style="top:593.46px;left:1306px;width:113px;height:26px;overflow:hidden;"><span style="position:absolute;top:0;font-size:16px;line-height:26px;color:#000;white-space:pre;letter-spacing:0.22px;word-spacing:0.7px;left:3px;">Продажа с доставкой</span></div>
<div class="a" style="top:593.46px;left:1420px;width:73px;height:26px;overflow:hidden;"><span style="position:absolute;top:0;font-size:16px;line-height:26px;color:#000;white-space:pre;letter-spacing:0.22px;word-spacing:0.7px;right:3px;">801</span></div>
<div class="a" style="top:593.46px;left:1494px;width:182px;height:26px;overflow:hidden;"><span style="position:absolute;top:0;font-size:16px;line-height:26px;color:#000;white-space:pre;letter-spacing:0.22px;word-spacing:0.7px;left:3px;">Дмитрий Александрович</span></div>
<div class="a" style="top:593.46px;left:1677px;width:113px;height:26px;overflow:hidden;"><span style="position:absolute;top:0;font-size:16px;line-height:26px;color:#000;white-space:pre;letter-spacing:0.22px;word-spacing:0.7px;left:3px;">210354de37719</span></div>
<div class="a" style="top:593.46px;left:1791px;width:102px;height:26px;overflow:hidden;"><span style="position:absolute;top:0;font-size:16px;line-height:26px;color:#000;white-space:pre;letter-spacing:0.22px;word-spacing:0.7px;right:-8px;">2234368560</span></div>
<svg class="a" style="left:1791px;top:590px" width="6" height="6"><path d="M0 0 H6 L0 6 Z" fill="#1e8c3a"/></svg>
<div class="a" style="top:619.46px;left:33px;width:208px;height:26px;overflow:hidden;"><span style="position:absolute;top:0;font-size:16px;line-height:26px;color:#000;white-space:pre;letter-spacing:0.22px;word-spacing:0.7px;left:3px;">Щебень, гравий</span></div>
<div class="a" style="top:619.46px;left:242px;width:81px;height:26px;overflow:hidden;"><span style="position:absolute;top:0;font-size:16px;line-height:26px;color:#000;white-space:pre;letter-spacing:0.22px;word-spacing:0.7px;left:-159.5px;width:400px;text-align:center;">37</span></div>
<div class="a" style="top:619.46px;left:324px;width:325px;height:26px;overflow:hidden;"><span style="position:absolute;top:0;font-size:16px;line-height:26px;color:#000;white-space:pre;letter-spacing:0.22px;word-spacing:0.7px;left:3px;">Песок. Гравий. Грунт. Щебень. Пгс. Без посредников</span></div>
<div class="a" style="top:619.46px;left:650px;width:67px;height:26px;overflow:hidden;"><span style="position:absolute;top:0;font-size:16px;line-height:26px;color:#000;white-space:pre;letter-spacing:0.22px;word-spacing:0.7px;right:3px;">120</span></div>
<div class="a" style="top:619.46px;left:718px;width:113px;height:26px;overflow:hidden;"><span style="position:absolute;top:0;font-size:16px;line-height:26px;color:#000;white-space:pre;letter-spacing:0.22px;word-spacing:0.7px;left:-143.5px;width:400px;text-align:center;">0</span></div>
<div class="a" style="top:619.46px;left:832px;width:113px;height:26px;overflow:hidden;"><span style="position:absolute;top:0;font-size:16px;line-height:26px;color:#000;white-space:pre;letter-spacing:0.22px;word-spacing:0.7px;right:3px;">15327</span></div>
<div class="a" style="top:619.46px;left:946px;width:113px;height:26px;overflow:hidden;"><span style="position:absolute;top:0;font-size:16px;line-height:26px;color:#000;white-space:pre;letter-spacing:0.22px;word-spacing:0.7px;right:3px;">1</span></div>
<div class="a" style="top:619.46px;left:1060px;width:113px;height:26px;overflow:hidden;"><span style="position:absolute;top:0;font-size:16px;line-height:26px;color:#000;white-space:pre;letter-spacing:0.22px;word-spacing:0.7px;left:3px;">П, XL</span></div>
<div class="a" style="top:619.46px;left:1174px;width:68px;height:26px;overflow:hidden;"><span style="position:absolute;top:0;font-size:16px;line-height:26px;color:#000;white-space:pre;letter-spacing:0.22px;word-spacing:0.7px;left:3px;">2024.09.2</span></div>
<div class="a" style="top:619.46px;left:1243px;width:62px;height:26px;overflow:hidden;"><span style="position:absolute;top:0;font-size:16px;line-height:26px;color:#000;white-space:pre;letter-spacing:0.22px;word-spacing:0.7px;right:3px;">10</span></div>
<div class="a" style="top:619.46px;left:1306px;width:113px;height:26px;overflow:hidden;"><span style="position:absolute;top:0;font-size:16px;line-height:26px;color:#000;white-space:pre;letter-spacing:0.22px;word-spacing:0.7px;left:3px;">Доставка песка</span></div>
<div class="a" style="top:619.46px;left:1420px;width:73px;height:26px;overflow:hidden;"><span style="position:absolute;top:0;font-size:16px;line-height:26px;color:#000;white-space:pre;letter-spacing:0.22px;word-spacing:0.7px;right:3px;">1620</span></div>
<div class="a" style="top:619.46px;left:1494px;width:182px;height:26px;overflow:hidden;"><span style="position:absolute;top:0;font-size:16px;line-height:26px;color:#000;white-space:pre;letter-spacing:0.22px;word-spacing:0.7px;left:3px;">Песок39</span></div>
<div class="a" style="top:619.46px;left:1677px;width:113px;height:26px;overflow:hidden;"><span style="position:absolute;top:0;font-size:16px;line-height:26px;color:#000;white-space:pre;letter-spacing:0.22px;word-spacing:0.7px;left:3px;">e9948175b9045</span></div>
<div class="a" style="top:619.46px;left:1791px;width:102px;height:26px;overflow:hidden;"><span style="position:absolute;top:0;font-size:16px;line-height:26px;color:#000;white-space:pre;letter-spacing:0.22px;word-spacing:0.7px;right:-8px;">834366000</span></div>
<svg class="a" style="left:1791px;top:616px" width="6" height="6"><path d="M0 0 H6 L0 6 Z" fill="#1e8c3a"/></svg>
<div class="a" style="top:645.46px;left:33px;width:208px;height:26px;overflow:hidden;"><span style="position:absolute;top:0;font-size:16px;line-height:26px;color:#000;white-space:pre;letter-spacing:0.22px;word-spacing:0.7px;left:3px;">Щебень, гравий</span></div>
<div class="a" style="top:645.46px;left:242px;width:81px;height:26px;overflow:hidden;"><span style="position:absolute;top:0;font-size:16px;line-height:26px;color:#000;white-space:pre;letter-spacing:0.22px;word-spacing:0.7px;left:-159.5px;width:400px;text-align:center;">203</span></div>
<div class="a" style="top:645.46px;left:324px;width:325px;height:26px;overflow:hidden;"><span style="position:absolute;top:0;font-size:16px;line-height:26px;color:#000;white-space:pre;letter-spacing:0.22px;word-spacing:0.7px;left:3px;">Щебень песок строительный доставка</span></div>
<div class="a" style="top:645.46px;left:650px;width:67px;height:26px;overflow:hidden;"><span style="position:absolute;top:0;font-size:16px;line-height:26px;color:#000;white-space:pre;letter-spacing:0.22px;word-spacing:0.7px;right:3px;">500</span></div>
<div class="a" style="top:645.46px;left:718px;width:113px;height:26px;overflow:hidden;"><span style="position:absolute;top:0;font-size:16px;line-height:26px;color:#000;white-space:pre;letter-spacing:0.22px;word-spacing:0.7px;left:-143.5px;width:400px;text-align:center;">0</span></div>
<div class="a" style="top:645.46px;left:832px;width:113px;height:26px;overflow:hidden;"><span style="position:absolute;top:0;font-size:16px;line-height:26px;color:#000;white-space:pre;letter-spacing:0.22px;word-spacing:0.7px;right:3px;">12858</span></div>
<div class="a" style="top:645.46px;left:946px;width:113px;height:26px;overflow:hidden;"><span style="position:absolute;top:0;font-size:16px;line-height:26px;color:#000;white-space:pre;letter-spacing:0.22px;word-spacing:0.7px;right:3px;">23</span></div>
<div class="a" style="top:645.46px;left:1060px;width:113px;height:26px;overflow:hidden;"><span style="position:absolute;top:0;font-size:16px;line-height:26px;color:#000;white-space:pre;letter-spacing:0.22px;word-spacing:0.7px;left:3px;">П, XL</span></div>
<div class="a" style="top:645.46px;left:1174px;width:68px;height:26px;overflow:hidden;"><span style="position:absolute;top:0;font-size:16px;line-height:26px;color:#000;white-space:pre;letter-spacing:0.22px;word-spacing:0.7px;left:3px;">2024.09.1</span></div>
<div class="a" style="top:645.46px;left:1243px;width:62px;height:26px;overflow:hidden;"><span style="position:absolute;top:0;font-size:16px;line-height:26px;color:#000;white-space:pre;letter-spacing:0.22px;word-spacing:0.7px;right:3px;">10</span></div>
<div class="a" style="top:645.46px;left:1306px;width:113px;height:26px;overflow:hidden;"><span style="position:absolute;top:0;font-size:16px;line-height:26px;color:#000;white-space:pre;letter-spacing:0.22px;word-spacing:0.7px;left:3px;">Без посредников</span></div>
<div class="a" style="top:645.46px;left:1420px;width:73px;height:26px;overflow:hidden;"><span style="position:absolute;top:0;font-size:16px;line-height:26px;color:#000;white-space:pre;letter-spacing:0.22px;word-spacing:0.7px;right:3px;">1245</span></div>
<div class="a" style="top:645.46px;left:1494px;width:182px;height:26px;overflow:hidden;"><span style="position:absolute;top:0;font-size:16px;line-height:26px;color:#000;white-space:pre;letter-spacing:0.22px;word-spacing:0.7px;left:3px;">Астрасити</span></div>
<div class="a" style="top:645.46px;left:1677px;width:113px;height:26px;overflow:hidden;"><span style="position:absolute;top:0;font-size:16px;line-height:26px;color:#000;white-space:pre;letter-spacing:0.22px;word-spacing:0.7px;left:3px;">i29865708</span></div>
<div class="a" style="top:645.46px;left:1791px;width:102px;height:26px;overflow:hidden;"><span style="position:absolute;top:0;font-size:16px;line-height:26px;color:#000;white-space:pre;letter-spacing:0.22px;word-spacing:0.7px;right:-8px;">1738361040</span></div>
<svg class="a" style="left:1791px;top:642px" width="6" height="6"><path d="M0 0 H6 L0 6 Z" fill="#1e8c3a"/></svg>
<div class="a" style="top:671.46px;left:33px;width:208px;height:26px;overflow:hidden;"><span style="position:absolute;top:0;font-size:16px;line-height:26px;color:#000;white-space:pre;letter-spacing:0.22px;word-spacing:0.7px;left:3px;">Газобетон</span></div>
<div class="a" style="top:671.46px;left:242px;width:81px;height:26px;overflow:hidden;"><span style="position:absolute;top:0;font-size:16px;line-height:26px;color:#000;white-space:pre;letter-spacing:0.22px;word-spacing:0.7px;left:-159.5px;width:400px;text-align:center;">183</span></div>
<div class="a" style="top:671.46px;left:324px;width:325px;height:26px;overflow:hidden;"><span style="position:absolute;top:0;font-size:16px;line-height:26px;color:#000;white-space:pre;letter-spacing:0.22px;word-spacing:0.7px;left:3px;">Газоблок с доставкой</span></div>
<div class="a" style="top:671.46px;left:650px;width:67px;height:26px;overflow:hidden;"><span style="position:absolute;top:0;font-size:16px;line-height:26px;color:#000;white-space:pre;letter-spacing:0.22px;word-spacing:0.7px;right:3px;">3699</span></div>
<div class="a" style="top:671.46px;left:718px;width:113px;height:26px;overflow:hidden;"><span style="position:absolute;top:0;font-size:16px;line-height:26px;color:#000;white-space:pre;letter-spacing:0.22px;word-spacing:0.7px;left:-143.5px;width:400px;text-align:center;">0</span></div>
<div class="a" style="top:671.46px;left:832px;width:113px;height:26px;overflow:hidden;"><span style="position:absolute;top:0;font-size:16px;line-height:26px;color:#000;white-space:pre;letter-spacing:0.22px;word-spacing:0.7px;right:3px;">12517</span></div>
<div class="a" style="top:671.46px;left:946px;width:113px;height:26px;overflow:hidden;"><span style="position:absolute;top:0;font-size:16px;line-height:26px;color:#000;white-space:pre;letter-spacing:0.22px;word-spacing:0.7px;right:3px;">4</span></div>
<div class="a" style="top:671.46px;left:1060px;width:113px;height:26px;overflow:hidden;"><span style="position:absolute;top:0;font-size:16px;line-height:26px;color:#000;white-space:pre;letter-spacing:0.22px;word-spacing:0.7px;left:3px;">П, В, XL</span></div>
<div class="a" style="top:671.46px;left:1174px;width:68px;height:26px;overflow:hidden;"><span style="position:absolute;top:0;font-size:16px;line-height:26px;color:#000;white-space:pre;letter-spacing:0.22px;word-spacing:0.7px;left:3px;">2024.09.2</span></div>
<div class="a" style="top:671.46px;left:1243px;width:62px;height:26px;overflow:hidden;"><span style="position:absolute;top:0;font-size:16px;line-height:26px;color:#000;white-space:pre;letter-spacing:0.22px;word-spacing:0.7px;right:3px;">10</span></div>
<div class="a" style="top:671.46px;left:1306px;width:113px;height:26px;overflow:hidden;"><span style="position:absolute;top:0;font-size:16px;line-height:26px;color:#000;white-space:pre;letter-spacing:0.22px;word-spacing:0.7px;left:3px;">Газоблок с доставкой</span></div>
<div class="a" style="top:671.46px;left:1420px;width:73px;height:26px;overflow:hidden;"><span style="position:absolute;top:0;font-size:16px;line-height:26px;color:#000;white-space:pre;letter-spacing:0.22px;word-spacing:0.7px;right:3px;">1294</span></div>
<div class="a" style="top:671.46px;left:1494px;width:182px;height:26px;overflow:hidden;"><span style="position:absolute;top:0;font-size:16px;line-height:26px;color:#000;white-space:pre;letter-spacing:0.22px;word-spacing:0.7px;left:3px;">Ваш Блок</span></div>
<div class="a" style="top:671.46px;left:1677px;width:113px;height:26px;overflow:hidden;"><span style="position:absolute;top:0;font-size:16px;line-height:26px;color:#000;white-space:pre;letter-spacing:0.22px;word-spacing:0.7px;left:3px;">vash.blok</span></div>
<div class="a" style="top:671.46px;left:1791px;width:102px;height:26px;overflow:hidden;"><span style="position:absolute;top:0;font-size:16px;line-height:26px;color:#000;white-space:pre;letter-spacing:0.22px;word-spacing:0.7px;right:-8px;">2902784380</span></div>
<svg class="a" style="left:1791px;top:668px" width="6" height="6"><path d="M0 0 H6 L0 6 Z" fill="#1e8c3a"/></svg>
<div class="a" style="top:697.46px;left:33px;width:208px;height:26px;overflow:hidden;"><span style="position:absolute;top:0;font-size:16px;line-height:26px;color:#000;white-space:pre;letter-spacing:0.22px;word-spacing:0.7px;left:3px;">Сыпучие материалы</span></div>
<div class="a" style="top:697.46px;left:242px;width:81px;height:26px;overflow:hidden;"><span style="position:absolute;top:0;font-size:16px;line-height:26px;color:#000;white-space:pre;letter-spacing:0.22px;word-spacing:0.7px;left:-159.5px;width:400px;text-align:center;">219</span></div>
<div class="a" style="top:697.46px;left:324px;width:325px;height:26px;overflow:hidden;"><span style="position:absolute;top:0;font-size:16px;line-height:26px;color:#000;white-space:pre;letter-spacing:0.22px;word-spacing:0.7px;left:3px;">Щебень, отсев</span></div>
<div class="a" style="top:697.46px;left:650px;width:67px;height:26px;overflow:hidden;"><span style="position:absolute;top:0;font-size:16px;line-height:26px;color:#000;white-space:pre;letter-spacing:0.22px;word-spacing:0.7px;right:3px;">650</span></div>
<div class="a" style="top:697.46px;left:718px;width:113px;height:26px;overflow:hidden;"><span style="position:absolute;top:0;font-size:16px;line-height:26px;color:#000;white-space:pre;letter-spacing:0.22px;word-spacing:0.7px;left:-143.5px;width:400px;text-align:center;">0</span></div>
<div class="a" style="top:697.46px;left:832px;width:113px;height:26px;overflow:hidden;"><span style="position:absolute;top:0;font-size:16px;line-height:26px;color:#000;white-space:pre;letter-spacing:0.22px;word-spacing:0.7px;right:3px;">12217</span></div>
<div class="a" style="top:697.46px;left:946px;width:113px;height:26px;overflow:hidden;"><span style="position:absolute;top:0;font-size:16px;line-height:26px;color:#000;white-space:pre;letter-spacing:0.22px;word-spacing:0.7px;right:3px;">27</span></div>
<div class="a" style="top:697.46px;left:1060px;width:113px;height:26px;overflow:hidden;"><span style="position:absolute;top:0;font-size:16px;line-height:26px;color:#000;white-space:pre;letter-spacing:0.22px;word-spacing:0.7px;left:3px;">П, XL</span></div>
<div class="a" style="top:697.46px;left:1174px;width:68px;height:26px;overflow:hidden;"><span style="position:absolute;top:0;font-size:16px;line-height:26px;color:#000;white-space:pre;letter-spacing:0.22px;word-spacing:0.7px;left:3px;">2024.09.1</span></div>
<div class="a" style="top:697.46px;left:1243px;width:62px;height:26px;overflow:hidden;"><span style="position:absolute;top:0;font-size:16px;line-height:26px;color:#000;white-space:pre;letter-spacing:0.22px;word-spacing:0.7px;right:3px;">4</span></div>
<div class="a" style="top:697.46px;left:1306px;width:113px;height:26px;overflow:hidden;"><span style="position:absolute;top:0;font-size:16px;line-height:26px;color:#000;white-space:pre;letter-spacing:0.22px;word-spacing:0.7px;left:3px;">Щебень. Отсыпка</span></div>
<div class="a" style="top:697.46px;left:1420px;width:73px;height:26px;overflow:hidden;"><span style="position:absolute;top:0;font-size:16px;line-height:26px;color:#000;white-space:pre;letter-spacing:0.22px;word-spacing:0.7px;right:3px;">318</span></div>
<div class="a" style="top:697.46px;left:1494px;width:296px;height:26px;overflow:hidden;"><span style="position:absolute;top:0;font-size:16px;line-height:26px;color:#000;white-space:pre;letter-spacing:0.22px;word-spacing:0.7px;left:3px;">Пользователь</span></div>
<div class="a" style="top:697.46px;left:1791px;width:102px;height:26px;overflow:hidden;"><span style="position:absolute;top:0;font-size:16px;line-height:26px;color:#000;white-space:pre;letter-spacing:0.22px;word-spacing:0.7px;right:-8px;">3753505680</span></div>
<svg class="a" style="left:1791px;top:694px" width="6" height="6"><path d="M0 0 H6 L0 6 Z" fill="#1e8c3a"/></svg>
<div class="a" style="left:0px;top:0px;width:1893px;height:21px;background:#e6e6e6;"></div>
<div class="a" style="left:0px;top:21px;width:1893px;height:1px;background:#9e9e9e;"></div>
<div class="a" style="left:241px;top:0px;width:1px;height:21px;background:#c8c8c8;"></div>
<div class="a" style="left:323px;top:0px;width:1px;height:21px;background:#c8c8c8;"></div>
<div class="a" style="left:649px;top:0px;width:1px;height:21px;background:#c8c8c8;"></div>
<div class="a" style="left:717px;top:0px;width:1px;height:21px;background:#c8c8c8;"></div>
<div class="a" style="left:831px;top:0px;width:1px;height:21px;background:#c8c8c8;"></div>
<div class="a" style="left:945px;top:0px;width:1px;height:21px;background:#c8c8c8;"></div>
<div class="a" style="left:1059px;top:0px;width:1px;height:21px;background:#c8c8c8;"></div>
<div class="a" style="left:1173px;top:0px;width:1px;height:21px;background:#c8c8c8;"></div>
<div class="a" style="left:1242px;top:0px;width:1px;height:21px;background:#c8c8c8;"></div>
<div class="a" style="left:1305px;top:0px;width:1px;height:21px;background:#c8c8c8;"></div>
<div class="a" style="left:1419px;top:0px;width:1px;height:21px;background:#c8c8c8;"></div>
<div class="a" style="left:1493px;top:0px;width:1px;height:21px;background:#c8c8c8;"></div>
<div class="a" style="left:1676px;top:0px;width:1px;height:21px;background:#c8c8c8;"></div>
<div class="a" style="left:1790px;top:0px;width:1px;height:21px;background:#c8c8c8;"></div>
<div class="a" style="left:1904px;top:0px;width:1px;height:21px;background:#c8c8c8;"></div>
<div class="a" style="left:1491px;top:0px;width:5px;height:21px;background:#fff;"></div>
<div class="a" style="left:1491px;top:0px;width:1px;height:21px;background:#a8a8a8;"></div>
<div class="a" style="left:1495px;top:0px;width:1px;height:21px;background:#a8a8a8;"></div>
<div class="a" style="left:1496px;top:0px;width:180px;height:20px;background:#d2d2d2;"></div>
<div class="a" style="left:1495px;top:20px;width:181px;height:2px;background:#217346;"></div>
<div class="a" style="top:-0.54px;left:33px;width:208px;height:26px;overflow:hidden;"><span style="position:absolute;top:0;font-size:16px;line-height:26px;color:#222;white-space:pre;letter-spacing:0.22px;word-spacing:0.7px;left:-96.0px;width:400px;text-align:center;">A</span></div>
<div class="a" style="top:-0.54px;left:242px;width:81px;height:26px;overflow:hidden;"><span style="position:absolute;top:0;font-size:16px;line-height:26px;color:#222;white-space:pre;letter-spacing:0.22px;word-spacing:0.7px;left:-159.5px;width:400px;text-align:center;">B</span></div>
<div class="a" style="top:-0.54px;left:324px;width:325px;height:26px;overflow:hidden;"><span style="position:absolute;top:0;font-size:16px;line-height:26px;color:#222;white-space:pre;letter-spacing:0.22px;word-spacing:0.7px;left:-37.5px;width:400px;text-align:center;">C</span></div>
<div class="a" style="top:-0.54px;left:650px;width:67px;height:26px;overflow:hidden;"><span style="position:absolute;top:0;font-size:16px;line-height:26px;color:#222;white-space:pre;letter-spacing:0.22px;word-spacing:0.7px;left:-166.5px;width:400px;text-align:center;">D</span></div>
<div class="a" style="top:-0.54px;left:718px;width:113px;height:26px;overflow:hidden;"><span style="position:absolute;top:0;font-size:16px;line-height:26px;color:#222;white-space:pre;letter-spacing:0.22px;word-spacing:0.7px;left:-143.5px;width:400px;text-align:center;">E</span></div>
<div class="a" style="top:-0.54px;left:832px;width:113px;height:26px;overflow:hidden;"><span style="position:absolute;top:0;font-size:16px;line-height:26px;color:#222;white-space:pre;letter-spacing:0.22px;word-spacing:0.7px;left:-143.5px;width:400px;text-align:center;">F</span></div>
<div class="a" style="top:-0.54px;left:946px;width:113px;height:26px;overflow:hidden;"><span style="position:absolute;top:0;font-size:16px;line-height:26px;color:#222;white-space:pre;letter-spacing:0.22px;word-spacing:0.7px;left:-143.5px;width:400px;text-align:center;">G</span></div>
<div class="a" style="top:-0.54px;left:1060px;width:113px;height:26px;overflow:hidden;"><span style="position:absolute;top:0;font-size:16px;line-height:26px;color:#222;white-space:pre;letter-spacing:0.22px;word-spacing:0.7px;left:-143.5px;width:400px;text-align:center;">H</span></div>
<div class="a" style="top:-0.54px;left:1174px;width:68px;height:26px;overflow:hidden;"><span style="position:absolute;top:0;font-size:16px;line-height:26px;color:#222;white-space:pre;letter-spacing:0.22px;word-spacing:0.7px;left:-166.0px;width:400px;text-align:center;">I</span></div>
<div class="a" style="top:-0.54px;left:1243px;width:62px;height:26px;overflow:hidden;"><span style="position:absolute;top:0;font-size:16px;line-height:26px;color:#222;white-space:pre;letter-spacing:0.22px;word-spacing:0.7px;left:-169.0px;width:400px;text-align:center;">J</span></div>
<div class="a" style="top:-0.54px;left:1306px;width:113px;height:26px;overflow:hidden;"><span style="position:absolute;top:0;font-size:16px;line-height:26px;color:#222;white-space:pre;letter-spacing:0.22px;word-spacing:0.7px;left:-143.5px;width:400px;text-align:center;">K</span></div>
<div class="a" style="top:-0.54px;left:1420px;width:73px;height:26px;overflow:hidden;"><span style="position:absolute;top:0;font-size:16px;line-height:26px;color:#222;white-space:pre;letter-spacing:0.22px;word-spacing:0.7px;left:-163.5px;width:400px;text-align:center;">L</span></div>
<div class="a" style="top:-0.54px;left:1494px;width:182px;height:26px;overflow:hidden;"><span style="position:absolute;top:0;font-size:16px;line-height:26px;color:#217346;white-space:pre;letter-spacing:0.22px;word-spacing:0.7px;left:-109.0px;width:400px;text-align:center;">N</span></div>
<div class="a" style="top:-0.54px;left:1677px;width:113px;height:26px;overflow:hidden;"><span style="position:absolute;top:0;font-size:16px;line-height:26px;color:#222;white-space:pre;letter-spacing:0.22px;word-spacing:0.7px;left:-143.5px;width:400px;text-align:center;">O</span></div>
<div class="a" style="top:-0.54px;left:1791px;width:113px;height:26px;overflow:hidden;"><span style="position:absolute;top:0;font-size:16px;line-height:26px;color:#222;white-space:pre;letter-spacing:0.22px;word-spacing:0.7px;left:-143.5px;width:400px;text-align:center;">P</span></div>
<svg class="a" style="left:15px;top:4px" width="15" height="15"><path d="M14.5 0 V14.5 H0 Z" fill="#b4b4b4"/></svg>
<div class="a" style="left:0px;top:22px;width:32px;height:692px;background:#e6e6e6;"></div>
<div class="a" style="left:0px;top:43px;width:32px;height:1px;background:#bababa;"></div>
<div class="a" style="left:0px;top:69px;width:32px;height:1px;background:#bababa;"></div>
<div class="a" style="left:0px;top:95px;width:32px;height:1px;background:#bababa;"></div>
<div class="a" style="left:0px;top:121px;width:32px;height:1px;background:#bababa;"></div>
<div class="a" style="left:0px;top:147px;width:32px;height:1px;background:#bababa;"></div>
<div class="a" style="left:0px;top:173px;width:32px;height:1px;background:#bababa;"></div>
<div class="a" style="left:0px;top:199px;width:32px;height:1px;background:#bababa;"></div>
<div class="a" style="left:0px;top:225px;width:32px;height:1px;background:#bababa;"></div>
<div class="a" style="left:0px;top:251px;width:32px;height:1px;background:#bababa;"></div>
<div class="a" style="left:0px;top:277px;width:32px;height:1px;background:#bababa;"></div>
<div class="a" style="left:0px;top:303px;width:32px;height:1px;background:#bababa;"></div>
<div class="a" style="left:0px;top:329px;width:32px;height:1px;background:#bababa;"></div>
<div class="a" style="left:0px;top:355px;width:32px;height:1px;background:#bababa;"></div>
<div class="a" style="left:0px;top:381px;width:32px;height:1px;background:#bababa;"></div>
<div class="a" style="left:0px;top:407px;width:32px;height:1px;background:#bababa;"></div>
<div class="a" style="left:0px;top:433px;width:32px;height:1px;background:#bababa;"></div>
<div class="a" style="left:0px;top:459px;width:32px;height:1px;background:#bababa;"></div>
<div class="a" style="left:0px;top:485px;width:32px;height:1px;background:#bababa;"></div>
<div class="a" style="left:0px;top:511px;width:32px;height:1px;background:#bababa;"></div>
<div class="a" style="left:0px;top:537px;width:32px;height:1px;background:#bababa;"></div>
<div class="a" style="left:0px;top:563px;width:32px;height:1px;background:#bababa;"></div>
<div class="a" style="left:0px;top:589px;width:32px;height:1px;background:#bababa;"></div>
<div class="a" style="left:0px;top:615px;width:32px;height:1px;background:#bababa;"></div>
<div class="a" style="left:0px;top:641px;width:32px;height:1px;background:#bababa;"></div>
<div class="a" style="left:0px;top:667px;width:32px;height:1px;background:#bababa;"></div>
<div class="a" style="left:0px;top:693px;width:32px;height:1px;background:#bababa;"></div>
<div class="a" style="left:0px;top:719px;width:32px;height:1px;background:#bababa;"></div>
<div class="a" style="left:0px;top:252px;width:31px;height:25px;background:#d2d2d2;"></div>
<div class="a" style="left:32px;top:0px;width:1px;height:714px;background:#9e9e9e;"></div>
<div class="a" style="left:31px;top:251px;width:2px;height:27px;background:#217346;"></div>
<div class="a" style="top:21.46px;left:0px;width:31px;height:26px;overflow:hidden;"><span style="position:absolute;top:0;font-size:16px;line-height:26px;color:#222;white-space:pre;letter-spacing:0.22px;word-spacing:0.7px;left:-184.3px;width:400px;text-align:center;">1</span></div>
<div class="a" style="top:47.46px;left:0px;width:31px;height:26px;overflow:hidden;"><span style="position:absolute;top:0;font-size:16px;line-height:26px;color:#222;white-space:pre;letter-spacing:0.22px;word-spacing:0.7px;left:-184.3px;width:400px;text-align:center;">2</span></div>
<div class="a" style="top:73.46px;left:0px;width:31px;height:26px;overflow:hidden;"><span style="position:absolute;top:0;font-size:16px;line-height:26px;color:#222;white-space:pre;letter-spacing:0.22px;word-spacing:0.7px;left:-184.3px;width:400px;text-align:center;">3</span></div>
<div class="a" style="top:99.46px;left:0px;width:31px;height:26px;overflow:hidden;"><span style="position:absolute;top:0;font-size:16px;line-height:26px;color:#222;white-space:pre;letter-spacing:0.22px;word-spacing:0.7px;left:-184.3px;width:400px;text-align:center;">4</span></div>
<div class="a" style="top:125.46px;left:0px;width:31px;height:26px;overflow:hidden;"><span style="position:absolute;top:0;font-size:16px;line-height:26px;color:#222;white-space:pre;letter-spacing:0.22px;word-spacing:0.7px;left:-184.3px;width:400px;text-align:center;">5</span></div>
<div class="a" style="top:151.46px;left:0px;width:31px;height:26px;overflow:hidden;"><span style="position:absolute;top:0;font-size:16px;line-height:26px;color:#222;white-space:pre;letter-spacing:0.22px;word-spacing:0.7px;left:-184.3px;width:400px;text-align:center;">6</span></div>
<div class="a" style="top:177.46px;left:0px;width:31px;height:26px;overflow:hidden;"><span style="position:absolute;top:0;font-size:16px;line-height:26px;color:#222;white-space:pre;letter-spacing:0.22px;word-spacing:0.7px;left:-184.3px;width:400px;text-align:center;">7</span></div>
<div class="a" style="top:203.46px;left:0px;width:31px;height:26px;overflow:hidden;"><span style="position:absolute;top:0;font-size:16px;line-height:26px;color:#222;white-space:pre;letter-spacing:0.22px;word-spacing:0.7px;left:-184.3px;width:400px;text-align:center;">8</span></div>
<div class="a" style="top:229.46px;left:0px;width:31px;height:26px;overflow:hidden;"><span style="position:absolute;top:0;font-size:16px;line-height:26px;color:#222;white-space:pre;letter-spacing:0.22px;word-spacing:0.7px;left:-184.3px;width:400px;text-align:center;">9</span></div>
<div class="a" style="top:255.46px;left:0px;width:31px;height:26px;overflow:hidden;"><span style="position:absolute;top:0;font-size:16px;line-height:26px;color:#217346;white-space:pre;letter-spacing:0.22px;word-spacing:0.7px;left:-184.3px;width:400px;text-align:center;">10</span></div>
<div class="a" style="top:281.46px;left:0px;width:31px;height:26px;overflow:hidden;"><span style="position:absolute;top:0;font-size:16px;line-height:26px;color:#222;white-space:pre;letter-spacing:0.22px;word-spacing:0.7px;left:-184.3px;width:400px;text-align:center;">11</span></div>
<div class="a" style="top:307.46px;left:0px;width:31px;height:26px;overflow:hidden;"><span style="position:absolute;top:0;font-size:16px;line-height:26px;color:#222;white-space:pre;letter-spacing:0.22px;word-spacing:0.7px;left:-184.3px;width:400px;text-align:center;">12</span></div>
<div class="a" style="top:333.46px;left:0px;width:31px;height:26px;overflow:hidden;"><span style="position:absolute;top:0;font-size:16px;line-height:26px;color:#222;white-space:pre;letter-spacing:0.22px;word-spacing:0.7px;left:-184.3px;width:400px;text-align:center;">13</span></div>
<div class="a" style="top:359.46px;left:0px;width:31px;height:26px;overflow:hidden;"><span style="position:absolute;top:0;font-size:16px;line-height:26px;color:#222;white-space:pre;letter-spacing:0.22px;word-spacing:0.7px;left:-184.3px;width:400px;text-align:center;">14</span></div>
<div class="a" style="top:385.46px;left:0px;width:31px;height:26px;overflow:hidden;"><span style="position:absolute;top:0;font-size:16px;line-height:26px;color:#222;white-space:pre;letter-spacing:0.22px;word-spacing:0.7px;left:-184.3px;width:400px;text-align:center;">15</span></div>
<div class="a" style="top:411.46px;left:0px;width:31px;height:26px;overflow:hidden;"><span style="position:absolute;top:0;font-size:16px;line-height:26px;color:#222;white-space:pre;letter-spacing:0.22px;word-spacing:0.7px;left:-184.3px;width:400px;text-align:center;">16</span></div>
<div class="a" style="top:437.46px;left:0px;width:31px;height:26px;overflow:hidden;"><span style="position:absolute;top:0;font-size:16px;line-height:26px;color:#222;white-space:pre;letter-spacing:0.22px;word-spacing:0.7px;left:-184.3px;width:400px;text-align:center;">17</span></div>
<div class="a" style="top:463.46px;left:0px;width:31px;height:26px;overflow:hidden;"><span style="position:absolute;top:0;font-size:16px;line-height:26px;color:#222;white-space:pre;letter-spacing:0.22px;word-spacing:0.7px;left:-184.3px;width:400px;text-align:center;">18</span></div>
<div class="a" style="top:489.46px;left:0px;width:31px;height:26px;overflow:hidden;"><span style="position:absolute;top:0;font-size:16px;line-height:26px;color:#222;white-space:pre;letter-spacing:0.22px;word-spacing:0.7px;left:-184.3px;width:400px;text-align:center;">19</span></div>
<div class="a" style="top:515.46px;left:0px;width:31px;height:26px;overflow:hidden;"><span style="position:absolute;top:0;font-size:16px;line-height:26px;color:#222;white-space:pre;letter-spacing:0.22px;word-spacing:0.7px;left:-184.3px;width:400px;text-align:center;">20</span></div>
<div class="a" style="top:541.46px;left:0px;width:31px;height:26px;overflow:hidden;"><span style="position:absolute;top:0;font-size:16px;line-height:26px;color:#222;white-space:pre;letter-spacing:0.22px;word-spacing:0.7px;left:-184.3px;width:400px;text-align:center;">21</span></div>
<div class="a" style="top:567.46px;left:0px;width:31px;height:26px;overflow:hidden;"><span style="position:absolute;top:0;font-size:16px;line-height:26px;color:#222;white-space:pre;letter-spacing:0.22px;word-spacing:0.7px;left:-184.3px;width:400px;text-align:center;">22</span></div>
<div class="a" style="top:593.46px;left:0px;width:31px;height:26px;overflow:hidden;"><span style="position:absolute;top:0;font-size:16px;line-height:26px;color:#222;white-space:pre;letter-spacing:0.22px;word-spacing:0.7px;left:-184.3px;width:400px;text-align:center;">23</span></div>
<div class="a" style="top:619.46px;left:0px;width:31px;height:26px;overflow:hidden;"><span style="position:absolute;top:0;font-size:16px;line-height:26px;color:#222;white-space:pre;letter-spacing:0.22px;word-spacing:0.7px;left:-184.3px;width:400px;text-align:center;">24</span></div>
<div class="a" style="top:645.46px;left:0px;width:31px;height:26px;overflow:hidden;"><span style="position:absolute;top:0;font-size:16px;line-height:26px;color:#222;white-space:pre;letter-spacing:0.22px;word-spacing:0.7px;left:-184.3px;width:400px;text-align:center;">25</span></div>
<div class="a" style="top:671.46px;left:0px;width:31px;height:26px;overflow:hidden;"><span style="position:absolute;top:0;font-size:16px;line-height:26px;color:#222;white-space:pre;letter-spacing:0.22px;word-spacing:0.7px;left:-184.3px;width:400px;text-align:center;">26</span></div>
<div class="a" style="top:697.46px;left:0px;width:31px;height:26px;overflow:hidden;"><span style="position:absolute;top:0;font-size:16px;line-height:26px;color:#222;white-space:pre;letter-spacing:0.22px;word-spacing:0.7px;left:-184.3px;width:400px;text-align:center;">27</span></div>
<div class="a" style="left:0px;top:43px;width:1893px;height:1px;background:#9e9e9e;"></div>
<div class="a" style="left:1492px;top:250px;width:185px;height:28px;background:transparent;box-sizing:border-box;border:2px solid #217346;"></div>
<div class="a" style="left:1673px;top:274px;width:6px;height:6px;background:#217346;border:1px solid #fff;box-sizing:content-box;"></div>
</div>
<div class="a" style="left:1893px;top:247px;width:1px;height:714px;background:#9e9e9e;"></div>
<div class="a" style="left:1894px;top:247px;width:20px;height:714px;background:#f0f0f0;"></div>
<div class="a" style="left:1897px;top:249px;width:17px;height:19px;background:#fff;box-sizing:border-box;border:1px solid #b4b4b4;border-right:none;"></div>
<svg class="a" style="left:1902px;top:254px;" width="10" height="7" viewBox="0 0 10 7"><path d="M0 6 L5 0 L10 6 Z" fill="#333"/></svg>
<div class="a" style="left:1897px;top:268px;width:17px;height:21px;background:#fff;box-sizing:border-box;border:1px solid #b4b4b4;border-right:none;"></div>
<div class="a" style="left:1897px;top:942px;width:17px;height:19px;background:#fff;box-sizing:border-box;border:1px solid #b4b4b4;border-right:none;"></div>
<svg class="a" style="left:1902px;top:949px;" width="10" height="7" viewBox="0 0 10 7"><path d="M0 0 L10 0 L5 6 Z" fill="#333"/></svg>
<div class="a" style="left:1910px;top:240px;width:4px;height:22px;background:#217346;border-radius:3px 0 0 3px;"></div>
<div class="a" style="left:0px;top:961px;width:1914px;height:29px;background:#e6e6e6;"></div>
<div class="a" style="left:0px;top:990px;width:1914px;height:1px;background:#d0d0d0;"></div>
<div class="a" style="left:0px;top:991px;width:1914px;height:4px;background:#f0f0f0;"></div>
<div class="a" style="left:1543px;top:990px;width:50px;height:5px;background:#c8c8c8;"></div>
<div class="a" style="left:1166px;top:966px;width:726px;height:19px;background:#f0f0f0;"></div>
<svg class="a" style="left:26px;top:970px;" width="8" height="11" viewBox="0 0 8 11"><path d="M7 0 V10 L1 5 Z" fill="#b0b0b0"/></svg>
<svg class="a" style="left:55px;top:970px;" width="8" height="11" viewBox="0 0 8 11"><path d="M1 0 V10 L7 5 Z" fill="#b0b0b0"/></svg>
<div class="a" style="left:102px;top:961px;width:129px;height:26px;background:#fff;box-sizing:border-box;border-left:1px solid #c0c0c0;border-right:1px solid #c0c0c0;"></div>
<div class="a" style="left:102px;top:984px;width:129px;height:3px;background:#217346;"></div>
<div class="t" style="left:113.93px;top:962px;font-size:17.442px;line-height:20px;color:#217346;transform:scaleX(0.9575);transform-origin:0 0;font-weight:700;">Объявления</div>
<div class="a" style="left:231px;top:961px;width:1662px;height:1px;background:#b0b0b0;"></div>
<div class="t" style="left:246.40px;top:963px;font-size:16.860px;line-height:19px;color:#444;transform:scaleX(1.0237);transform-origin:0 0;">Анализ просмотров</div>
<div class="a" style="left:420px;top:967px;width:1px;height:19px;background:#a0a0a0;"></div>
<div class="t" style="left:437.60px;top:963px;font-size:16.860px;line-height:19px;color:#444;transform:scaleX(1.0211);transform-origin:0 0;">Анализ конкурентов</div>
<div class="a" style="left:616px;top:967px;width:1px;height:19px;background:#a0a0a0;"></div>
<div class="t" style="left:630.59px;top:963px;font-size:16.860px;line-height:19px;color:#444;transform:scaleX(0.9645);transform-origin:0 0;">Статистика</div>
<div class="a" style="left:733px;top:967px;width:1px;height:19px;background:#a0a0a0;"></div>
<svg class="a" style="left:765px;top:965px;" width="21" height="21" viewBox="0 0 21 21"><circle cx="10.5" cy="10.5" r="9.5" fill="none" stroke="#777" stroke-width="1.2"/><path d="M10.5 5 V16 M5 10.5 H16" stroke="#777" stroke-width="1.4"/></svg>
<div class="a" style="left:1148px;top:968px;width:3px;height:3px;background:#a6a6a6;border-radius:1px;"></div>
<div class="a" style="left:1148px;top:974px;width:3px;height:3px;background:#a6a6a6;border-radius:1px;"></div>
<div class="a" style="left:1148px;top:980px;width:3px;height:3px;background:#a6a6a6;border-radius:1px;"></div>
<div class="a" style="left:1166px;top:966px;width:20px;height:19px;background:#fff;box-sizing:border-box;border:1px solid #a8a8a8;"></div>
<svg class="a" style="left:1172px;top:970px;" width="7" height="11" viewBox="0 0 7 11"><path d="M6 0 V10 L0 5 Z" fill="#222"/></svg>
<div class="a" style="left:1185px;top:966px;width:366px;height:19px;background:#fff;box-sizing:border-box;border:1px solid #a8a8a8;"></div>
<div class="a" style="left:1872px;top:966px;width:20px;height:19px;background:#fff;box-sizing:border-box;border:1px solid #a8a8a8;"></div>
<svg class="a" style="left:1879px;top:970px;" width="7" height="11" viewBox="0 0 7 11"><path d="M0 0 V10 L6 5 Z" fill="#222"/></svg>
</body></html>
